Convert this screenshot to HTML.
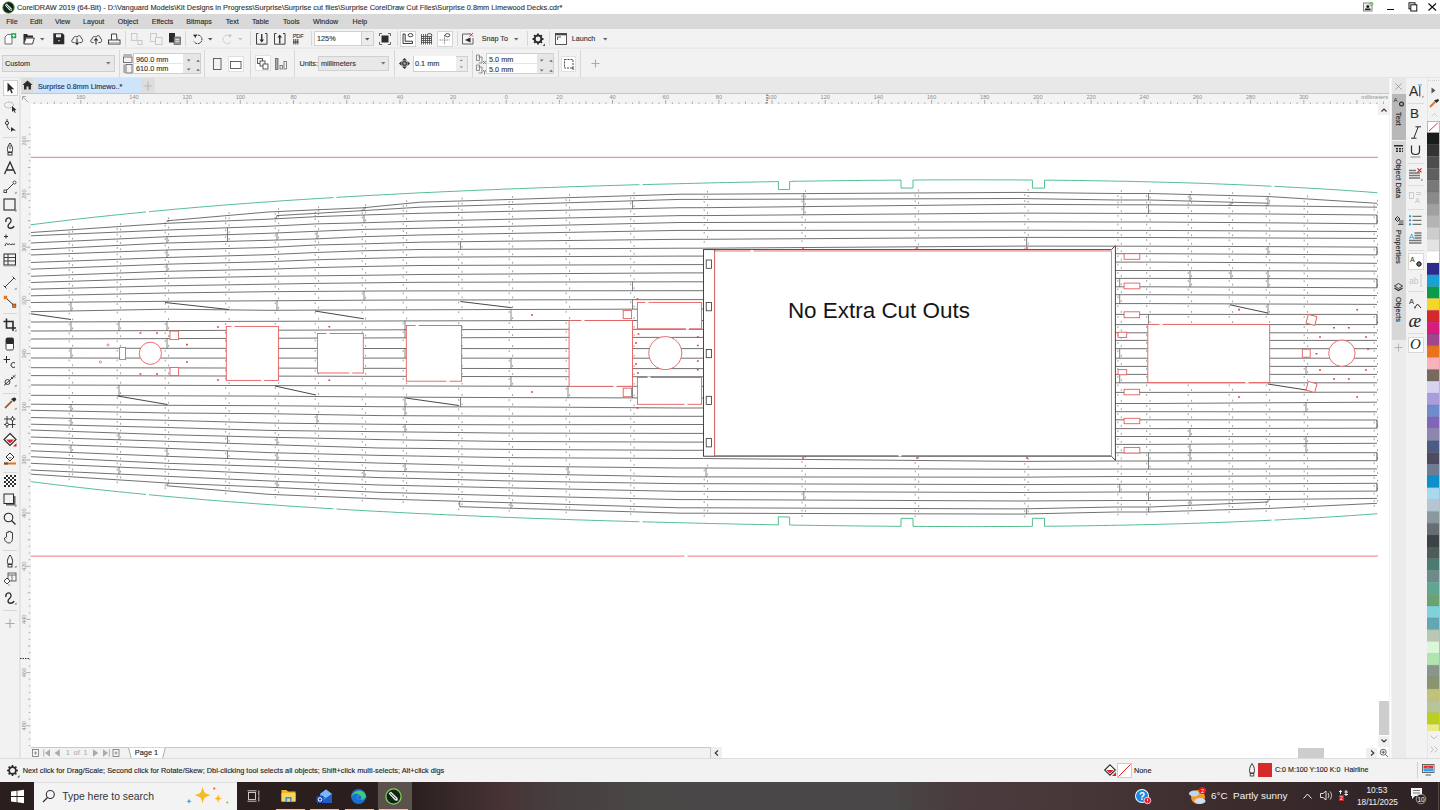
<!DOCTYPE html>
<html><head><meta charset="utf-8">
<style>
*{margin:0;padding:0;box-sizing:border-box}
html,body{width:1440px;height:810px;overflow:hidden;background:#f2f2f2;font-family:"Liberation Sans",sans-serif;color:#222}
.a{position:absolute}
.t{position:absolute;white-space:nowrap;line-height:1;-webkit-text-stroke:0.12px currentColor}
svg{position:absolute;overflow:visible}
.sep{position:absolute;width:1px;background:#d8d8d8}
</style></head><body>
<div class="a" style="left:0;top:0;width:1440px;height:14px;background:#fff"></div>
<svg style="left:1.5px;top:1px" width="13" height="13" viewBox="0 0 13 13"><circle cx="6.5" cy="6.5" r="5.8" fill="#10231a" stroke="#6cc04a" stroke-width="0.9"/><path d="M2.8 4.2 L4.6 2.6 L9.8 7.6 L10 10 L7.6 9.6Z" fill="#e6ece6"/><path d="M4.2 4.2 L8.6 8.4" stroke="#10231a" stroke-width="0.7"/><circle cx="8.8" cy="8.8" r="0.6" fill="#10231a"/></svg>
<div class="t" style="left:17px;top:4px;font-size:7.35px;color:#333">CorelDRAW 2019 (64-Bit) - D:\Vanguard Models\Kit Designs in Progress\Surprise\Surprise cut files\Surprise CorelDraw Cut Files\Surprise 0.8mm Limewood Decks.cdr*</div>
<svg style="left:1363px;top:2px" width="11" height="10"><rect x="0.5" y="1" width="8.5" height="8" fill="#eee" stroke="#888"/><circle cx="4.8" cy="4.5" r="1.5" fill="#222"/><rect x="2" y="6.5" width="5.5" height="1.6" fill="#222"/><circle cx="8.3" cy="2" r="1.6" fill="none" stroke="#4cbf6a" stroke-width="0.9"/></svg>
<div class="a" style="left:1387px;top:8.5px;width:7px;height:1.5px;background:#111"></div>
<svg style="left:1408px;top:2px" width="10" height="10"><rect x="1" y="0.8" width="6" height="6" fill="none" stroke="#111" stroke-width="1"/><rect x="2.8" y="2.8" width="6" height="6.2" fill="#fff" stroke="#111" stroke-width="1"/></svg>
<svg style="left:1428px;top:3px" width="9" height="8"><path d="M0.5 0.5 L8 7.5 M8 0.5 L0.5 7.5" stroke="#111" stroke-width="1.2"/></svg>
<div class="a" style="left:0;top:14px;width:1440px;height:15px;background:#d9d9d9"></div>
<div class="t" style="left:6.2px;top:19px;font-size:7.1px;color:#2a2a2a">File</div>
<div class="t" style="left:29.9px;top:19px;font-size:7.1px;color:#2a2a2a">Edit</div>
<div class="t" style="left:54.9px;top:19px;font-size:7.1px;color:#2a2a2a">View</div>
<div class="t" style="left:83px;top:19px;font-size:7.1px;color:#2a2a2a">Layout</div>
<div class="t" style="left:117.8px;top:19px;font-size:7.1px;color:#2a2a2a">Object</div>
<div class="t" style="left:151.8px;top:19px;font-size:7.1px;color:#2a2a2a">Effects</div>
<div class="t" style="left:186.2px;top:19px;font-size:7.1px;color:#2a2a2a">Bitmaps</div>
<div class="t" style="left:225.8px;top:19px;font-size:7.1px;color:#2a2a2a">Text</div>
<div class="t" style="left:252px;top:19px;font-size:7.1px;color:#2a2a2a">Table</div>
<div class="t" style="left:283px;top:19px;font-size:7.1px;color:#2a2a2a">Tools</div>
<div class="t" style="left:313px;top:19px;font-size:7.1px;color:#2a2a2a">Window</div>
<div class="t" style="left:352.6px;top:19px;font-size:7.1px;color:#2a2a2a">Help</div>
<div class="a" style="left:0;top:29px;width:1440px;height:19px;background:#f2f2f2;border-bottom:1px solid #ebebeb"></div>
<div class="sep" style="left:125.3px;top:31px;height:15px"></div>
<div class="sep" style="left:185.3px;top:31px;height:15px"></div>
<div class="sep" style="left:250px;top:31px;height:15px"></div>
<div class="sep" style="left:310.6px;top:31px;height:15px"></div>
<div class="sep" style="left:396.7px;top:31px;height:15px"></div>
<div class="sep" style="left:456.7px;top:31px;height:15px"></div>
<div class="sep" style="left:526.7px;top:31px;height:15px"></div>
<div class="sep" style="left:549.4px;top:31px;height:15px"></div>
<svg style="left:4px;top:33px" width="13" height="12"><path d="M1 4 L3.5 1.5 H8 V11 H1Z" fill="#fafafa" stroke="#666" stroke-width="0.9"/><rect x="7.2" y="0.2" width="5" height="5" fill="#1aa84a"/><path d="M9.7 1.2 V4.2 M8.2 2.7 H11.2" stroke="#fff" stroke-width="0.9"/></svg>
<svg style="left:22.8px;top:33px" width="12" height="12"><path d="M0.5 1 H4 L5 2.5 H10 V4.5 H3 L0.5 11Z" fill="#2b2b2b"/><path d="M3 5 H11.3 L9.5 11 H0.8Z" fill="#fafafa" stroke="#2b2b2b" stroke-width="0.9"/></svg>
<svg style="left:40px;top:38px" width="5" height="3"><path d="M0 0 H4.5 L2.25 2.5Z" fill="#666"/></svg>
<svg style="left:52.8px;top:33px" width="12" height="12"><path d="M0.3 0.3 H9.5 L11.3 2 V11.3 H0.3Z" fill="#2b2b2b"/><rect x="3" y="1.3" width="5" height="3" fill="#eee"/><rect x="5.3" y="7" width="1.3" height="1.3" fill="#eee"/></svg>
<svg style="left:71px;top:34px" width="12" height="11"><path d="M3.6 8.6 H2.4 C0.4 8.6 0.2 5.4 2.2 5.1 C2.2 2.6 4.9 1.7 6.1 3.2 C6.9 0.8 10.4 1.4 10.2 4.3 C12.1 4.4 12.1 8.6 10 8.6 H8.4" fill="none" stroke="#2b2b2b" stroke-width="0.9"/><path d="M6 4.5 V10.5 M4.3 8.5 L6 10.5 L7.7 8.5" fill="none" stroke="#2b2b2b" stroke-width="1.1"/></svg>
<svg style="left:89.8px;top:34px" width="12" height="11"><path d="M3.6 8.6 H2.4 C0.4 8.6 0.2 5.4 2.2 5.1 C2.2 2.6 4.9 1.7 6.1 3.2 C6.9 0.8 10.4 1.4 10.2 4.3 C12.1 4.4 12.1 8.6 10 8.6 H8.4" fill="none" stroke="#2b2b2b" stroke-width="0.9"/><path d="M6 10.5 V4.5 M4.3 6.5 L6 4.5 L7.7 6.5" fill="none" stroke="#2b2b2b" stroke-width="1.1"/></svg>
<svg style="left:108px;top:33px" width="13" height="12"><path d="M3.5 7 V1 H8.5 L9 7" fill="#fafafa" stroke="#2b2b2b" stroke-width="0.9"/><rect x="0.5" y="7" width="11.5" height="4" fill="#fafafa" stroke="#2b2b2b" stroke-width="0.9"/><rect x="1" y="9" width="10.5" height="1.6" fill="#bbb"/></svg>
<svg style="left:131px;top:33px" width="12" height="12"><rect x="0.5" y="0.5" width="5.5" height="7" fill="none" stroke="#c8c8c8"/><rect x="7" y="7.5" width="4" height="4" fill="none" stroke="#c8c8c8"/></svg>
<svg style="left:150px;top:33px" width="13" height="12"><rect x="0.5" y="0.5" width="6" height="8" fill="none" stroke="#c8c8c8"/><rect x="5.5" y="4.5" width="6.5" height="7" fill="#f2f2f2" stroke="#c8c8c8"/></svg>
<svg style="left:168.7px;top:33px" width="12" height="12"><rect x="0" y="0" width="6" height="9.5" fill="#2b2b2b"/><rect x="5" y="4" width="6.5" height="7.5" fill="#999" stroke="#555" stroke-width="0.7"/><path d="M6.5 6.5 H10 M6.5 8.3 H10" stroke="#fff" stroke-width="0.7"/></svg>
<svg style="left:191.7px;top:33px" width="12" height="12"><path d="M3.2 2.8 A4.3 4.3 0 1 1 2 8.6" fill="none" stroke="#2b2b2b" stroke-width="1" stroke-dasharray="2 0.7"/><path d="M1 1.8 L4.6 1.5 L3.6 5Z" fill="#2b2b2b"/></svg>
<svg style="left:208.3px;top:38px" width="5" height="3"><path d="M0 0 H4.5 L2.25 2.5Z" fill="#555"/></svg>
<svg style="left:221px;top:33px" width="12" height="12"><path d="M8.8 2.8 A4.3 4.3 0 1 0 10 8.6" fill="none" stroke="#c4c4c4" stroke-width="1" stroke-dasharray="2 0.7"/><path d="M11 1.8 L7.4 1.5 L8.4 5Z" fill="#c4c4c4"/></svg>
<svg style="left:238.3px;top:38px" width="5" height="3"><path d="M0 0 H4.5 L2.25 2.5Z" fill="#c4c4c4"/></svg>
<svg style="left:255.8px;top:33px" width="12" height="12"><path d="M2.5 0.5 H0.5 V11.2 H11 V0.5 H9" fill="none" stroke="#2b2b2b" stroke-width="0.9"/><path d="M5.75 1 V8.5" stroke="#2b2b2b" stroke-width="1.3"/><path d="M3.5 6.5 L5.75 9.5 L8 6.5Z" fill="#2b2b2b"/></svg>
<svg style="left:273.9px;top:33px" width="12" height="12"><path d="M2.5 0.5 H0.5 V11.2 H11 V0.5 H9" fill="none" stroke="#2b2b2b" stroke-width="0.9"/><path d="M5.75 3.5 V10.5" stroke="#2b2b2b" stroke-width="1.3"/><path d="M3.5 4.5 L5.75 1.5 L8 4.5Z" fill="#2b2b2b"/></svg>
<div class="t" style="left:292.8px;top:33.8px;font-size:5.6px;color:#333;letter-spacing:-0.2px">PDF</div>
<svg style="left:293px;top:39px" width="6" height="6"><path d="M0.8 0 V5.5 M2.8 0 V5.5 M4.8 0 V5.5 M0 3 H5.5" stroke="#2b2b2b" stroke-width="0.9"/></svg>
<div class="a" style="left:314.2px;top:31.3px;width:59.4px;height:15px;background:#fff;border:1px solid #d0d0d0"></div>
<div class="a" style="left:361.3px;top:31.3px;width:12.3px;height:15px;background:#ececec;border:1px solid #d0d0d0"></div>
<svg style="left:365px;top:38px" width="5" height="3"><path d="M0 0 H4.5 L2.25 2.5Z" fill="#555"/></svg>
<div class="t" style="left:317px;top:35px;font-size:7.3px;color:#333">125%</div>
<svg style="left:378.9px;top:33px" width="12" height="12"><rect x="2.5" y="2.5" width="7" height="7" fill="#2b2b2b"/><path d="M0.5 3 V0.5 H3 M9 0.5 H11.5 V3 M11.5 9 V11.5 H9 M3 11.5 H0.5 V9" fill="none" stroke="#555" stroke-width="0.9"/></svg>
<div class="a" style="left:400.2px;top:31px;width:15.4px;height:15.5px;background:#fff;border:1px solid #d4d4d4"></div>
<svg style="left:402px;top:33px" width="12" height="12"><path d="M1 1 V10.5 H10.5 V8.2 H3.2 V1Z" fill="#f0f0f0" stroke="#2b2b2b" stroke-width="0.9"/><ellipse cx="8.5" cy="2.2" rx="2.4" ry="1.6" fill="none" stroke="#2b2b2b" stroke-width="0.9"/></svg>
<svg style="left:420.6px;top:33px" width="12" height="12"><path d="M0.5 1 V11.5 M2.5 1 V11.5 M4.5 1 V11.5 M6.5 3 V11.5 M8.5 3 V11.5 M10.5 3 V11.5 M0 3.5 H11 M0 5.5 H11 M0 7.5 H11 M0 9.5 H11" stroke="#444" stroke-width="0.8"/><ellipse cx="8.5" cy="2.2" rx="2.4" ry="1.6" fill="#f2f2f2" stroke="#2b2b2b" stroke-width="0.8"/></svg>
<div class="a" style="left:437.2px;top:31px;width:15.6px;height:15.5px;background:#fff;border:1px solid #d4d4d4"></div>
<svg style="left:439px;top:33px" width="12" height="12"><path d="M5.5 2 V11.5 M0.5 7 H10.5" stroke="#666" stroke-width="0.8" stroke-dasharray="1.5 0.8"/><ellipse cx="8.5" cy="2.2" rx="2.4" ry="1.6" fill="none" stroke="#2b2b2b" stroke-width="0.8"/></svg>
<svg style="left:462px;top:33px" width="12" height="12"><path d="M0.5 1 H8 M0.5 1 V11 H11 V5" fill="none" stroke="#555" stroke-width="0.9"/><path d="M8.5 4.5 L3 7 L8.5 9.5Z" fill="#2b2b2b"/><path d="M7.5 0 L11 3.5 M11 0 L7.5 3.5" stroke="#e02020" stroke-width="0.9"/></svg>
<div class="t" style="left:481.7px;top:35px;font-size:7.2px;color:#333">Snap To</div>
<svg style="left:514.4px;top:38px" width="5" height="3"><path d="M0 0 H4.5 L2.25 2.5Z" fill="#666"/></svg>
<svg style="left:532px;top:33px" width="14" height="13"><circle cx="6" cy="6" r="3.4" fill="none" stroke="#2b2b2b" stroke-width="2"/><path d="M6 0.5 V2.5 M6 9.5 V11.5 M0.5 6 H2.5 M9.5 6 H11.5 M2.1 2.1 L3.5 3.5 M8.5 8.5 L9.9 9.9 M9.9 2.1 L8.5 3.5 M3.5 8.5 L2.1 9.9" stroke="#2b2b2b" stroke-width="1.8"/><path d="M13 10.5 V13 H10.5Z" fill="#555"/></svg>
<svg style="left:555px;top:33px" width="12" height="12"><rect x="0.5" y="0.5" width="11" height="11" fill="#fafafa" stroke="#444" stroke-width="0.9"/><rect x="0.5" y="0.5" width="11" height="1.8" fill="#444"/><path d="M2.5 4 H6 M2.5 4 V7" stroke="#555" stroke-width="0.9"/></svg>
<div class="t" style="left:571.7px;top:35px;font-size:7.2px;color:#333">Launch</div>
<svg style="left:602.8px;top:38px" width="5" height="3"><path d="M0 0 H4.5 L2.25 2.5Z" fill="#666"/></svg>
<div class="a" style="left:0;top:48px;width:1440px;height:30px;background:#f2f2f2;border-top:1px solid #e9e9e9;border-bottom:1px solid #e4e4e4"></div>
<div class="sep" style="left:118.7px;top:50px;height:27px"></div>
<div class="sep" style="left:204.3px;top:50px;height:27px"></div>
<div class="sep" style="left:249.8px;top:50px;height:27px"></div>
<div class="sep" style="left:294.4px;top:50px;height:27px"></div>
<div class="sep" style="left:393.7px;top:50px;height:27px"></div>
<div class="sep" style="left:471.7px;top:50px;height:27px"></div>
<div class="sep" style="left:557.8px;top:50px;height:27px"></div>
<div class="sep" style="left:580.2px;top:50px;height:27px"></div>
<div class="a" style="left:2px;top:55.4px;width:113px;height:16.3px;background:#e8e8e8;border:1px solid #cfcfcf"></div>
<div class="t" style="left:5px;top:59.5px;font-size:7.3px;color:#333">Custom</div>
<svg style="left:106px;top:62px" width="5" height="3"><path d="M0 0 H4.5 L2.25 2.5Z" fill="#777"/></svg>
<svg style="left:123px;top:54px" width="10" height="20"><path d="M0.5 1 H9" stroke="#444" stroke-width="0.7"/><rect x="0.5" y="3" width="8.5" height="5.5" fill="none" stroke="#555" stroke-width="0.8"/><rect x="0.5" y="10.5" width="1.2" height="8.5" fill="#888"/><rect x="3" y="10.5" width="6" height="8.5" fill="none" stroke="#555" stroke-width="0.8"/></svg>
<div class="a" style="left:133.1px;top:53.3px;width:67.8px;height:20.4px;background:#e6e6e6;border:1px solid #d0d0d0"></div>
<div class="a" style="left:134px;top:54.2px;width:49.4px;height:9px;background:#fff"></div>
<div class="a" style="left:134px;top:63.8px;width:49.4px;height:9px;background:#fff"></div>
<div class="t" style="left:136px;top:55.6px;font-size:7.3px;color:#333">960.0 mm</div>
<div class="t" style="left:136px;top:65.3px;font-size:7.3px;color:#333">610.0 mm</div>
<svg style="left:186px;top:58.5px" width="16" height="4"><path d="M0.8 0.6 H4.6 L2.7 2.6Z M10.2 2.8 H14 L12.1 0.8Z" fill="#6a6a6a"/></svg>
<svg style="left:186px;top:68.3px" width="16" height="4"><path d="M0.8 0.6 H4.6 L2.7 2.6Z M10.2 2.8 H14 L12.1 0.8Z" fill="#6a6a6a"/></svg>
<svg style="left:213px;top:58px" width="9" height="12"><rect x="0.5" y="0.5" width="7.5" height="11" fill="none" stroke="#555" stroke-width="0.9"/></svg>
<div class="a" style="left:228px;top:55.5px;width:15.6px;height:16px;background:#fff;border:1px solid #e0e0e0"></div>
<svg style="left:230px;top:61px" width="12" height="8"><rect x="0.5" y="0.5" width="10.5" height="7" fill="none" stroke="#555" stroke-width="0.9"/></svg>
<div class="a" style="left:255px;top:55.4px;width:15.6px;height:15.9px;background:#fff;border:1px solid #e0e0e0"></div>
<svg style="left:257px;top:58px" width="12" height="12"><rect x="0.5" y="0.5" width="5" height="5" fill="none" stroke="#333" stroke-width="0.8"/><rect x="3" y="3" width="5" height="5" fill="#fff" stroke="#333" stroke-width="0.8"/><rect x="6" y="6" width="5" height="5" fill="#fff" stroke="#333" stroke-width="0.8"/></svg>
<svg style="left:275px;top:58px" width="13" height="12"><rect x="0.5" y="0.5" width="2.5" height="11" fill="#aaa" stroke="#555" stroke-width="0.7"/><rect x="5" y="7.5" width="2.5" height="3.5" fill="none" stroke="#555" stroke-width="0.7"/><rect x="9" y="3.5" width="2.5" height="7.5" fill="none" stroke="#555" stroke-width="0.7"/></svg>
<div class="t" style="left:299.4px;top:59.8px;font-size:7.3px;color:#333">Units:</div>
<div class="a" style="left:318.3px;top:55.8px;width:71.1px;height:15.5px;background:#e8e8e8;border:1px solid #d0d0d0"></div>
<div class="t" style="left:321px;top:59.8px;font-size:7.3px;color:#333">millimeters</div>
<svg style="left:381px;top:62px" width="5" height="3"><path d="M0 0 H4.5 L2.25 2.5Z" fill="#777"/></svg>
<svg style="left:398.9px;top:58px" width="11" height="11"><path d="M5.5 0 L8 2.5 H3Z M5.5 11 L8 8.5 H3Z M0 5.5 L2.5 3 V8Z M11 5.5 L8.5 3 V8Z" fill="#333"/><circle cx="5.5" cy="5.5" r="2.7" fill="#444"/><circle cx="5.5" cy="5.5" r="1.2" fill="#aaa"/></svg>
<div class="a" style="left:412.6px;top:55.5px;width:55px;height:16.2px;background:#ececec;border:1px solid #d0d0d0"></div>
<div class="a" style="left:413.5px;top:56.4px;width:42.2px;height:14.4px;background:#fff"></div>
<div class="t" style="left:415px;top:60px;font-size:7.3px;color:#333">0.1 mm</div>
<svg style="left:459px;top:59px" width="5" height="10"><path d="M0.8 2 H3.8 L2.3 0.5Z M0.8 7.5 H3.8 L2.3 9Z" fill="#777"/></svg>
<svg style="left:475.6px;top:53.5px" width="12" height="21"><path d="M0.5 1 H3.5 V6.5 H0.5Z M2.5 3 H6 V9 H2.5" fill="none" stroke="#666" stroke-width="0.7"/><path d="M7 7 L10 10 M10 7 L7 10" stroke="#555" stroke-width="0.7"/><path d="M0.5 11 H3.5 V16.5 H0.5Z M2.5 13 H6 V19 H2.5" fill="none" stroke="#666" stroke-width="0.7"/><path d="M7 16 L8.5 18 L10 16 M8.5 18 V20.5" fill="none" stroke="#555" stroke-width="0.7"/></svg>
<div class="a" style="left:486.3px;top:53.3px;width:67.5px;height:21px;background:#e6e6e6;border:1px solid #d0d0d0"></div>
<div class="a" style="left:487.2px;top:54.2px;width:49.5px;height:9.3px;background:#fff"></div>
<div class="a" style="left:487.2px;top:64.2px;width:49.5px;height:9.3px;background:#fff"></div>
<div class="t" style="left:489px;top:55.7px;font-size:7.3px;color:#333">5.0 mm</div>
<div class="t" style="left:489px;top:65.6px;font-size:7.3px;color:#333">5.0 mm</div>
<svg style="left:538.5px;top:58.5px" width="16" height="4"><path d="M0.8 0.6 H4.6 L2.7 2.6Z M10.2 2.8 H14 L12.1 0.8Z" fill="#6a6a6a"/></svg>
<svg style="left:538.5px;top:68.5px" width="16" height="4"><path d="M0.8 0.6 H4.6 L2.7 2.6Z M10.2 2.8 H14 L12.1 0.8Z" fill="#6a6a6a"/></svg>
<div class="a" style="left:561.4px;top:55.9px;width:15px;height:15.8px;background:#fff;border:1px solid #e0e0e0"></div>
<svg style="left:563px;top:58px" width="12" height="12"><rect x="1.5" y="1.5" width="8.5" height="8.5" fill="none" stroke="#333" stroke-width="0.9" stroke-dasharray="2 1"/><path d="M9 9 L11.5 11.5 L9.5 11.5Z" fill="#333"/></svg>
<svg style="left:591px;top:59px" width="9" height="9"><path d="M4.5 0.5 V8.5 M0.5 4.5 H8.5" stroke="#aaa" stroke-width="1.1"/></svg>
<div class="a" style="left:0;top:78px;width:20px;height:680px;background:#f2f2f2;border-right:1px solid #e2e2e2"></div>
<div class="a" style="left:2.5px;top:79.7px;width:15.3px;height:16.8px;background:#fff;border:1px solid #cfcfcf"></div>
<svg style="left:6px;top:82px" width="9" height="12"><path d="M1.5 0.5 V10 L3.8 7.8 L5.5 11.5 L6.8 10.8 L5.2 7.3 L8.2 7.3Z" fill="#2b2b2b"/></svg>
<svg style="left:3px;top:100.4px" width="14" height="14"><ellipse cx="6" cy="5" rx="4.5" ry="3" fill="none" stroke="#888" stroke-width="0.8" stroke-dasharray="1.2 0.6"/><path d="M9 6 V12 L10.5 10.5 L11.8 13 L12.6 12.5 L11.5 10.2 L13.5 10Z" fill="#2b2b2b"/></svg>
<svg style="left:3px;top:119.3px" width="14" height="14"><circle cx="4" cy="4" r="1.6" fill="none" stroke="#2b2b2b" stroke-width="0.9"/><path d="M4 0 V2.4 M4 5.6 C4 9 6 10 7 11" fill="none" stroke="#2b2b2b" stroke-width="0.9"/><path d="M8 8 V13 L9.5 11.5 L13 11.5Z" fill="#2b2b2b"/></svg>
<div class="a" style="left:3px;top:137px;width:14px;height:1px;background:#d8d8d8"></div>
<svg style="left:3px;top:142.4px" width="14" height="14"><path d="M7 1 C4 5 4 8 5 10 H9 C10 8 10 5 7 1Z" fill="none" stroke="#2b2b2b" stroke-width="1"/><path d="M7 3 V7" stroke="#2b2b2b" stroke-width="0.8"/><rect x="5" y="10.5" width="4" height="2.5" fill="none" stroke="#2b2b2b" stroke-width="0.9"/></svg>
<svg style="left:3px;top:161.2px" width="14" height="14"><path d="M1.5 13 L7 1 L12.5 13 M3.5 9 H10.5" fill="none" stroke="#2b2b2b" stroke-width="1.3"/></svg>
<svg style="left:3px;top:180.1px" width="14" height="14"><path d="M3 11 L11 3" stroke="#2b2b2b" stroke-width="0.9"/><rect x="1" y="10" width="2.6" height="2.6" fill="#fff" stroke="#2b2b2b" stroke-width="0.8"/><circle cx="11.5" cy="2.5" r="1.5" fill="#fff" stroke="#2b2b2b" stroke-width="0.8"/><path d="M13.5 11.5 V13.5 H11.5Z" fill="#666"/></svg>
<svg style="left:3px;top:198.0px" width="14" height="14"><rect x="1" y="1" width="11" height="11" fill="none" stroke="#2b2b2b" stroke-width="1.1"/><path d="M13.5 11.5 V13.5 H11.5Z" fill="#666"/></svg>
<svg style="left:3px;top:215.8px" width="14" height="14"><path d="M3 6 C2 2 7 0 8 4 C9 7 5 7 5 10 C5 13 10 13 11 10" fill="none" stroke="#2b2b2b" stroke-width="1.3"/></svg>
<svg style="left:3px;top:233.6px" width="14" height="14"><path d="M3 0.5 V4.5 M1 2.5 H5 M2 12 C3 8 4 9 5 11 C6 9 7 10 8 11 C9 9 10 11 12 10" fill="none" stroke="#2b2b2b" stroke-width="1"/></svg>
<svg style="left:3px;top:252.7px" width="14" height="14"><rect x="1" y="1" width="11.5" height="11" fill="none" stroke="#2b2b2b" stroke-width="1"/><path d="M1 4.5 H12.5 M1 8 H12.5 M5 1 V12" stroke="#2b2b2b" stroke-width="0.9"/></svg>
<div class="a" style="left:3px;top:266px;width:14px;height:1px;background:#d8d8d8"></div>
<svg style="left:3px;top:275.8px" width="14" height="14"><path d="M2 11 L11 2 M0.5 9.5 L3.5 12.5 M9.5 0.5 L12.5 3.5" stroke="#2b2b2b" stroke-width="0.9"/><path d="M13.5 11.5 V13.5 H11.5Z" fill="#666"/></svg>
<svg style="left:3px;top:294.7px" width="14" height="14"><path d="M2.5 2.5 L11 10.5" stroke="#2b2b2b" stroke-width="1"/><rect x="0.8" y="0.8" width="3.4" height="3.4" fill="#e8731b"/><rect x="9.5" y="9" width="3.4" height="3.4" fill="#e8731b" stroke="#333" stroke-width="0.5"/></svg>
<div class="a" style="left:3px;top:313px;width:14px;height:1px;background:#d8d8d8"></div>
<svg style="left:3px;top:317.7px" width="14" height="14"><path d="M3.5 0.5 V10 H13 M0.5 3.5 H10 V13" fill="none" stroke="#2b2b2b" stroke-width="1.6"/><path d="M13.5 11.5 V13.5 H11.5Z" fill="#666"/></svg>
<svg style="left:3px;top:336.6px" width="14" height="14"><rect x="3" y="1" width="7.5" height="12" rx="1.5" fill="#fff" stroke="#2b2b2b" stroke-width="0.9"/><rect x="3" y="1" width="7.5" height="6" rx="1" fill="#2b2b2b"/></svg>
<svg style="left:3px;top:354.5px" width="14" height="14"><path d="M3.5 1 V8 M0.5 4.5 H7" stroke="#2b2b2b" stroke-width="1"/><path d="M12 8 A2.5 2.5 0 1 0 12 12" fill="none" stroke="#2b2b2b" stroke-width="1"/></svg>
<svg style="left:3px;top:373.4px" width="14" height="14"><circle cx="4.5" cy="9" r="2.5" fill="none" stroke="#2b2b2b" stroke-width="0.9"/><path d="M1 12.5 L12.5 2 M8 4 L10 6 M10 2.5 L12 4.5" stroke="#2b2b2b" stroke-width="0.9"/><path d="M13.5 11.5 V13.5 H11.5Z" fill="#666"/></svg>
<div class="a" style="left:3px;top:393px;width:14px;height:1px;background:#d8d8d8"></div>
<svg style="left:3px;top:396.4px" width="14" height="14"><path d="M2 12 L9 5" stroke="#e8731b" stroke-width="2.2"/><path d="M2 12 L9 5" stroke="#333" stroke-width="0.5"/><path d="M8 3 L11 6 L13 4 C14 3 12 1 11 1.5Z" fill="#2b2b2b"/><path d="M13.5 11.5 V13.5 H11.5Z" fill="#666"/></svg>
<svg style="left:3px;top:414.5px" width="14" height="14"><path d="M4 1 V13 M9.5 1 V13 M1 4 H12.5 M1 9.5 H12.5" stroke="#2b2b2b" stroke-width="0.9"/><circle cx="4" cy="9.5" r="1.5" fill="#fff" stroke="#2b2b2b" stroke-width="0.9"/><circle cx="9.5" cy="4" r="1.5" fill="#fff" stroke="#2b2b2b" stroke-width="0.9"/></svg>
<svg style="left:3px;top:433.4px" width="14" height="14"><path d="M7 0.5 L13 6.5 L7 12.5 L1 6.5Z" fill="#fff" stroke="#2b2b2b" stroke-width="1.2"/><path d="M3 6.5 H11 L7 10.5Z" fill="#e02020"/><path d="M13.5 10 V13.5 H10Z" fill="#e02020"/></svg>
<svg style="left:3px;top:452.3px" width="14" height="14"><path d="M7 1 L11 5 L7 9 L3 5Z" fill="#fff" stroke="#2b2b2b" stroke-width="1"/><path d="M5 5 H9 L7 7Z" fill="#e8731b"/><rect x="1" y="10.5" width="12" height="2" fill="#e8731b"/><rect x="1" y="10.5" width="4" height="2" fill="#555"/></svg>
<div class="a" style="left:3px;top:472px;width:14px;height:1px;background:#d8d8d8"></div>
<svg style="left:3px;top:474.4px" width="14" height="14"><rect x="1" y="1" width="12" height="12" fill="#2b2b2b"/><path d="M1 1 h2 v2 h-2z M5 1 h2 v2 h-2z M9 1 h2 v2 h-2z M3 3 h2 v2 h-2z M7 3 h2 v2 h-2z M11 3 h2 v2 h-2z M1 5 h2 v2 h-2z M5 5 h2 v2 h-2z M9 5 h2 v2 h-2z M3 7 h2 v2 h-2z M7 7 h2 v2 h-2z M11 7 h2 v2 h-2z M1 9 h2 v2 h-2z M5 9 h2 v2 h-2z M9 9 h2 v2 h-2z M3 11 h2 v2 h-2z M7 11 h2 v2 h-2z M11 11 h2 v2 h-2z" fill="#fff"/></svg>
<svg style="left:3px;top:493.2px" width="14" height="14"><rect x="3" y="3" width="9.5" height="9.5" fill="#666"/><rect x="1" y="1" width="9.5" height="9.5" fill="#f2f2f2" stroke="#2b2b2b" stroke-width="1"/><path d="M13.5 11.5 V13.5 H11.5Z" fill="#666"/></svg>
<svg style="left:3px;top:512.1px" width="14" height="14"><circle cx="5.5" cy="5.5" r="4.3" fill="none" stroke="#2b2b2b" stroke-width="1.1"/><path d="M8.5 8.5 L12.5 12.5" stroke="#2b2b2b" stroke-width="1.3"/></svg>
<svg style="left:3px;top:530.0px" width="14" height="14"><path d="M3.5 7 V3 C3.5 2 5 2 5 3 V2 C5 1 6.5 1 6.5 2 C6.5 1 8 1 8 2 V3 C8 2 9.5 2 9.5 3 V8 C9.5 12 7.5 13 6 13 C4 13 2 11.5 1.5 9 C1 7.5 2.5 7 3.5 8" fill="none" stroke="#2b2b2b" stroke-width="0.9"/></svg>
<div class="a" style="left:3px;top:549.5px;width:14px;height:1px;background:#d8d8d8"></div>
<svg style="left:3px;top:554.1px" width="14" height="14"><path d="M7 1 C4 5 4 8 5 10 H9 C10 8 10 5 7 1Z" fill="none" stroke="#2b2b2b" stroke-width="1"/><rect x="5" y="10.5" width="4" height="2.5" fill="none" stroke="#2b2b2b" stroke-width="0.9"/><path d="M13.5 11.5 V13.5 H11.5Z" fill="#666"/></svg>
<svg style="left:3px;top:572.2px" width="14" height="14"><rect x="5" y="1" width="8" height="8" fill="none" stroke="#555" stroke-width="0.9"/><path d="M5 3 H13 M9 3 V9" stroke="#555" stroke-width="0.8"/><path d="M4 6 L7 9 L4 12 L1 9Z" fill="#fff" stroke="#2b2b2b" stroke-width="0.9"/><circle cx="6" cy="13" r="0.8" fill="#e8731b"/></svg>
<svg style="left:3px;top:591.0px" width="14" height="14"><path d="M3 6 C2 2 7 0 8 4 C9 7 5 7 5 10 C5 13 10 13 11 10" fill="none" stroke="#2b2b2b" stroke-width="1.3"/><path d="M13.5 11.5 V13.5 H11.5Z" fill="#666"/></svg>
<div class="a" style="left:3px;top:609.5px;width:14px;height:1px;background:#d8d8d8"></div>
<svg style="left:3px;top:617.3px" width="14" height="14"><path d="M7 2 V11 M2.5 6.5 H11.5" stroke="#aaa" stroke-width="1.1"/></svg>
<div class="a" style="left:21px;top:78px;width:1369px;height:16px;background:#e8e8e8"></div>
<div class="a" style="left:21px;top:78px;width:13px;height:15px;background:#dcdcdc"></div>
<svg style="left:22px;top:80px" width="11" height="10"><path d="M0.5 5 L5.5 0.5 L10.5 5 H9 V9.5 H6.5 V6.5 H4.5 V9.5 H2 V5Z" fill="#2b2b2b"/></svg>
<div class="a" style="left:34.5px;top:78px;width:106px;height:15px;background:#cde4fa"></div>
<div class="t" style="left:38px;top:82.5px;font-size:7.2px;color:#2a2a4a">Surprise 0.8mm Limewo..*</div>
<div class="a" style="left:141px;top:78px;width:14px;height:15px;background:#dedede"></div>
<svg style="left:143px;top:80.5px" width="10" height="10"><path d="M5 0.5 V9.5 M0.5 5 H9.5" stroke="#b8b8b8" stroke-width="1.2"/></svg>
<div class="a" style="left:21px;top:92.8px;width:1368px;height:1.6px;background:#9fd3f2"></div>
<div class="a" style="left:19.5px;top:94.4px;width:1369.5px;height:9.8px;background:#f3f3f3"></div>
<div class="a" style="left:19.5px;top:94.4px;width:11px;height:663.6px;background:#f3f3f3;border-left:1px solid #e6e6e6"></div>
<svg style="left:22px;top:95.5px" width="8" height="8"><path d="M0.5 0.5 H4 M0.5 0.5 V4 M1 1 L6.5 6.5" stroke="#999" stroke-width="0.8" fill="none"/></svg>
<svg style="left:0;top:0" width="1440" height="810">
<line x1="34.3" y1="102.5" x2="34.3" y2="104" stroke="#9a9a9a" stroke-width="0.8"/>
<line x1="41.0" y1="102.5" x2="41.0" y2="104" stroke="#9a9a9a" stroke-width="0.8"/>
<line x1="47.6" y1="102.5" x2="47.6" y2="104" stroke="#9a9a9a" stroke-width="0.8"/>
<line x1="54.3" y1="101.5" x2="54.3" y2="104" stroke="#9a9a9a" stroke-width="0.8"/>
<line x1="60.9" y1="102.5" x2="60.9" y2="104" stroke="#9a9a9a" stroke-width="0.8"/>
<line x1="67.5" y1="102.5" x2="67.5" y2="104" stroke="#9a9a9a" stroke-width="0.8"/>
<line x1="74.2" y1="102.5" x2="74.2" y2="104" stroke="#9a9a9a" stroke-width="0.8"/>
<line x1="80.8" y1="100.0" x2="80.8" y2="104" stroke="#9a9a9a" stroke-width="0.8"/>
<text x="80.8" y="99.4" font-size="5.6" fill="#8c8c8c" text-anchor="middle" font-family="Liberation Sans">160</text>
<line x1="87.5" y1="102.5" x2="87.5" y2="104" stroke="#9a9a9a" stroke-width="0.8"/>
<line x1="94.1" y1="102.5" x2="94.1" y2="104" stroke="#9a9a9a" stroke-width="0.8"/>
<line x1="100.8" y1="102.5" x2="100.8" y2="104" stroke="#9a9a9a" stroke-width="0.8"/>
<line x1="107.4" y1="101.5" x2="107.4" y2="104" stroke="#9a9a9a" stroke-width="0.8"/>
<line x1="114.1" y1="102.5" x2="114.1" y2="104" stroke="#9a9a9a" stroke-width="0.8"/>
<line x1="120.7" y1="102.5" x2="120.7" y2="104" stroke="#9a9a9a" stroke-width="0.8"/>
<line x1="127.4" y1="102.5" x2="127.4" y2="104" stroke="#9a9a9a" stroke-width="0.8"/>
<line x1="134.0" y1="100.0" x2="134.0" y2="104" stroke="#9a9a9a" stroke-width="0.8"/>
<text x="134.0" y="99.4" font-size="5.6" fill="#8c8c8c" text-anchor="middle" font-family="Liberation Sans">140</text>
<line x1="140.7" y1="102.5" x2="140.7" y2="104" stroke="#9a9a9a" stroke-width="0.8"/>
<line x1="147.3" y1="102.5" x2="147.3" y2="104" stroke="#9a9a9a" stroke-width="0.8"/>
<line x1="153.9" y1="102.5" x2="153.9" y2="104" stroke="#9a9a9a" stroke-width="0.8"/>
<line x1="160.6" y1="101.5" x2="160.6" y2="104" stroke="#9a9a9a" stroke-width="0.8"/>
<line x1="167.2" y1="102.5" x2="167.2" y2="104" stroke="#9a9a9a" stroke-width="0.8"/>
<line x1="173.9" y1="102.5" x2="173.9" y2="104" stroke="#9a9a9a" stroke-width="0.8"/>
<line x1="180.5" y1="102.5" x2="180.5" y2="104" stroke="#9a9a9a" stroke-width="0.8"/>
<line x1="187.2" y1="100.0" x2="187.2" y2="104" stroke="#9a9a9a" stroke-width="0.8"/>
<text x="187.2" y="99.4" font-size="5.6" fill="#8c8c8c" text-anchor="middle" font-family="Liberation Sans">120</text>
<line x1="193.8" y1="102.5" x2="193.8" y2="104" stroke="#9a9a9a" stroke-width="0.8"/>
<line x1="200.5" y1="102.5" x2="200.5" y2="104" stroke="#9a9a9a" stroke-width="0.8"/>
<line x1="207.1" y1="102.5" x2="207.1" y2="104" stroke="#9a9a9a" stroke-width="0.8"/>
<line x1="213.8" y1="101.5" x2="213.8" y2="104" stroke="#9a9a9a" stroke-width="0.8"/>
<line x1="220.4" y1="102.5" x2="220.4" y2="104" stroke="#9a9a9a" stroke-width="0.8"/>
<line x1="227.1" y1="102.5" x2="227.1" y2="104" stroke="#9a9a9a" stroke-width="0.8"/>
<line x1="233.7" y1="102.5" x2="233.7" y2="104" stroke="#9a9a9a" stroke-width="0.8"/>
<line x1="240.3" y1="100.0" x2="240.3" y2="104" stroke="#9a9a9a" stroke-width="0.8"/>
<text x="240.3" y="99.4" font-size="5.6" fill="#8c8c8c" text-anchor="middle" font-family="Liberation Sans">100</text>
<line x1="247.0" y1="102.5" x2="247.0" y2="104" stroke="#9a9a9a" stroke-width="0.8"/>
<line x1="253.6" y1="102.5" x2="253.6" y2="104" stroke="#9a9a9a" stroke-width="0.8"/>
<line x1="260.3" y1="102.5" x2="260.3" y2="104" stroke="#9a9a9a" stroke-width="0.8"/>
<line x1="266.9" y1="101.5" x2="266.9" y2="104" stroke="#9a9a9a" stroke-width="0.8"/>
<line x1="273.6" y1="102.5" x2="273.6" y2="104" stroke="#9a9a9a" stroke-width="0.8"/>
<line x1="280.2" y1="102.5" x2="280.2" y2="104" stroke="#9a9a9a" stroke-width="0.8"/>
<line x1="286.9" y1="102.5" x2="286.9" y2="104" stroke="#9a9a9a" stroke-width="0.8"/>
<line x1="293.5" y1="100.0" x2="293.5" y2="104" stroke="#9a9a9a" stroke-width="0.8"/>
<text x="293.5" y="99.4" font-size="5.6" fill="#8c8c8c" text-anchor="middle" font-family="Liberation Sans">80</text>
<line x1="300.2" y1="102.5" x2="300.2" y2="104" stroke="#9a9a9a" stroke-width="0.8"/>
<line x1="306.8" y1="102.5" x2="306.8" y2="104" stroke="#9a9a9a" stroke-width="0.8"/>
<line x1="313.5" y1="102.5" x2="313.5" y2="104" stroke="#9a9a9a" stroke-width="0.8"/>
<line x1="320.1" y1="101.5" x2="320.1" y2="104" stroke="#9a9a9a" stroke-width="0.8"/>
<line x1="326.8" y1="102.5" x2="326.8" y2="104" stroke="#9a9a9a" stroke-width="0.8"/>
<line x1="333.4" y1="102.5" x2="333.4" y2="104" stroke="#9a9a9a" stroke-width="0.8"/>
<line x1="340.0" y1="102.5" x2="340.0" y2="104" stroke="#9a9a9a" stroke-width="0.8"/>
<line x1="346.7" y1="100.0" x2="346.7" y2="104" stroke="#9a9a9a" stroke-width="0.8"/>
<text x="346.7" y="99.4" font-size="5.6" fill="#8c8c8c" text-anchor="middle" font-family="Liberation Sans">60</text>
<line x1="353.3" y1="102.5" x2="353.3" y2="104" stroke="#9a9a9a" stroke-width="0.8"/>
<line x1="360.0" y1="102.5" x2="360.0" y2="104" stroke="#9a9a9a" stroke-width="0.8"/>
<line x1="366.6" y1="102.5" x2="366.6" y2="104" stroke="#9a9a9a" stroke-width="0.8"/>
<line x1="373.3" y1="101.5" x2="373.3" y2="104" stroke="#9a9a9a" stroke-width="0.8"/>
<line x1="379.9" y1="102.5" x2="379.9" y2="104" stroke="#9a9a9a" stroke-width="0.8"/>
<line x1="386.6" y1="102.5" x2="386.6" y2="104" stroke="#9a9a9a" stroke-width="0.8"/>
<line x1="393.2" y1="102.5" x2="393.2" y2="104" stroke="#9a9a9a" stroke-width="0.8"/>
<line x1="399.9" y1="100.0" x2="399.9" y2="104" stroke="#9a9a9a" stroke-width="0.8"/>
<text x="399.9" y="99.4" font-size="5.6" fill="#8c8c8c" text-anchor="middle" font-family="Liberation Sans">40</text>
<line x1="406.5" y1="102.5" x2="406.5" y2="104" stroke="#9a9a9a" stroke-width="0.8"/>
<line x1="413.2" y1="102.5" x2="413.2" y2="104" stroke="#9a9a9a" stroke-width="0.8"/>
<line x1="419.8" y1="102.5" x2="419.8" y2="104" stroke="#9a9a9a" stroke-width="0.8"/>
<line x1="426.4" y1="101.5" x2="426.4" y2="104" stroke="#9a9a9a" stroke-width="0.8"/>
<line x1="433.1" y1="102.5" x2="433.1" y2="104" stroke="#9a9a9a" stroke-width="0.8"/>
<line x1="439.7" y1="102.5" x2="439.7" y2="104" stroke="#9a9a9a" stroke-width="0.8"/>
<line x1="446.4" y1="102.5" x2="446.4" y2="104" stroke="#9a9a9a" stroke-width="0.8"/>
<line x1="453.0" y1="100.0" x2="453.0" y2="104" stroke="#9a9a9a" stroke-width="0.8"/>
<text x="453.0" y="99.4" font-size="5.6" fill="#8c8c8c" text-anchor="middle" font-family="Liberation Sans">20</text>
<line x1="459.7" y1="102.5" x2="459.7" y2="104" stroke="#9a9a9a" stroke-width="0.8"/>
<line x1="466.3" y1="102.5" x2="466.3" y2="104" stroke="#9a9a9a" stroke-width="0.8"/>
<line x1="473.0" y1="102.5" x2="473.0" y2="104" stroke="#9a9a9a" stroke-width="0.8"/>
<line x1="479.6" y1="101.5" x2="479.6" y2="104" stroke="#9a9a9a" stroke-width="0.8"/>
<line x1="486.3" y1="102.5" x2="486.3" y2="104" stroke="#9a9a9a" stroke-width="0.8"/>
<line x1="492.9" y1="102.5" x2="492.9" y2="104" stroke="#9a9a9a" stroke-width="0.8"/>
<line x1="499.6" y1="102.5" x2="499.6" y2="104" stroke="#9a9a9a" stroke-width="0.8"/>
<line x1="506.2" y1="100.0" x2="506.2" y2="104" stroke="#9a9a9a" stroke-width="0.8"/>
<text x="506.2" y="99.4" font-size="5.6" fill="#8c8c8c" text-anchor="middle" font-family="Liberation Sans">0</text>
<line x1="512.8" y1="102.5" x2="512.8" y2="104" stroke="#9a9a9a" stroke-width="0.8"/>
<line x1="519.5" y1="102.5" x2="519.5" y2="104" stroke="#9a9a9a" stroke-width="0.8"/>
<line x1="526.1" y1="102.5" x2="526.1" y2="104" stroke="#9a9a9a" stroke-width="0.8"/>
<line x1="532.8" y1="101.5" x2="532.8" y2="104" stroke="#9a9a9a" stroke-width="0.8"/>
<line x1="539.4" y1="102.5" x2="539.4" y2="104" stroke="#9a9a9a" stroke-width="0.8"/>
<line x1="546.1" y1="102.5" x2="546.1" y2="104" stroke="#9a9a9a" stroke-width="0.8"/>
<line x1="552.7" y1="102.5" x2="552.7" y2="104" stroke="#9a9a9a" stroke-width="0.8"/>
<line x1="559.4" y1="100.0" x2="559.4" y2="104" stroke="#9a9a9a" stroke-width="0.8"/>
<text x="559.4" y="99.4" font-size="5.6" fill="#8c8c8c" text-anchor="middle" font-family="Liberation Sans">20</text>
<line x1="566.0" y1="102.5" x2="566.0" y2="104" stroke="#9a9a9a" stroke-width="0.8"/>
<line x1="572.7" y1="102.5" x2="572.7" y2="104" stroke="#9a9a9a" stroke-width="0.8"/>
<line x1="579.3" y1="102.5" x2="579.3" y2="104" stroke="#9a9a9a" stroke-width="0.8"/>
<line x1="586.0" y1="101.5" x2="586.0" y2="104" stroke="#9a9a9a" stroke-width="0.8"/>
<line x1="592.6" y1="102.5" x2="592.6" y2="104" stroke="#9a9a9a" stroke-width="0.8"/>
<line x1="599.2" y1="102.5" x2="599.2" y2="104" stroke="#9a9a9a" stroke-width="0.8"/>
<line x1="605.9" y1="102.5" x2="605.9" y2="104" stroke="#9a9a9a" stroke-width="0.8"/>
<line x1="612.5" y1="100.0" x2="612.5" y2="104" stroke="#9a9a9a" stroke-width="0.8"/>
<text x="612.5" y="99.4" font-size="5.6" fill="#8c8c8c" text-anchor="middle" font-family="Liberation Sans">40</text>
<line x1="619.2" y1="102.5" x2="619.2" y2="104" stroke="#9a9a9a" stroke-width="0.8"/>
<line x1="625.8" y1="102.5" x2="625.8" y2="104" stroke="#9a9a9a" stroke-width="0.8"/>
<line x1="632.5" y1="102.5" x2="632.5" y2="104" stroke="#9a9a9a" stroke-width="0.8"/>
<line x1="639.1" y1="101.5" x2="639.1" y2="104" stroke="#9a9a9a" stroke-width="0.8"/>
<line x1="645.8" y1="102.5" x2="645.8" y2="104" stroke="#9a9a9a" stroke-width="0.8"/>
<line x1="652.4" y1="102.5" x2="652.4" y2="104" stroke="#9a9a9a" stroke-width="0.8"/>
<line x1="659.1" y1="102.5" x2="659.1" y2="104" stroke="#9a9a9a" stroke-width="0.8"/>
<line x1="665.7" y1="100.0" x2="665.7" y2="104" stroke="#9a9a9a" stroke-width="0.8"/>
<text x="665.7" y="99.4" font-size="5.6" fill="#8c8c8c" text-anchor="middle" font-family="Liberation Sans">60</text>
<line x1="672.4" y1="102.5" x2="672.4" y2="104" stroke="#9a9a9a" stroke-width="0.8"/>
<line x1="679.0" y1="102.5" x2="679.0" y2="104" stroke="#9a9a9a" stroke-width="0.8"/>
<line x1="685.6" y1="102.5" x2="685.6" y2="104" stroke="#9a9a9a" stroke-width="0.8"/>
<line x1="692.3" y1="101.5" x2="692.3" y2="104" stroke="#9a9a9a" stroke-width="0.8"/>
<line x1="698.9" y1="102.5" x2="698.9" y2="104" stroke="#9a9a9a" stroke-width="0.8"/>
<line x1="705.6" y1="102.5" x2="705.6" y2="104" stroke="#9a9a9a" stroke-width="0.8"/>
<line x1="712.2" y1="102.5" x2="712.2" y2="104" stroke="#9a9a9a" stroke-width="0.8"/>
<line x1="718.9" y1="100.0" x2="718.9" y2="104" stroke="#9a9a9a" stroke-width="0.8"/>
<text x="718.9" y="99.4" font-size="5.6" fill="#8c8c8c" text-anchor="middle" font-family="Liberation Sans">80</text>
<line x1="725.5" y1="102.5" x2="725.5" y2="104" stroke="#9a9a9a" stroke-width="0.8"/>
<line x1="732.2" y1="102.5" x2="732.2" y2="104" stroke="#9a9a9a" stroke-width="0.8"/>
<line x1="738.8" y1="102.5" x2="738.8" y2="104" stroke="#9a9a9a" stroke-width="0.8"/>
<line x1="745.5" y1="101.5" x2="745.5" y2="104" stroke="#9a9a9a" stroke-width="0.8"/>
<line x1="752.1" y1="102.5" x2="752.1" y2="104" stroke="#9a9a9a" stroke-width="0.8"/>
<line x1="758.8" y1="102.5" x2="758.8" y2="104" stroke="#9a9a9a" stroke-width="0.8"/>
<line x1="765.4" y1="102.5" x2="765.4" y2="104" stroke="#9a9a9a" stroke-width="0.8"/>
<line x1="772.0" y1="100.0" x2="772.0" y2="104" stroke="#9a9a9a" stroke-width="0.8"/>
<text x="772.0" y="99.4" font-size="5.6" fill="#8c8c8c" text-anchor="middle" font-family="Liberation Sans">100</text>
<line x1="778.7" y1="102.5" x2="778.7" y2="104" stroke="#9a9a9a" stroke-width="0.8"/>
<line x1="785.3" y1="102.5" x2="785.3" y2="104" stroke="#9a9a9a" stroke-width="0.8"/>
<line x1="792.0" y1="102.5" x2="792.0" y2="104" stroke="#9a9a9a" stroke-width="0.8"/>
<line x1="798.6" y1="101.5" x2="798.6" y2="104" stroke="#9a9a9a" stroke-width="0.8"/>
<line x1="805.3" y1="102.5" x2="805.3" y2="104" stroke="#9a9a9a" stroke-width="0.8"/>
<line x1="811.9" y1="102.5" x2="811.9" y2="104" stroke="#9a9a9a" stroke-width="0.8"/>
<line x1="818.6" y1="102.5" x2="818.6" y2="104" stroke="#9a9a9a" stroke-width="0.8"/>
<line x1="825.2" y1="100.0" x2="825.2" y2="104" stroke="#9a9a9a" stroke-width="0.8"/>
<text x="825.2" y="99.4" font-size="5.6" fill="#8c8c8c" text-anchor="middle" font-family="Liberation Sans">120</text>
<line x1="831.9" y1="102.5" x2="831.9" y2="104" stroke="#9a9a9a" stroke-width="0.8"/>
<line x1="838.5" y1="102.5" x2="838.5" y2="104" stroke="#9a9a9a" stroke-width="0.8"/>
<line x1="845.2" y1="102.5" x2="845.2" y2="104" stroke="#9a9a9a" stroke-width="0.8"/>
<line x1="851.8" y1="101.5" x2="851.8" y2="104" stroke="#9a9a9a" stroke-width="0.8"/>
<line x1="858.5" y1="102.5" x2="858.5" y2="104" stroke="#9a9a9a" stroke-width="0.8"/>
<line x1="865.1" y1="102.5" x2="865.1" y2="104" stroke="#9a9a9a" stroke-width="0.8"/>
<line x1="871.7" y1="102.5" x2="871.7" y2="104" stroke="#9a9a9a" stroke-width="0.8"/>
<line x1="878.4" y1="100.0" x2="878.4" y2="104" stroke="#9a9a9a" stroke-width="0.8"/>
<text x="878.4" y="99.4" font-size="5.6" fill="#8c8c8c" text-anchor="middle" font-family="Liberation Sans">140</text>
<line x1="885.0" y1="102.5" x2="885.0" y2="104" stroke="#9a9a9a" stroke-width="0.8"/>
<line x1="891.7" y1="102.5" x2="891.7" y2="104" stroke="#9a9a9a" stroke-width="0.8"/>
<line x1="898.3" y1="102.5" x2="898.3" y2="104" stroke="#9a9a9a" stroke-width="0.8"/>
<line x1="905.0" y1="101.5" x2="905.0" y2="104" stroke="#9a9a9a" stroke-width="0.8"/>
<line x1="911.6" y1="102.5" x2="911.6" y2="104" stroke="#9a9a9a" stroke-width="0.8"/>
<line x1="918.3" y1="102.5" x2="918.3" y2="104" stroke="#9a9a9a" stroke-width="0.8"/>
<line x1="924.9" y1="102.5" x2="924.9" y2="104" stroke="#9a9a9a" stroke-width="0.8"/>
<line x1="931.6" y1="100.0" x2="931.6" y2="104" stroke="#9a9a9a" stroke-width="0.8"/>
<text x="931.6" y="99.4" font-size="5.6" fill="#8c8c8c" text-anchor="middle" font-family="Liberation Sans">160</text>
<line x1="938.2" y1="102.5" x2="938.2" y2="104" stroke="#9a9a9a" stroke-width="0.8"/>
<line x1="944.9" y1="102.5" x2="944.9" y2="104" stroke="#9a9a9a" stroke-width="0.8"/>
<line x1="951.5" y1="102.5" x2="951.5" y2="104" stroke="#9a9a9a" stroke-width="0.8"/>
<line x1="958.1" y1="101.5" x2="958.1" y2="104" stroke="#9a9a9a" stroke-width="0.8"/>
<line x1="964.8" y1="102.5" x2="964.8" y2="104" stroke="#9a9a9a" stroke-width="0.8"/>
<line x1="971.4" y1="102.5" x2="971.4" y2="104" stroke="#9a9a9a" stroke-width="0.8"/>
<line x1="978.1" y1="102.5" x2="978.1" y2="104" stroke="#9a9a9a" stroke-width="0.8"/>
<line x1="984.7" y1="100.0" x2="984.7" y2="104" stroke="#9a9a9a" stroke-width="0.8"/>
<text x="984.7" y="99.4" font-size="5.6" fill="#8c8c8c" text-anchor="middle" font-family="Liberation Sans">180</text>
<line x1="991.4" y1="102.5" x2="991.4" y2="104" stroke="#9a9a9a" stroke-width="0.8"/>
<line x1="998.0" y1="102.5" x2="998.0" y2="104" stroke="#9a9a9a" stroke-width="0.8"/>
<line x1="1004.7" y1="102.5" x2="1004.7" y2="104" stroke="#9a9a9a" stroke-width="0.8"/>
<line x1="1011.3" y1="101.5" x2="1011.3" y2="104" stroke="#9a9a9a" stroke-width="0.8"/>
<line x1="1018.0" y1="102.5" x2="1018.0" y2="104" stroke="#9a9a9a" stroke-width="0.8"/>
<line x1="1024.6" y1="102.5" x2="1024.6" y2="104" stroke="#9a9a9a" stroke-width="0.8"/>
<line x1="1031.3" y1="102.5" x2="1031.3" y2="104" stroke="#9a9a9a" stroke-width="0.8"/>
<line x1="1037.9" y1="100.0" x2="1037.9" y2="104" stroke="#9a9a9a" stroke-width="0.8"/>
<text x="1037.9" y="99.4" font-size="5.6" fill="#8c8c8c" text-anchor="middle" font-family="Liberation Sans">200</text>
<line x1="1044.5" y1="102.5" x2="1044.5" y2="104" stroke="#9a9a9a" stroke-width="0.8"/>
<line x1="1051.2" y1="102.5" x2="1051.2" y2="104" stroke="#9a9a9a" stroke-width="0.8"/>
<line x1="1057.8" y1="102.5" x2="1057.8" y2="104" stroke="#9a9a9a" stroke-width="0.8"/>
<line x1="1064.5" y1="101.5" x2="1064.5" y2="104" stroke="#9a9a9a" stroke-width="0.8"/>
<line x1="1071.1" y1="102.5" x2="1071.1" y2="104" stroke="#9a9a9a" stroke-width="0.8"/>
<line x1="1077.8" y1="102.5" x2="1077.8" y2="104" stroke="#9a9a9a" stroke-width="0.8"/>
<line x1="1084.4" y1="102.5" x2="1084.4" y2="104" stroke="#9a9a9a" stroke-width="0.8"/>
<line x1="1091.1" y1="100.0" x2="1091.1" y2="104" stroke="#9a9a9a" stroke-width="0.8"/>
<text x="1091.1" y="99.4" font-size="5.6" fill="#8c8c8c" text-anchor="middle" font-family="Liberation Sans">220</text>
<line x1="1097.7" y1="102.5" x2="1097.7" y2="104" stroke="#9a9a9a" stroke-width="0.8"/>
<line x1="1104.4" y1="102.5" x2="1104.4" y2="104" stroke="#9a9a9a" stroke-width="0.8"/>
<line x1="1111.0" y1="102.5" x2="1111.0" y2="104" stroke="#9a9a9a" stroke-width="0.8"/>
<line x1="1117.7" y1="101.5" x2="1117.7" y2="104" stroke="#9a9a9a" stroke-width="0.8"/>
<line x1="1124.3" y1="102.5" x2="1124.3" y2="104" stroke="#9a9a9a" stroke-width="0.8"/>
<line x1="1130.9" y1="102.5" x2="1130.9" y2="104" stroke="#9a9a9a" stroke-width="0.8"/>
<line x1="1137.6" y1="102.5" x2="1137.6" y2="104" stroke="#9a9a9a" stroke-width="0.8"/>
<line x1="1144.2" y1="100.0" x2="1144.2" y2="104" stroke="#9a9a9a" stroke-width="0.8"/>
<text x="1144.2" y="99.4" font-size="5.6" fill="#8c8c8c" text-anchor="middle" font-family="Liberation Sans">240</text>
<line x1="1150.9" y1="102.5" x2="1150.9" y2="104" stroke="#9a9a9a" stroke-width="0.8"/>
<line x1="1157.5" y1="102.5" x2="1157.5" y2="104" stroke="#9a9a9a" stroke-width="0.8"/>
<line x1="1164.2" y1="102.5" x2="1164.2" y2="104" stroke="#9a9a9a" stroke-width="0.8"/>
<line x1="1170.8" y1="101.5" x2="1170.8" y2="104" stroke="#9a9a9a" stroke-width="0.8"/>
<line x1="1177.5" y1="102.5" x2="1177.5" y2="104" stroke="#9a9a9a" stroke-width="0.8"/>
<line x1="1184.1" y1="102.5" x2="1184.1" y2="104" stroke="#9a9a9a" stroke-width="0.8"/>
<line x1="1190.8" y1="102.5" x2="1190.8" y2="104" stroke="#9a9a9a" stroke-width="0.8"/>
<line x1="1197.4" y1="100.0" x2="1197.4" y2="104" stroke="#9a9a9a" stroke-width="0.8"/>
<text x="1197.4" y="99.4" font-size="5.6" fill="#8c8c8c" text-anchor="middle" font-family="Liberation Sans">260</text>
<line x1="1204.1" y1="102.5" x2="1204.1" y2="104" stroke="#9a9a9a" stroke-width="0.8"/>
<line x1="1210.7" y1="102.5" x2="1210.7" y2="104" stroke="#9a9a9a" stroke-width="0.8"/>
<line x1="1217.3" y1="102.5" x2="1217.3" y2="104" stroke="#9a9a9a" stroke-width="0.8"/>
<line x1="1224.0" y1="101.5" x2="1224.0" y2="104" stroke="#9a9a9a" stroke-width="0.8"/>
<line x1="1230.6" y1="102.5" x2="1230.6" y2="104" stroke="#9a9a9a" stroke-width="0.8"/>
<line x1="1237.3" y1="102.5" x2="1237.3" y2="104" stroke="#9a9a9a" stroke-width="0.8"/>
<line x1="1243.9" y1="102.5" x2="1243.9" y2="104" stroke="#9a9a9a" stroke-width="0.8"/>
<line x1="1250.6" y1="100.0" x2="1250.6" y2="104" stroke="#9a9a9a" stroke-width="0.8"/>
<text x="1250.6" y="99.4" font-size="5.6" fill="#8c8c8c" text-anchor="middle" font-family="Liberation Sans">280</text>
<line x1="1257.2" y1="102.5" x2="1257.2" y2="104" stroke="#9a9a9a" stroke-width="0.8"/>
<line x1="1263.9" y1="102.5" x2="1263.9" y2="104" stroke="#9a9a9a" stroke-width="0.8"/>
<line x1="1270.5" y1="102.5" x2="1270.5" y2="104" stroke="#9a9a9a" stroke-width="0.8"/>
<line x1="1277.2" y1="101.5" x2="1277.2" y2="104" stroke="#9a9a9a" stroke-width="0.8"/>
<line x1="1283.8" y1="102.5" x2="1283.8" y2="104" stroke="#9a9a9a" stroke-width="0.8"/>
<line x1="1290.5" y1="102.5" x2="1290.5" y2="104" stroke="#9a9a9a" stroke-width="0.8"/>
<line x1="1297.1" y1="102.5" x2="1297.1" y2="104" stroke="#9a9a9a" stroke-width="0.8"/>
<line x1="1303.8" y1="100.0" x2="1303.8" y2="104" stroke="#9a9a9a" stroke-width="0.8"/>
<text x="1303.8" y="99.4" font-size="5.6" fill="#8c8c8c" text-anchor="middle" font-family="Liberation Sans">300</text>
<line x1="1310.4" y1="102.5" x2="1310.4" y2="104" stroke="#9a9a9a" stroke-width="0.8"/>
<line x1="1317.0" y1="102.5" x2="1317.0" y2="104" stroke="#9a9a9a" stroke-width="0.8"/>
<line x1="1323.7" y1="102.5" x2="1323.7" y2="104" stroke="#9a9a9a" stroke-width="0.8"/>
<line x1="1330.3" y1="101.5" x2="1330.3" y2="104" stroke="#9a9a9a" stroke-width="0.8"/>
<line x1="1337.0" y1="102.5" x2="1337.0" y2="104" stroke="#9a9a9a" stroke-width="0.8"/>
<line x1="1343.6" y1="102.5" x2="1343.6" y2="104" stroke="#9a9a9a" stroke-width="0.8"/>
<line x1="1350.3" y1="102.5" x2="1350.3" y2="104" stroke="#9a9a9a" stroke-width="0.8"/>
<line x1="1356.9" y1="100.0" x2="1356.9" y2="104" stroke="#9a9a9a" stroke-width="0.8"/>
<line x1="1363.6" y1="102.5" x2="1363.6" y2="104" stroke="#9a9a9a" stroke-width="0.8"/>
<line x1="1370.2" y1="102.5" x2="1370.2" y2="104" stroke="#9a9a9a" stroke-width="0.8"/>
<line x1="1376.9" y1="102.5" x2="1376.9" y2="104" stroke="#9a9a9a" stroke-width="0.8"/>
<line x1="1383.5" y1="101.5" x2="1383.5" y2="104" stroke="#9a9a9a" stroke-width="0.8"/>
<text x="1388" y="99.4" font-size="5.6" fill="#8c8c8c" text-anchor="end" font-family="Liberation Sans">millimeters</text>
<line x1="28.8" y1="127.6" x2="30.3" y2="127.6" stroke="#9a9a9a" stroke-width="0.8"/>
<line x1="28.8" y1="134.3" x2="30.3" y2="134.3" stroke="#9a9a9a" stroke-width="0.8"/>
<line x1="26.3" y1="140.9" x2="30.3" y2="140.9" stroke="#9a9a9a" stroke-width="0.8"/>
<text x="0" y="0" transform="translate(26.3 140.9) rotate(-90)" font-size="5.6" fill="#8c8c8c" text-anchor="middle" font-family="Liberation Sans">260</text>
<line x1="28.8" y1="147.5" x2="30.3" y2="147.5" stroke="#9a9a9a" stroke-width="0.8"/>
<line x1="28.8" y1="154.2" x2="30.3" y2="154.2" stroke="#9a9a9a" stroke-width="0.8"/>
<line x1="28.8" y1="160.8" x2="30.3" y2="160.8" stroke="#9a9a9a" stroke-width="0.8"/>
<line x1="27.8" y1="167.5" x2="30.3" y2="167.5" stroke="#9a9a9a" stroke-width="0.8"/>
<line x1="28.8" y1="174.1" x2="30.3" y2="174.1" stroke="#9a9a9a" stroke-width="0.8"/>
<line x1="28.8" y1="180.8" x2="30.3" y2="180.8" stroke="#9a9a9a" stroke-width="0.8"/>
<line x1="28.8" y1="187.4" x2="30.3" y2="187.4" stroke="#9a9a9a" stroke-width="0.8"/>
<line x1="26.3" y1="194.1" x2="30.3" y2="194.1" stroke="#9a9a9a" stroke-width="0.8"/>
<text x="0" y="0" transform="translate(26.3 194.1) rotate(-90)" font-size="5.6" fill="#8c8c8c" text-anchor="middle" font-family="Liberation Sans">280</text>
<line x1="28.8" y1="200.7" x2="30.3" y2="200.7" stroke="#9a9a9a" stroke-width="0.8"/>
<line x1="28.8" y1="207.4" x2="30.3" y2="207.4" stroke="#9a9a9a" stroke-width="0.8"/>
<line x1="28.8" y1="214.0" x2="30.3" y2="214.0" stroke="#9a9a9a" stroke-width="0.8"/>
<line x1="27.8" y1="220.7" x2="30.3" y2="220.7" stroke="#9a9a9a" stroke-width="0.8"/>
<line x1="28.8" y1="227.3" x2="30.3" y2="227.3" stroke="#9a9a9a" stroke-width="0.8"/>
<line x1="28.8" y1="233.9" x2="30.3" y2="233.9" stroke="#9a9a9a" stroke-width="0.8"/>
<line x1="28.8" y1="240.6" x2="30.3" y2="240.6" stroke="#9a9a9a" stroke-width="0.8"/>
<line x1="26.3" y1="247.2" x2="30.3" y2="247.2" stroke="#9a9a9a" stroke-width="0.8"/>
<text x="0" y="0" transform="translate(26.3 247.2) rotate(-90)" font-size="5.6" fill="#8c8c8c" text-anchor="middle" font-family="Liberation Sans">300</text>
<line x1="28.8" y1="253.9" x2="30.3" y2="253.9" stroke="#9a9a9a" stroke-width="0.8"/>
<line x1="28.8" y1="260.5" x2="30.3" y2="260.5" stroke="#9a9a9a" stroke-width="0.8"/>
<line x1="28.8" y1="267.2" x2="30.3" y2="267.2" stroke="#9a9a9a" stroke-width="0.8"/>
<line x1="27.8" y1="273.8" x2="30.3" y2="273.8" stroke="#9a9a9a" stroke-width="0.8"/>
<line x1="28.8" y1="280.5" x2="30.3" y2="280.5" stroke="#9a9a9a" stroke-width="0.8"/>
<line x1="28.8" y1="287.1" x2="30.3" y2="287.1" stroke="#9a9a9a" stroke-width="0.8"/>
<line x1="28.8" y1="293.8" x2="30.3" y2="293.8" stroke="#9a9a9a" stroke-width="0.8"/>
<line x1="26.3" y1="300.4" x2="30.3" y2="300.4" stroke="#9a9a9a" stroke-width="0.8"/>
<text x="0" y="0" transform="translate(26.3 300.4) rotate(-90)" font-size="5.6" fill="#8c8c8c" text-anchor="middle" font-family="Liberation Sans">320</text>
<line x1="28.8" y1="307.1" x2="30.3" y2="307.1" stroke="#9a9a9a" stroke-width="0.8"/>
<line x1="28.8" y1="313.7" x2="30.3" y2="313.7" stroke="#9a9a9a" stroke-width="0.8"/>
<line x1="28.8" y1="320.3" x2="30.3" y2="320.3" stroke="#9a9a9a" stroke-width="0.8"/>
<line x1="27.8" y1="327.0" x2="30.3" y2="327.0" stroke="#9a9a9a" stroke-width="0.8"/>
<line x1="28.8" y1="333.6" x2="30.3" y2="333.6" stroke="#9a9a9a" stroke-width="0.8"/>
<line x1="28.8" y1="340.3" x2="30.3" y2="340.3" stroke="#9a9a9a" stroke-width="0.8"/>
<line x1="28.8" y1="346.9" x2="30.3" y2="346.9" stroke="#9a9a9a" stroke-width="0.8"/>
<line x1="26.3" y1="353.6" x2="30.3" y2="353.6" stroke="#9a9a9a" stroke-width="0.8"/>
<text x="0" y="0" transform="translate(26.3 353.6) rotate(-90)" font-size="5.6" fill="#8c8c8c" text-anchor="middle" font-family="Liberation Sans">340</text>
<line x1="28.8" y1="360.2" x2="30.3" y2="360.2" stroke="#9a9a9a" stroke-width="0.8"/>
<line x1="28.8" y1="366.9" x2="30.3" y2="366.9" stroke="#9a9a9a" stroke-width="0.8"/>
<line x1="28.8" y1="373.5" x2="30.3" y2="373.5" stroke="#9a9a9a" stroke-width="0.8"/>
<line x1="27.8" y1="380.2" x2="30.3" y2="380.2" stroke="#9a9a9a" stroke-width="0.8"/>
<line x1="28.8" y1="386.8" x2="30.3" y2="386.8" stroke="#9a9a9a" stroke-width="0.8"/>
<line x1="28.8" y1="393.5" x2="30.3" y2="393.5" stroke="#9a9a9a" stroke-width="0.8"/>
<line x1="28.8" y1="400.1" x2="30.3" y2="400.1" stroke="#9a9a9a" stroke-width="0.8"/>
<line x1="26.3" y1="406.8" x2="30.3" y2="406.8" stroke="#9a9a9a" stroke-width="0.8"/>
<text x="0" y="0" transform="translate(26.3 406.8) rotate(-90)" font-size="5.6" fill="#8c8c8c" text-anchor="middle" font-family="Liberation Sans">360</text>
<line x1="28.8" y1="413.4" x2="30.3" y2="413.4" stroke="#9a9a9a" stroke-width="0.8"/>
<line x1="28.8" y1="420.0" x2="30.3" y2="420.0" stroke="#9a9a9a" stroke-width="0.8"/>
<line x1="28.8" y1="426.7" x2="30.3" y2="426.7" stroke="#9a9a9a" stroke-width="0.8"/>
<line x1="27.8" y1="433.3" x2="30.3" y2="433.3" stroke="#9a9a9a" stroke-width="0.8"/>
<line x1="28.8" y1="440.0" x2="30.3" y2="440.0" stroke="#9a9a9a" stroke-width="0.8"/>
<line x1="28.8" y1="446.6" x2="30.3" y2="446.6" stroke="#9a9a9a" stroke-width="0.8"/>
<line x1="28.8" y1="453.3" x2="30.3" y2="453.3" stroke="#9a9a9a" stroke-width="0.8"/>
<line x1="26.3" y1="459.9" x2="30.3" y2="459.9" stroke="#9a9a9a" stroke-width="0.8"/>
<text x="0" y="0" transform="translate(26.3 459.9) rotate(-90)" font-size="5.6" fill="#8c8c8c" text-anchor="middle" font-family="Liberation Sans">380</text>
<line x1="28.8" y1="466.6" x2="30.3" y2="466.6" stroke="#9a9a9a" stroke-width="0.8"/>
<line x1="28.8" y1="473.2" x2="30.3" y2="473.2" stroke="#9a9a9a" stroke-width="0.8"/>
<line x1="28.8" y1="479.9" x2="30.3" y2="479.9" stroke="#9a9a9a" stroke-width="0.8"/>
<line x1="27.8" y1="486.5" x2="30.3" y2="486.5" stroke="#9a9a9a" stroke-width="0.8"/>
<line x1="28.8" y1="493.2" x2="30.3" y2="493.2" stroke="#9a9a9a" stroke-width="0.8"/>
<line x1="28.8" y1="499.8" x2="30.3" y2="499.8" stroke="#9a9a9a" stroke-width="0.8"/>
<line x1="28.8" y1="506.4" x2="30.3" y2="506.4" stroke="#9a9a9a" stroke-width="0.8"/>
<line x1="26.3" y1="513.1" x2="30.3" y2="513.1" stroke="#9a9a9a" stroke-width="0.8"/>
<text x="0" y="0" transform="translate(26.3 513.1) rotate(-90)" font-size="5.6" fill="#8c8c8c" text-anchor="middle" font-family="Liberation Sans">400</text>
<line x1="28.8" y1="519.7" x2="30.3" y2="519.7" stroke="#9a9a9a" stroke-width="0.8"/>
<line x1="28.8" y1="526.4" x2="30.3" y2="526.4" stroke="#9a9a9a" stroke-width="0.8"/>
<line x1="28.8" y1="533.0" x2="30.3" y2="533.0" stroke="#9a9a9a" stroke-width="0.8"/>
<line x1="27.8" y1="539.7" x2="30.3" y2="539.7" stroke="#9a9a9a" stroke-width="0.8"/>
<line x1="28.8" y1="546.3" x2="30.3" y2="546.3" stroke="#9a9a9a" stroke-width="0.8"/>
<line x1="28.8" y1="553.0" x2="30.3" y2="553.0" stroke="#9a9a9a" stroke-width="0.8"/>
<line x1="28.8" y1="559.6" x2="30.3" y2="559.6" stroke="#9a9a9a" stroke-width="0.8"/>
<line x1="26.3" y1="566.3" x2="30.3" y2="566.3" stroke="#9a9a9a" stroke-width="0.8"/>
<text x="0" y="0" transform="translate(26.3 566.3) rotate(-90)" font-size="5.6" fill="#8c8c8c" text-anchor="middle" font-family="Liberation Sans">420</text>
<line x1="28.8" y1="572.9" x2="30.3" y2="572.9" stroke="#9a9a9a" stroke-width="0.8"/>
<line x1="28.8" y1="579.6" x2="30.3" y2="579.6" stroke="#9a9a9a" stroke-width="0.8"/>
<line x1="28.8" y1="586.2" x2="30.3" y2="586.2" stroke="#9a9a9a" stroke-width="0.8"/>
<line x1="27.8" y1="592.8" x2="30.3" y2="592.8" stroke="#9a9a9a" stroke-width="0.8"/>
<line x1="28.8" y1="599.5" x2="30.3" y2="599.5" stroke="#9a9a9a" stroke-width="0.8"/>
<line x1="28.8" y1="606.1" x2="30.3" y2="606.1" stroke="#9a9a9a" stroke-width="0.8"/>
<line x1="28.8" y1="612.8" x2="30.3" y2="612.8" stroke="#9a9a9a" stroke-width="0.8"/>
<line x1="26.3" y1="619.4" x2="30.3" y2="619.4" stroke="#9a9a9a" stroke-width="0.8"/>
<text x="0" y="0" transform="translate(26.3 619.4) rotate(-90)" font-size="5.6" fill="#8c8c8c" text-anchor="middle" font-family="Liberation Sans">440</text>
<line x1="28.8" y1="626.1" x2="30.3" y2="626.1" stroke="#9a9a9a" stroke-width="0.8"/>
<line x1="28.8" y1="632.7" x2="30.3" y2="632.7" stroke="#9a9a9a" stroke-width="0.8"/>
<line x1="28.8" y1="639.4" x2="30.3" y2="639.4" stroke="#9a9a9a" stroke-width="0.8"/>
<line x1="27.8" y1="646.0" x2="30.3" y2="646.0" stroke="#9a9a9a" stroke-width="0.8"/>
<line x1="28.8" y1="652.7" x2="30.3" y2="652.7" stroke="#9a9a9a" stroke-width="0.8"/>
<line x1="28.8" y1="659.3" x2="30.3" y2="659.3" stroke="#9a9a9a" stroke-width="0.8"/>
<line x1="28.8" y1="666.0" x2="30.3" y2="666.0" stroke="#9a9a9a" stroke-width="0.8"/>
<line x1="26.3" y1="672.6" x2="30.3" y2="672.6" stroke="#9a9a9a" stroke-width="0.8"/>
<text x="0" y="0" transform="translate(26.3 672.6) rotate(-90)" font-size="5.6" fill="#8c8c8c" text-anchor="middle" font-family="Liberation Sans">460</text>
<line x1="28.8" y1="679.2" x2="30.3" y2="679.2" stroke="#9a9a9a" stroke-width="0.8"/>
<line x1="28.8" y1="685.9" x2="30.3" y2="685.9" stroke="#9a9a9a" stroke-width="0.8"/>
<line x1="28.8" y1="692.5" x2="30.3" y2="692.5" stroke="#9a9a9a" stroke-width="0.8"/>
<line x1="27.8" y1="699.2" x2="30.3" y2="699.2" stroke="#9a9a9a" stroke-width="0.8"/>
<line x1="28.8" y1="705.8" x2="30.3" y2="705.8" stroke="#9a9a9a" stroke-width="0.8"/>
<line x1="28.8" y1="712.5" x2="30.3" y2="712.5" stroke="#9a9a9a" stroke-width="0.8"/>
<line x1="28.8" y1="719.1" x2="30.3" y2="719.1" stroke="#9a9a9a" stroke-width="0.8"/>
<line x1="26.3" y1="725.8" x2="30.3" y2="725.8" stroke="#9a9a9a" stroke-width="0.8"/>
<text x="0" y="0" transform="translate(26.3 725.8) rotate(-90)" font-size="5.6" fill="#8c8c8c" text-anchor="middle" font-family="Liberation Sans">480</text>
<line x1="28.8" y1="732.4" x2="30.3" y2="732.4" stroke="#9a9a9a" stroke-width="0.8"/>
<line x1="28.8" y1="739.1" x2="30.3" y2="739.1" stroke="#9a9a9a" stroke-width="0.8"/>
<line x1="28.8" y1="745.7" x2="30.3" y2="745.7" stroke="#9a9a9a" stroke-width="0.8"/>
<path d="M20 658.5 H30" stroke="#222" stroke-width="0.9" stroke-dasharray="1.5 1"/>
<path d="M767 94.5 V104" stroke="#222" stroke-width="0.9" stroke-dasharray="1.5 1"/>
</svg>
<div class="a" style="left:30.5px;top:104.2px;width:1358.5px;height:654px;background:#fff"></div>
<div class="a" style="left:1378px;top:104.2px;width:11px;height:11px;background:#f0f0f0"></div>
<svg style="left:1380.5px;top:107.5px" width="6" height="4"><path d="M0.5 3.5 L3 1 L5.5 3.5" fill="none" stroke="#333" stroke-width="1.1"/></svg>
<div class="a" style="left:1378.5px;top:701px;width:10px;height:34px;background:#cdcdcd"></div>
<div class="a" style="left:1378px;top:735.5px;width:11px;height:11px;background:#f0f0f0"></div>
<svg style="left:1380.5px;top:739px" width="6" height="4"><path d="M0.5 0.5 L3 3 L5.5 0.5" fill="none" stroke="#333" stroke-width="1.1"/></svg>
<div class="a" style="left:30.5px;top:747.2px;width:680.5px;height:11px;background:#f2f2f2;border-top:1px solid #c8c8c8;border-right:1px solid #c8c8c8"></div>
<svg style="left:31px;top:748px" width="130" height="10"><rect x="1.5" y="1.5" width="6" height="7" fill="none" stroke="#777" stroke-width="0.8"/><path d="M3 5 H6 M4.5 3.5 V6.5" stroke="#777" stroke-width="0.7"/><path d="M12.8 1.3 V8.7" stroke="#aaa" stroke-width="0.9"/><path d="M19 1.3 L14 5 L19 8.7Z" fill="#aaa"/><path d="M28.8 1.3 L23.6 5 L28.8 8.7Z" fill="#aaa"/><path d="M62 1.3 L67.3 5 L62 8.7Z" fill="#aaa"/><path d="M72 1.3 L77 5 L72 8.7Z" fill="#aaa"/><path d="M78.3 1.3 V8.7" stroke="#aaa" stroke-width="0.9"/><rect x="82" y="1.5" width="6" height="7" fill="none" stroke="#777" stroke-width="0.8"/><path d="M83.5 5 H86.5 M85 3.5 V6.5" stroke="#777" stroke-width="0.7"/></svg>
<div class="t" style="left:66px;top:749.3px;font-size:7px;color:#b0b0b0">1 &nbsp;of &nbsp;1</div>
<svg style="left:128px;top:746.5px" width="40" height="12"><path d="M0.5 0.8 L3.3 11.5 H34.5 L37.3 0.8" fill="#fff" stroke="#9a9a9a" stroke-width="0.8"/></svg>
<div class="t" style="left:134.8px;top:749.3px;font-size:7.4px;color:#222">Page 1</div>
<div class="a" style="left:711px;top:747.2px;width:11px;height:11px;background:#efefef"></div>
<svg style="left:714px;top:749.5px" width="5" height="6"><path d="M4 0.5 L1.2 3 L4 5.5" fill="none" stroke="#333" stroke-width="1.1"/></svg>
<div class="a" style="left:1298px;top:747.6px;width:26px;height:10.5px;background:#cdcdcd"></div>
<div class="a" style="left:1366px;top:747.6px;width:11px;height:10.5px;background:#efefef"></div>
<svg style="left:1369.5px;top:750px" width="5" height="6"><path d="M1 0.5 L3.8 3 L1 5.5" fill="none" stroke="#333" stroke-width="1.1"/></svg>
<svg style="left:1378.5px;top:747.5px" width="10" height="10"><circle cx="4.2" cy="4.2" r="3" fill="none" stroke="#444" stroke-width="0.8"/><path d="M2.5 4.2 H6 M4.2 2.5 V6 M6.5 6.5 L9 9" stroke="#444" stroke-width="0.8"/></svg>
<div class="a" style="left:1389px;top:78px;width:51px;height:680px;background:#f2f2f2"></div>
<div class="a" style="left:1389.5px;top:78px;width:1.5px;height:680px;background:#fff"></div>
<div class="a" style="left:1391.5px;top:78px;width:14px;height:680px;background:#ebebeb"></div>
<div class="a" style="left:1391.5px;top:78px;width:14px;height:16px;background:#e6e6e6"></div>
<svg style="left:1395px;top:83px" width="7" height="7"><path d="M0.5 0.5 L6.5 6.5 M6.5 0.5 L0.5 6.5" stroke="#999" stroke-width="0.9"/></svg>
<div class="a" style="left:1391.5px;top:94px;width:14px;height:45.8px;background:#b8b8b8"></div>
<div class="a" style="left:1391.5px;top:140.5px;width:14px;height:199px;background:#d7d7d7"></div>
<div class="a" style="left:1391.5px;top:139.8px;width:14px;height:0.8px;background:#f2f2f2"></div>
<svg style="left:1393px;top:96px" width="12" height="12"><text x="0.5" y="6" font-size="6" font-family="Liberation Sans" fill="#2b2b2b">A</text><circle cx="8.5" cy="8" r="1.9" fill="none" stroke="#2b2b2b" stroke-width="1.2"/></svg>
<div class="t" style="left:1393px;top:111.5px;width:12px;height:15px;"><div style="position:absolute;left:1.8px;top:0;writing-mode:vertical-rl;font-size:7.4px;color:#222;line-height:1">Text</div></div>
<svg style="left:1394px;top:144.5px" width="9" height="9"><rect x="0" y="0" width="9" height="1.5" fill="#2b2b2b"/><path d="M2 3 h2v1.5h-2z M5 3 h2v1.5h-2z M2 5.5 h2v1.5h-2z M5 5.5 h2v1.5h-2z M8 3 h1v1.5h-1z M8 5.5 h1v1.5h-1z" fill="#2b2b2b"/></svg>
<div class="t" style="left:1393px;top:158.5px;width:12px;height:40px;"><div style="position:absolute;left:1.8px;top:0;writing-mode:vertical-rl;font-size:7.4px;color:#222;line-height:1">Object Data</div></div>
<svg style="left:1393.5px;top:215.5px" width="10" height="9"><path d="M1 3 L3.5 0.5 L6 3 L3.5 5.5Z" fill="none" stroke="#2b2b2b" stroke-width="1"/><circle cx="3.5" cy="3" r="1" fill="#e8731b"/><path d="M5 5 H9.5 M5 7 H9.5 M4 8.5 H9.5" stroke="#2b2b2b" stroke-width="0.8"/></svg>
<div class="t" style="left:1393px;top:230px;width:12px;height:36px;"><div style="position:absolute;left:1.8px;top:0;writing-mode:vertical-rl;font-size:7.4px;color:#222;line-height:1">Properties</div></div>
<svg style="left:1394px;top:283px" width="9" height="9"><path d="M4.5 0.5 L8.5 3 L4.5 5.5 L0.5 3Z" fill="none" stroke="#2b2b2b" stroke-width="0.9"/><path d="M0.5 5 L4.5 7.5 L8.5 5" fill="none" stroke="#2b2b2b" stroke-width="1.2"/></svg>
<div class="t" style="left:1393px;top:296.5px;width:12px;height:31px;"><div style="position:absolute;left:1.8px;top:0;writing-mode:vertical-rl;font-size:7.4px;color:#222;line-height:1">Objects</div></div>
<svg style="left:1394px;top:342.5px" width="9" height="9"><path d="M4.5 0.5 V8.5 M0.5 4.5 H8.5" stroke="#b0b0b0" stroke-width="0.9"/></svg>
<div class="a" style="left:1406px;top:78px;width:21px;height:680px;background:#f2f2f2"></div>
<svg style="left:1409px;top:84px" width="16" height="14"><text x="0" y="12" font-size="14" font-family="Liberation Sans" fill="#2b2b2b">A</text><path d="M10.8 1.5 V12.5" stroke="#2b2b2b" stroke-width="1"/><path d="M9 0.8 H13" stroke="#1aa0e8" stroke-width="1" stroke-dasharray="1 0.6"/><path d="M14.5 11.5 V13.5 H12.5Z" fill="#777"/></svg>
<div class="a" style="left:1408px;top:102.5px;width:16px;height:1px;background:#dcdcdc"></div>
<div class="t" style="left:1410px;top:107px;font-size:13.5px;color:#2b2b2b">B</div>
<svg style="left:1409px;top:125.5px" width="14" height="13"><path d="M6.5 0.8 H12 M2 12.2 H7.5 M9.2 0.8 L4.8 12.2" stroke="#2b2b2b" stroke-width="1"/></svg>
<svg style="left:1410px;top:144.5px" width="12" height="13"><path d="M1.5 0.5 V6.5 C1.5 10.5 9.5 10.5 9.5 6.5 V0.5" fill="none" stroke="#2b2b2b" stroke-width="1.2"/><path d="M0.5 12 H10.5" stroke="#888" stroke-width="1"/></svg>
<div class="a" style="left:1408px;top:162.5px;width:16px;height:1px;background:#dcdcdc"></div>
<svg style="left:1409px;top:168px" width="15" height="13"><path d="M0 2.5 H7 M0 5 H11 M0 7.5 H11 M0 10 H11" stroke="#777" stroke-width="1.3"/><path d="M8.5 0.3 L12.5 4.3 M12.5 0.3 L8.5 4.3" stroke="#e02020" stroke-width="1.1"/><path d="M13.5 10.5 V12.5 H11.5Z" fill="#666"/></svg>
<div class="a" style="left:1408px;top:185.3px;width:16px;height:1px;background:#dcdcdc"></div>
<svg style="left:1409px;top:191px" width="14" height="12"><rect x="0.5" y="1.5" width="4" height="6" fill="none" stroke="#c2c2c2" stroke-width="0.8"/><path d="M7 1.5 H12 M7 3.5 H12" stroke="#c2c2c2" stroke-width="0.8"/><text x="6" y="11.5" font-size="7" font-family="Liberation Sans" fill="#c2c2c2">A</text></svg>
<div class="a" style="left:1408px;top:208.5px;width:16px;height:1px;background:#dcdcdc"></div>
<svg style="left:1409px;top:214.5px" width="14" height="11"><rect x="0" y="0.3" width="2" height="2" fill="#1aa0e8"/><rect x="0" y="4.3" width="2" height="2" fill="#1aa0e8"/><rect x="0" y="8.3" width="2" height="2" fill="#1aa0e8"/><path d="M3.5 1.3 H12.5 M3.5 5.3 H12.5 M3.5 9.3 H12.5" stroke="#444" stroke-width="0.9"/></svg>
<svg style="left:1409px;top:232px" width="14" height="12"><path d="M5.5 1 H12.5 M5.5 3.5 H12.5 M5.5 6 H12.5 M0 8.5 H12.5 M0 11 H12.5" stroke="#777" stroke-width="1.4"/><text x="0" y="6.5" font-size="7.5" font-family="Liberation Sans" fill="#1aa0e8">A</text></svg>
<div class="a" style="left:1408px;top:250.4px;width:16px;height:1px;background:#dcdcdc"></div>
<div class="a" style="left:1408px;top:253.4px;width:15.7px;height:16.3px;background:#fff;border:1px solid #d8d8d8"></div>
<svg style="left:1410px;top:255px" width="13" height="13"><text x="0" y="6.5" font-size="7" font-family="Liberation Sans" fill="#2b2b2b">A</text><circle cx="9" cy="9" r="1.9" fill="none" stroke="#2b2b2b" stroke-width="1.2"/><path d="M9 6 V12 M6 9 H12" stroke="#2b2b2b" stroke-width="0.8"/></svg>
<svg style="left:1409px;top:274px" width="15" height="13"><text x="0" y="10" font-size="8.5" font-family="Liberation Sans" fill="#c4c4c4">ab</text><path d="M12 1 V12 M11 1 H13 M11 12 H13" stroke="#c4c4c4" stroke-width="0.8"/></svg>
<div class="a" style="left:1408px;top:291.3px;width:16px;height:1px;background:#dcdcdc"></div>
<svg style="left:1409px;top:297px" width="15" height="13"><text x="0" y="7" font-size="7.5" font-family="Liberation Sans" fill="#2b2b2b">A</text><path d="M5.5 11 L8.5 7 L12 11" fill="none" stroke="#2b2b2b" stroke-width="1"/><path d="M6 9 V12" stroke="#2b2b2b" stroke-width="0.6"/></svg>
<div class="t" style="left:1408.5px;top:310.5px;font-size:19px;font-family:'Liberation Serif';font-style:italic;color:#2b2b2b;-webkit-text-stroke:0">æ</div>
<div class="a" style="left:1408px;top:333.2px;width:16px;height:1px;background:#dcdcdc"></div>
<div class="a" style="left:1408.4px;top:337.3px;width:15.3px;height:15.3px;background:#fff;border:1px solid #d8d8d8"></div>
<div class="t" style="left:1410px;top:337px;font-size:15px;font-family:'Liberation Serif';font-style:italic;color:#2b2b2b;-webkit-text-stroke:0">O</div>
<div class="a" style="left:1426.5px;top:78px;width:13.5px;height:680px;background:#f2f2f2;border-left:1px solid #e6e6e6"></div>
<svg style="left:1428px;top:78.5px" width="11" height="3"><path d="M0 1.5 H11" stroke="#ccc" stroke-width="1" stroke-dasharray="1 1"/></svg>
<svg style="left:1431px;top:86.5px" width="5" height="7"><path d="M0.5 0.5 L4.5 3.5 L0.5 6.5Z" fill="#555"/></svg>
<svg style="left:1428.5px;top:97.5px" width="11" height="10"><path d="M1 9 L6 4" stroke="#e8731b" stroke-width="2"/><path d="M5 2.5 L7.5 5 L9.8 2.7 C10.5 2 9 0.5 8.3 1.2Z" fill="#2b2b2b"/></svg>
<svg style="left:1430.5px;top:113px" width="7" height="4"><path d="M0.5 3.5 L3.5 0.5 L6.5 3.5" fill="none" stroke="#c8c8c8" stroke-width="0.9"/></svg>
<svg style="left:1427px;top:121.3px;overflow:hidden" width="13" height="609.7">
<rect x="0.5" y="0.5" width="11.8" height="11.3" fill="#fff" stroke="#aaa" stroke-width="0.8"/><path d="M2 10 L10.8 2" stroke="#e02030" stroke-width="0.9"/>
<rect x="0" y="11.83" width="12.6" height="11.93" fill="#1b1b1b"/>
<line x1="0" y1="11.83" x2="12.6" y2="11.83" stroke="#000" stroke-opacity="0.12" stroke-width="0.6"/>
<rect x="0" y="23.66" width="12.6" height="11.93" fill="#333333"/>
<line x1="0" y1="23.66" x2="12.6" y2="23.66" stroke="#000" stroke-opacity="0.12" stroke-width="0.6"/>
<rect x="0" y="35.49" width="12.6" height="11.93" fill="#4d4d4d"/>
<line x1="0" y1="35.49" x2="12.6" y2="35.49" stroke="#000" stroke-opacity="0.12" stroke-width="0.6"/>
<rect x="0" y="47.32" width="12.6" height="11.93" fill="#5f5f5f"/>
<line x1="0" y1="47.32" x2="12.6" y2="47.32" stroke="#000" stroke-opacity="0.12" stroke-width="0.6"/>
<rect x="0" y="59.15" width="12.6" height="11.93" fill="#787878"/>
<line x1="0" y1="59.15" x2="12.6" y2="59.15" stroke="#000" stroke-opacity="0.12" stroke-width="0.6"/>
<rect x="0" y="70.98" width="12.6" height="11.93" fill="#8a8a8a"/>
<line x1="0" y1="70.98" x2="12.6" y2="70.98" stroke="#000" stroke-opacity="0.12" stroke-width="0.6"/>
<rect x="0" y="82.81" width="12.6" height="11.93" fill="#a0a0a0"/>
<line x1="0" y1="82.81" x2="12.6" y2="82.81" stroke="#000" stroke-opacity="0.12" stroke-width="0.6"/>
<rect x="0" y="94.64" width="12.6" height="11.93" fill="#b4b4b4"/>
<line x1="0" y1="94.64" x2="12.6" y2="94.64" stroke="#000" stroke-opacity="0.12" stroke-width="0.6"/>
<rect x="0" y="106.47" width="12.6" height="11.93" fill="#cdcdcd"/>
<line x1="0" y1="106.47" x2="12.6" y2="106.47" stroke="#000" stroke-opacity="0.12" stroke-width="0.6"/>
<rect x="0" y="118.30" width="12.6" height="11.93" fill="#e3e3e3"/>
<line x1="0" y1="118.30" x2="12.6" y2="118.30" stroke="#000" stroke-opacity="0.12" stroke-width="0.6"/>
<rect x="0" y="130.13" width="12.6" height="11.93" fill="#ffffff"/>
<line x1="0" y1="130.13" x2="12.6" y2="130.13" stroke="#000" stroke-opacity="0.12" stroke-width="0.6"/>
<rect x="0" y="141.96" width="12.6" height="11.93" fill="#2e2a8c"/>
<line x1="0" y1="141.96" x2="12.6" y2="141.96" stroke="#000" stroke-opacity="0.12" stroke-width="0.6"/>
<rect x="0" y="153.79" width="12.6" height="11.93" fill="#1aa0d8"/>
<line x1="0" y1="153.79" x2="12.6" y2="153.79" stroke="#000" stroke-opacity="0.12" stroke-width="0.6"/>
<rect x="0" y="165.62" width="12.6" height="11.93" fill="#0c9b4c"/>
<line x1="0" y1="165.62" x2="12.6" y2="165.62" stroke="#000" stroke-opacity="0.12" stroke-width="0.6"/>
<rect x="0" y="177.45" width="12.6" height="11.93" fill="#f3d628"/>
<line x1="0" y1="177.45" x2="12.6" y2="177.45" stroke="#000" stroke-opacity="0.12" stroke-width="0.6"/>
<rect x="0" y="189.28" width="12.6" height="11.93" fill="#d6282b"/>
<line x1="0" y1="189.28" x2="12.6" y2="189.28" stroke="#000" stroke-opacity="0.12" stroke-width="0.6"/>
<rect x="0" y="201.11" width="12.6" height="11.93" fill="#d81b7f"/>
<line x1="0" y1="201.11" x2="12.6" y2="201.11" stroke="#000" stroke-opacity="0.12" stroke-width="0.6"/>
<rect x="0" y="212.94" width="12.6" height="11.93" fill="#9f478e"/>
<line x1="0" y1="212.94" x2="12.6" y2="212.94" stroke="#000" stroke-opacity="0.12" stroke-width="0.6"/>
<rect x="0" y="224.77" width="12.6" height="11.93" fill="#e8731b"/>
<line x1="0" y1="224.77" x2="12.6" y2="224.77" stroke="#000" stroke-opacity="0.12" stroke-width="0.6"/>
<rect x="0" y="236.60" width="12.6" height="11.93" fill="#f7b3b9"/>
<line x1="0" y1="236.60" x2="12.6" y2="236.60" stroke="#000" stroke-opacity="0.12" stroke-width="0.6"/>
<rect x="0" y="248.43" width="12.6" height="11.93" fill="#786960"/>
<line x1="0" y1="248.43" x2="12.6" y2="248.43" stroke="#000" stroke-opacity="0.12" stroke-width="0.6"/>
<rect x="0" y="260.26" width="12.6" height="11.93" fill="#d7d2f1"/>
<line x1="0" y1="260.26" x2="12.6" y2="260.26" stroke="#000" stroke-opacity="0.12" stroke-width="0.6"/>
<rect x="0" y="272.09" width="12.6" height="11.93" fill="#a99ddc"/>
<line x1="0" y1="272.09" x2="12.6" y2="272.09" stroke="#000" stroke-opacity="0.12" stroke-width="0.6"/>
<rect x="0" y="283.92" width="12.6" height="11.93" fill="#6e8ccb"/>
<line x1="0" y1="283.92" x2="12.6" y2="283.92" stroke="#000" stroke-opacity="0.12" stroke-width="0.6"/>
<rect x="0" y="295.75" width="12.6" height="11.93" fill="#7f66b9"/>
<line x1="0" y1="295.75" x2="12.6" y2="295.75" stroke="#000" stroke-opacity="0.12" stroke-width="0.6"/>
<rect x="0" y="307.58" width="12.6" height="11.93" fill="#8e86ad"/>
<line x1="0" y1="307.58" x2="12.6" y2="307.58" stroke="#000" stroke-opacity="0.12" stroke-width="0.6"/>
<rect x="0" y="319.41" width="12.6" height="11.93" fill="#4a5b86"/>
<line x1="0" y1="319.41" x2="12.6" y2="319.41" stroke="#000" stroke-opacity="0.12" stroke-width="0.6"/>
<rect x="0" y="331.24" width="12.6" height="11.93" fill="#4e4a61"/>
<line x1="0" y1="331.24" x2="12.6" y2="331.24" stroke="#000" stroke-opacity="0.12" stroke-width="0.6"/>
<rect x="0" y="343.07" width="12.6" height="11.93" fill="#6d7c93"/>
<line x1="0" y1="343.07" x2="12.6" y2="343.07" stroke="#000" stroke-opacity="0.12" stroke-width="0.6"/>
<rect x="0" y="354.90" width="12.6" height="11.93" fill="#0c8fca"/>
<line x1="0" y1="354.90" x2="12.6" y2="354.90" stroke="#000" stroke-opacity="0.12" stroke-width="0.6"/>
<rect x="0" y="366.73" width="12.6" height="11.93" fill="#a8d9ef"/>
<line x1="0" y1="366.73" x2="12.6" y2="366.73" stroke="#000" stroke-opacity="0.12" stroke-width="0.6"/>
<rect x="0" y="378.56" width="12.6" height="11.93" fill="#b5c5d1"/>
<line x1="0" y1="378.56" x2="12.6" y2="378.56" stroke="#000" stroke-opacity="0.12" stroke-width="0.6"/>
<rect x="0" y="390.39" width="12.6" height="11.93" fill="#8b989f"/>
<line x1="0" y1="390.39" x2="12.6" y2="390.39" stroke="#000" stroke-opacity="0.12" stroke-width="0.6"/>
<rect x="0" y="402.22" width="12.6" height="11.93" fill="#666e74"/>
<line x1="0" y1="402.22" x2="12.6" y2="402.22" stroke="#000" stroke-opacity="0.12" stroke-width="0.6"/>
<rect x="0" y="414.05" width="12.6" height="11.93" fill="#3c4246"/>
<line x1="0" y1="414.05" x2="12.6" y2="414.05" stroke="#000" stroke-opacity="0.12" stroke-width="0.6"/>
<rect x="0" y="425.88" width="12.6" height="11.93" fill="#4c5d59"/>
<line x1="0" y1="425.88" x2="12.6" y2="425.88" stroke="#000" stroke-opacity="0.12" stroke-width="0.6"/>
<rect x="0" y="437.71" width="12.6" height="11.93" fill="#4b7c6f"/>
<line x1="0" y1="437.71" x2="12.6" y2="437.71" stroke="#000" stroke-opacity="0.12" stroke-width="0.6"/>
<rect x="0" y="449.54" width="12.6" height="11.93" fill="#6e8b89"/>
<line x1="0" y1="449.54" x2="12.6" y2="449.54" stroke="#000" stroke-opacity="0.12" stroke-width="0.6"/>
<rect x="0" y="461.37" width="12.6" height="11.93" fill="#60a693"/>
<line x1="0" y1="461.37" x2="12.6" y2="461.37" stroke="#000" stroke-opacity="0.12" stroke-width="0.6"/>
<rect x="0" y="473.20" width="12.6" height="11.93" fill="#6aa372"/>
<line x1="0" y1="473.20" x2="12.6" y2="473.20" stroke="#000" stroke-opacity="0.12" stroke-width="0.6"/>
<rect x="0" y="485.03" width="12.6" height="11.93" fill="#80d1d9"/>
<line x1="0" y1="485.03" x2="12.6" y2="485.03" stroke="#000" stroke-opacity="0.12" stroke-width="0.6"/>
<rect x="0" y="496.86" width="12.6" height="11.93" fill="#62a7b1"/>
<line x1="0" y1="496.86" x2="12.6" y2="496.86" stroke="#000" stroke-opacity="0.12" stroke-width="0.6"/>
<rect x="0" y="508.69" width="12.6" height="11.93" fill="#b9c8b5"/>
<line x1="0" y1="508.69" x2="12.6" y2="508.69" stroke="#000" stroke-opacity="0.12" stroke-width="0.6"/>
<rect x="0" y="520.52" width="12.6" height="11.93" fill="#dcf6d9"/>
<line x1="0" y1="520.52" x2="12.6" y2="520.52" stroke="#000" stroke-opacity="0.12" stroke-width="0.6"/>
<rect x="0" y="532.35" width="12.6" height="11.93" fill="#b0e5b1"/>
<line x1="0" y1="532.35" x2="12.6" y2="532.35" stroke="#000" stroke-opacity="0.12" stroke-width="0.6"/>
<rect x="0" y="544.18" width="12.6" height="11.93" fill="#8a968b"/>
<line x1="0" y1="544.18" x2="12.6" y2="544.18" stroke="#000" stroke-opacity="0.12" stroke-width="0.6"/>
<rect x="0" y="556.01" width="12.6" height="11.93" fill="#8a9471"/>
<line x1="0" y1="556.01" x2="12.6" y2="556.01" stroke="#000" stroke-opacity="0.12" stroke-width="0.6"/>
<rect x="0" y="567.84" width="12.6" height="11.93" fill="#c0c17a"/>
<line x1="0" y1="567.84" x2="12.6" y2="567.84" stroke="#000" stroke-opacity="0.12" stroke-width="0.6"/>
<rect x="0" y="579.67" width="12.6" height="11.93" fill="#b9c399"/>
<line x1="0" y1="579.67" x2="12.6" y2="579.67" stroke="#000" stroke-opacity="0.12" stroke-width="0.6"/>
<rect x="0" y="591.50" width="12.6" height="11.93" fill="#bacf22"/>
<line x1="0" y1="591.50" x2="12.6" y2="591.50" stroke="#000" stroke-opacity="0.12" stroke-width="0.6"/>
<rect x="0" y="603.33" width="12.6" height="11.93" fill="#e9ec82"/>
<line x1="0" y1="603.33" x2="12.6" y2="603.33" stroke="#000" stroke-opacity="0.12" stroke-width="0.6"/>
</svg>
<div class="a" style="left:1439.3px;top:121px;width:0.7px;height:610px;background:#bdbdbd"></div>
<svg style="left:1429.5px;top:734.5px" width="8" height="5"><path d="M0.5 0.5 L4 4 L7.5 0.5" fill="none" stroke="#bbb" stroke-width="0.9"/></svg>
<svg style="left:1429.5px;top:745.5px" width="9" height="7"><path d="M0.5 0.5 L3.5 3.5 L0.5 6.5 M4.5 0.5 L7.5 3.5 L4.5 6.5" fill="none" stroke="#bbb" stroke-width="0.9"/></svg>
<div class="a" style="left:0;top:758.3px;width:1440px;height:24px;background:#f2f2f2;border-top:1px solid #dcdcdc"></div>
<svg style="left:5.5px;top:764px" width="14" height="13"><circle cx="6.5" cy="6.5" r="3.4" fill="none" stroke="#2b2b2b" stroke-width="1.8"/><path d="M6.5 1 V3 M6.5 10 V12 M1 6.5 H3 M10 6.5 H12 M2.6 2.6 L4 4 M9 9 L10.4 10.4 M10.4 2.6 L9 4 M4 9 L2.6 10.4" stroke="#2b2b2b" stroke-width="1.7"/><path d="M13.5 11 V13.5 H11Z" fill="#555"/></svg>
<div class="t" style="left:22.7px;top:766.7px;font-size:7.35px;color:#222">Next click for Drag/Scale; Second click for Rotate/Skew; Dbl-clicking tool selects all objects; Shift+click multi-selects; Alt+click digs</div>
<svg style="left:1104px;top:764px" width="12" height="12"><path d="M6 0.8 L11.3 6 L6 11.2 L0.7 6Z" fill="#fff" stroke="#2b2b2b" stroke-width="1.1"/><path d="M2.5 6 H9.5 L6 9.5Z" fill="#e02020"/><path d="M12 8 V12 H8Z" fill="#e02020"/></svg>
<div class="a" style="left:1117px;top:762.5px;width:15px;height:15px;background:#fff;border:1px solid #ccc"></div>
<svg style="left:1117px;top:762.5px" width="15" height="15"><path d="M1.5 13.5 L13.5 1.5" stroke="#e02020" stroke-width="1"/></svg>
<div class="t" style="left:1134px;top:766.5px;font-size:7.3px;color:#222">None</div>
<svg style="left:1248px;top:763px" width="8" height="14"><path d="M4 0.5 C1.5 4 1 7 2 10 H6 C7 7 6.5 4 4 0.5Z" fill="none" stroke="#2b2b2b" stroke-width="0.9"/><rect x="2.2" y="10.5" width="3.6" height="2.5" fill="none" stroke="#2b2b2b" stroke-width="0.8"/></svg>
<div class="a" style="left:1258px;top:762.7px;width:14px;height:14px;background:#d42a2a"></div>
<div class="t" style="left:1275px;top:766.5px;font-size:7.1px;color:#222">C:0 M:100 Y:100 K:0 &nbsp;Hairline</div>
<div class="a" style="left:1416.5px;top:762px;width:1px;height:16px;background:#d0d0d0"></div>
<svg style="left:1422px;top:764px" width="13" height="12"><rect x="0.5" y="0.5" width="11.5" height="8" fill="#fff" stroke="#444" stroke-width="0.8"/><rect x="1.5" y="1.5" width="9.5" height="3" fill="#e83030"/><rect x="1.5" y="4.5" width="9.5" height="3" fill="#30a0f0"/><circle cx="6.2" cy="4.5" r="1.4" fill="#999"/><path d="M3.5 11 H9" stroke="#444" stroke-width="0.9"/></svg>
<div class="a" style="left:0;top:782px;width:1440px;height:28px;background:linear-gradient(90deg,#2a1f1d 0%,#2a1f1e 28.5%,#3a2b2c 32%,#473335 35%,#464040 39%,#4a4747 45%,#494747 62%,#4a3c3e 66%,#463638 76%,#3c2c2e 85%,#2e2224 100%)"></div>
<div class="a" style="left:0;top:782px;width:34px;height:28px;background:#2b1f1d"></div>
<svg style="left:11px;top:789.5px" width="13" height="13"><path d="M0 1.6 L5.6 0.8 V6 H0Z M6.4 0.7 L13 -0.2 V6 H6.4Z M0 7 H5.6 V12.2 L0 11.4Z M6.4 7 H13 V13.2 L6.4 12.3Z" fill="#fff"/></svg>
<div class="a" style="left:34px;top:782px;width:203px;height:28px;background:#f3f3f3;border-top:1px solid #e0e0e0"></div>
<svg style="left:42px;top:789px" width="14" height="14"><circle cx="8.3" cy="5.5" r="4" fill="none" stroke="#333" stroke-width="1.1"/><path d="M5.5 8.5 L1 13" stroke="#333" stroke-width="1.3"/></svg>
<div class="t" style="left:62.2px;top:791.5px;font-size:10.4px;color:#333;-webkit-text-stroke:0">Type here to search</div>
<svg style="left:185px;top:785px" width="50" height="24"><path d="M17.6 2.0 C19.404 8.395999999999999 19.404 8.395999999999999 25.8 10.2 C19.404 12.004 19.404 12.004 17.6 18.4 C15.796000000000001 12.004 15.796000000000001 12.004 9.400000000000002 10.2 C15.796000000000001 8.395999999999999 15.796000000000001 8.395999999999999 17.6 2.0Z" fill="#f7b928"/><path d="M33.2 9.2 C34.146 12.554 34.146 12.554 37.5 13.5 C34.146 14.446 34.146 14.446 33.2 17.8 C32.254000000000005 14.446 32.254000000000005 14.446 28.900000000000002 13.5 C32.254000000000005 12.554 32.254000000000005 12.554 33.2 9.2Z" fill="#f7b928"/><path d="M4 13.399999999999999 C4.616 15.584 4.616 15.584 6.8 16.2 C4.616 16.816 4.616 16.816 4 19.0 C3.384 16.816 3.384 16.816 1.2000000000000002 16.2 C3.384 15.584 3.384 15.584 4 13.399999999999999Z" fill="#2a9df4"/><circle cx="29.3" cy="3.5" r="1.1" fill="#e8532b"/><circle cx="42.3" cy="17.5" r="1" fill="#7bc043"/></svg>
<svg style="left:246.5px;top:790px" width="14" height="12"><rect x="1.5" y="2.5" width="7" height="7" fill="none" stroke="#d8d8d8" stroke-width="0.9"/><path d="M0.5 0.8 H9.5 M0.5 11.2 H9.5 M11.8 0.5 V11.5" stroke="#d8d8d8" stroke-width="0.9"/><path d="M11.8 5 V6.5" stroke="#2a1f1e" stroke-width="0.8"/></svg>
<svg style="left:281px;top:789px" width="15" height="14"><path d="M0.5 1 H5.5 L7 2.5 H14.5 V12.5 H0.5Z" fill="#e8b52d"/><rect x="0.5" y="4" width="14" height="8.5" fill="#f8d35e"/><rect x="4.5" y="8" width="6" height="4.5" fill="#2a8ee0"/><rect x="6" y="9.5" width="3" height="3" fill="#f8d35e"/></svg>
<svg style="left:315.5px;top:788px" width="17" height="16"><path d="M4 6 L10 1.5 L16 6 V15 H4Z" fill="#3f7fe0"/><path d="M4 6 L10 1.5 L16 6 L10 10Z" fill="#7ab8f8"/><path d="M10 10 L16 6 V15 H6Z" fill="#2459c8"/><rect x="0.5" y="8" width="7" height="7" rx="1" fill="#1a4ab0"/><circle cx="4" cy="11.5" r="1.8" fill="none" stroke="#fff" stroke-width="1"/></svg>
<svg style="left:349.5px;top:788px" width="17" height="17"><circle cx="8.5" cy="8.5" r="7.5" fill="#1b6fd0"/><path d="M1.5 9.5 C2 2 14 0 16 8 C16 11 12 12 9 11 C6 10 7 7 10 7.5 C8 5 3 5 1.5 9.5Z" fill="#3ed06e"/><path d="M16 8 C16 11 12 12 9 11 C6 10 7 7 10 7.5" fill="none" stroke="#2aa0e0" stroke-width="1.2"/><circle cx="9.5" cy="9.5" r="2" fill="#1b6fd0"/></svg>
<div class="a" style="left:377.5px;top:782px;width:34px;height:28px;background:#5b514d"></div>
<svg style="left:385px;top:788px" width="17" height="17"><circle cx="8.5" cy="8.5" r="7.6" fill="#0f2414" stroke="#7fd34e" stroke-width="1.3"/><path d="M3.6 5.6 L5.8 3.6 L12.6 10 L12.8 12.8 L10 12.4Z" fill="#e6ece6"/><path d="M5.4 5.4 L11 10.8" stroke="#0f2414" stroke-width="0.8"/></svg>
<div class="a" style="left:275.5px;top:808.5px;width:29px;height:1.5px;background:#f0c0a8"></div>
<div class="a" style="left:310px;top:808.5px;width:29px;height:1.5px;background:#f0c0a8"></div>
<div class="a" style="left:345px;top:808.5px;width:29px;height:1.5px;background:#f0c0a8"></div>
<div class="a" style="left:379px;top:808.5px;width:29px;height:1.5px;background:#f0c0a8"></div>
<svg style="left:1134px;top:788px" width="18" height="17"><circle cx="8" cy="8" r="7" fill="#fff"/><circle cx="8" cy="8" r="6" fill="#1a8ae0"/><text x="8" y="12" font-size="10" font-weight="bold" text-anchor="middle" font-family="Liberation Sans" fill="#fff">?</text><circle cx="13.5" cy="12.5" r="3.3" fill="#e02030" stroke="#fff" stroke-width="0.7"/><path d="M13.5 10.7 V13 M13.5 14 V14.5" stroke="#fff" stroke-width="0.9"/></svg>
<svg style="left:1188px;top:786px" width="20" height="20"><circle cx="10" cy="11" r="7" fill="#f29b2a"/><ellipse cx="6" cy="7.5" rx="5" ry="3" fill="#bfd8f0"/><ellipse cx="12" cy="15" rx="5.5" ry="3" fill="#cfe0f4"/><circle cx="14.5" cy="4.5" r="3.6" fill="#d82020"/><text x="14.5" y="6.6" font-size="5.5" text-anchor="middle" font-family="Liberation Sans" fill="#fff">2</text></svg>
<div class="t" style="left:1211px;top:791px;font-size:9.9px;color:#f2f2f2;-webkit-text-stroke:0">6°C &nbsp;Partly sunny</div>
<svg style="left:1303px;top:792.5px" width="9" height="6"><path d="M0.5 5.5 L4.5 1 L8.5 5.5" fill="none" stroke="#eee" stroke-width="1"/></svg>
<svg style="left:1320px;top:790px" width="13" height="11"><path d="M0.5 3.5 H3 L6 1 V10 L3 7.5 H0.5Z" fill="none" stroke="#eee" stroke-width="0.9"/><path d="M8 3 C9 4.5 9 6.5 8 8 M10 1.5 C12 4 12 7 10 9.5" fill="none" stroke="#eee" stroke-width="0.9"/></svg>
<svg style="left:1338px;top:789px" width="12" height="14"><rect x="1" y="6" width="5" height="6" fill="#d82020"/><text x="3.5" y="11" font-size="5" text-anchor="middle" font-family="Liberation Sans" fill="#fff">2</text><path d="M2.5 1 V5 M8 1 V7 M1 2.5 H4 M6.5 3 H10 M6.5 5.5 H10" stroke="#eee" stroke-width="1"/></svg>
<div class="t" style="left:1366.5px;top:785.5px;font-size:8.3px;color:#f2f2f2;-webkit-text-stroke:0">10:53</div>
<div class="t" style="left:1357px;top:797.5px;font-size:8.3px;color:#f2f2f2;-webkit-text-stroke:0">18/11/2025</div>
<svg style="left:1410px;top:787px" width="18" height="18"><path d="M1 1 H12 V9 H5 L2 12 V9 H1Z" fill="#f4f4f4"/><path d="M3 3.5 H10 M3 6 H10" stroke="#555" stroke-width="0.8"/><circle cx="11" cy="12" r="4.8" fill="#2a2a2a" stroke="#ddd" stroke-width="0.6"/><text x="11" y="14.5" font-size="6.5" text-anchor="middle" font-family="Liberation Sans" fill="#fff">10</text></svg>
<div class="a" style="left:1437.5px;top:782px;width:1.5px;height:28px;background:#554a48"></div>
<svg style="left:0;top:0" width="1440" height="810">
<defs><clipPath id="cv"><rect x="30.5" y="104.2" width="1347.5" height="643"/></clipPath></defs>
<g clip-path="url(#cv)">
<path d="M30.5 157.3 H1378 M30.5 556.1 H1378" stroke="#f07878" stroke-width="1"/>
<path d="M167.0 220.8 L268.0 212.0 L316.0 209.8 L363.0 207.8 L380.0 206.1 L420.0 202.2 L506.0 199.6 L560.0 197.9 L680.0 194.2 L703.5 194.2 L1020.0 192.4 L1115.4 193.5 L1150.0 193.5 L1268.0 196.5 L1377.0 203.3 M276.7 215.6 L316.0 213.3 L363.0 210.6 L380.0 209.6 L420.0 207.2 L506.0 204.6 L560.0 203.0 L680.0 199.4 L703.5 199.4 L1020.0 198.5 L1115.4 200.0 L1150.0 200.0 L1268.0 203.2 M31.0 232.5 L167.0 223.3 L268.0 219.2 L316.0 216.7 L363.0 215.0 L380.0 214.5 L420.0 213.3 L506.0 211.4 L560.0 210.3 L680.0 207.7 L703.5 207.7 L1020.0 204.3 L1115.4 204.8 L1150.0 204.8 L1268.0 205.8 L1377.0 207.2 M31.0 235.8 L167.0 230.0 L268.0 226.3 L316.0 223.9 L363.0 222.8 L380.0 222.3 L420.0 221.1 L506.0 219.3 L560.0 218.1 L680.0 215.6 L703.5 215.6 L1020.0 213.1 L1115.4 213.4 L1150.0 213.4 L1268.0 214.0 L1377.0 215.0 M31.0 243.0 L167.0 236.7 L268.0 233.3 L316.0 231.3 L363.0 229.4 L380.0 229.1 L420.0 228.3 L506.0 226.4 L560.0 225.2 L680.0 222.5 L703.5 222.5 L1020.0 221.8 L1115.4 222.0 L1150.0 222.0 L1268.0 222.8 L1377.0 223.8 M31.0 249.7 L167.0 243.0 L268.0 240.3 L316.0 238.9 L363.0 236.7 L380.0 236.2 L420.0 235.0 L506.0 233.5 L560.0 232.5 L680.0 230.4 L703.5 230.4 L1020.0 230.2 L1115.4 230.4 L1150.0 230.4 L1268.0 231.0 L1377.0 231.6 M31.0 255.0 L167.0 250.0 L268.0 247.5 L316.0 245.0 L363.0 243.9 L380.0 243.4 L420.0 242.2 L506.0 241.2 L560.0 240.6 L680.0 239.3 L703.5 239.3 L1020.0 237.4 L1115.4 237.5 L1150.0 237.5 L1268.0 238.0 L1377.0 238.4 M31.0 262.5 L167.0 257.5 L268.0 254.7 L316.0 252.5 L363.0 250.8 L380.0 250.4 L420.0 249.5 L506.0 249.1 L560.0 248.8 L680.0 248.2 L703.5 248.2 L1020.0 246.1 L1115.4 246.2 L1150.0 246.2 L1268.0 246.6 L1377.0 247.1 M1115.4 253.7 L1150.0 253.7 L1268.0 254.3 L1377.0 254.9 M31.0 269.2 L167.0 264.2 L268.0 261.7 L316.0 259.8 L363.0 258.5 L380.0 258.1 L420.0 257.2 L506.0 256.8 L560.0 256.6 L680.0 256.1 L703.5 256.1 L1020.0 262.1 L1115.4 262.1 L1150.0 262.1 L1268.0 262.7 L1377.0 263.3 M31.0 276.3 L167.0 271.3 L268.0 269.2 L316.0 267.6 L363.0 266.5 L380.0 266.2 L420.0 265.5 L506.0 265.2 L560.0 265.0 L680.0 264.6 L703.5 264.6 L1020.0 270.5 L1115.4 270.5 L1150.0 270.5 L1268.0 270.8 L1377.0 271.1 M31.0 282.5 L167.0 278.3 L268.0 276.3 L316.0 275.8 L363.0 275.3 L380.0 275.1 L420.0 274.5 L506.0 274.0 L560.0 273.6 L680.0 272.9 L703.5 272.9 L1020.0 278.4 L1115.4 278.4 L1150.0 278.4 L1268.0 278.6 L1377.0 278.9 M31.0 289.2 L167.0 285.8 L268.0 284.2 L316.0 283.4 L363.0 282.9 L380.0 282.7 L420.0 282.3 L506.0 282.1 L560.0 282.0 L680.0 281.8 L703.5 281.8 L1020.0 286.8 L1115.4 286.8 L1150.0 286.8 L1268.0 287.3 L1377.0 287.8 M31.0 295.8 L167.0 293.0 L268.0 291.7 L316.0 291.4 L363.0 291.1 L380.0 291.0 L420.0 290.9 L506.0 290.8 L560.0 290.8 L680.0 290.7 L703.5 290.7 L1020.0 294.7 L1115.4 294.7 L1150.0 294.7 L1268.0 295.1 L1377.0 295.6 M31.0 302.5 L167.0 301.3 L268.0 300.8 L316.0 300.5 L363.0 300.2 L380.0 300.1 L420.0 300.0 L506.0 299.9 L560.0 299.8 L680.0 299.6 L703.5 299.6 L1020.0 303.6 L1115.4 303.6 L1150.0 303.6 L1268.0 304.0 L1377.0 304.4 M31.0 311.7 L167.0 309.2 L268.0 310.3 L316.0 310.1 L363.0 310.0 L380.0 309.9 L420.0 309.8 L506.0 309.5 L560.0 309.4 L680.0 309.0 L703.5 309.0 L1020.0 314.4 L1115.4 314.4 L1150.0 314.4 L1268.0 314.4 L1377.0 314.4 M31.0 322.0 L167.0 321.6 L268.0 321.3 L316.0 321.2 L363.0 321.1 L380.0 321.0 L420.0 320.9 L506.0 320.7 L560.0 320.5 L680.0 320.5 L703.5 320.5 L1020.0 323.7 L1115.4 324.6 L1150.0 324.6 L1268.0 324.6 L1377.0 324.6 M31.0 331.0 L167.0 330.6 L268.0 330.2 L316.0 330.1 L363.0 329.9 L380.0 329.9 L420.0 329.7 L506.0 329.5 L560.0 329.3 L680.0 329.3 L703.5 329.3 L1020.0 332.0 L1115.4 332.8 L1150.0 332.8 L1268.0 332.8 L1377.0 332.8 M31.0 339.0 L167.0 338.6 L268.0 338.3 L316.0 338.1 L363.0 338.0 L380.0 337.9 L420.0 337.8 L506.0 337.6 L560.0 337.4 L680.0 337.4 L703.5 337.4 L1020.0 339.7 L1115.4 340.4 L1150.0 340.4 L1268.0 340.4 L1377.0 340.4 M31.0 348.2 L167.0 348.3 L268.0 348.4 L316.0 348.4 L363.0 348.5 L380.0 348.5 L420.0 348.5 L506.0 348.6 L560.0 348.6 L680.0 348.6 L703.5 348.6 L1020.0 348.7 L1115.4 348.7 L1150.0 348.7 L1268.0 348.7 L1377.0 348.7 M31.0 358.0 L167.0 358.1 L268.0 358.1 L316.0 358.1 L363.0 358.1 L380.0 358.1 L420.0 358.1 L506.0 358.2 L560.0 358.2 L680.0 358.2 L703.5 358.2 L1020.0 358.2 L1115.4 358.2 L1150.0 358.2 L1268.0 358.2 L1377.0 358.2 M31.0 367.7 L167.0 367.9 L268.0 368.1 L316.0 368.2 L363.0 368.3 L380.0 368.3 L420.0 368.4 L506.0 368.5 L560.0 368.6 L680.0 368.6 L703.5 368.6 L1020.0 366.9 L1115.4 366.4 L1150.0 366.4 L1268.0 366.4 L1377.0 366.4 M31.0 375.6 L167.0 375.9 L268.0 376.1 L316.0 376.2 L363.0 376.3 L380.0 376.3 L420.0 376.4 L506.0 376.6 L560.0 376.7 L680.0 376.7 L703.5 376.7 L1020.0 374.9 L1115.4 374.4 L1150.0 374.4 L1268.0 374.4 L1377.0 374.4 M31.0 385.0 L167.0 385.3 L268.0 385.6 L316.0 385.7 L363.0 385.8 L380.0 385.9 L420.0 386.0 L506.0 386.2 L560.0 386.3 L680.0 386.3 L703.5 386.3 L1020.0 383.6 L1115.4 382.8 L1150.0 382.8 L1268.0 382.8 L1377.0 382.8 M31.0 395.3 L167.0 395.8 L268.0 396.1 L316.0 396.5 L363.0 396.9 L380.0 397.0 L420.0 397.2 L506.0 397.6 L560.0 397.7 L680.0 398.0 L703.5 398.0 L1020.0 392.4 L1115.4 392.4 L1150.0 392.4 L1268.0 392.3 L1377.0 392.2 M31.0 404.2 L167.0 405.3 L268.0 405.7 L316.0 406.1 L363.0 406.5 L380.0 406.7 L420.0 406.8 L506.0 406.9 L560.0 407.2 L680.0 408.0 L703.5 408.0 L1020.0 403.5 L1115.4 403.5 L1150.0 403.5 L1268.0 402.8 L1377.0 402.2 M31.0 410.3 L167.0 413.0 L268.0 413.7 L316.0 414.5 L363.0 415.3 L380.0 415.6 L420.0 415.8 L506.0 416.1 L560.0 416.2 L680.0 416.3 L703.5 416.3 L1020.0 411.7 L1115.4 411.7 L1150.0 411.7 L1268.0 411.8 L1377.0 411.8 M31.0 417.5 L167.0 420.3 L268.0 423.0 L316.0 423.6 L363.0 424.1 L380.0 424.3 L420.0 424.5 L506.0 424.8 L560.0 424.7 L680.0 424.5 L703.5 424.5 L1020.0 419.8 L1115.4 419.8 L1150.0 419.8 L1268.0 419.9 L1377.0 420.0 M31.0 424.2 L167.0 427.5 L268.0 430.4 L316.0 431.0 L363.0 431.5 L380.0 431.7 L420.0 432.1 L506.0 433.1 L560.0 433.2 L680.0 433.4 L703.5 433.4 L1020.0 428.6 L1115.4 428.6 L1150.0 428.6 L1268.0 428.4 L1377.0 428.2 M31.0 430.0 L167.0 434.7 L268.0 437.2 L316.0 438.2 L363.0 439.2 L380.0 439.6 L420.0 440.2 L506.0 441.5 L560.0 441.7 L680.0 442.1 L703.5 442.1 L1020.0 436.5 L1115.4 436.5 L1150.0 436.5 L1268.0 436.6 L1377.0 436.7 M31.0 437.0 L167.0 441.3 L268.0 444.6 L316.0 446.1 L363.0 447.5 L380.0 448.0 L420.0 448.4 L506.0 449.4 L560.0 449.7 L680.0 450.3 L703.5 450.3 L1020.0 444.4 L1115.4 444.4 L1150.0 444.4 L1268.0 443.8 L1377.0 443.3 M1115.4 452.8 L1150.0 452.8 L1268.0 452.7 L1377.0 452.7 M31.0 443.7 L167.0 448.3 L268.0 452.6 L316.0 453.8 L363.0 455.0 L380.0 455.4 L420.0 456.1 L506.0 457.6 L560.0 457.9 L680.0 458.5 L703.5 458.5 L1020.0 461.4 L1115.4 461.0 L1150.0 461.0 L1268.0 460.8 L1377.0 460.7 M31.0 450.8 L167.0 456.3 L268.0 460.0 L316.0 461.3 L363.0 462.6 L380.0 463.1 L420.0 464.1 L506.0 466.1 L560.0 466.7 L680.0 468.0 L703.5 468.0 L1020.0 469.3 L1115.4 469.1 L1150.0 469.1 L1268.0 469.0 L1377.0 468.9 M31.0 456.7 L167.0 463.3 L268.0 466.5 L316.0 468.5 L363.0 470.4 L380.0 471.1 L420.0 471.9 L506.0 473.5 L560.0 474.6 L680.0 476.9 L703.5 476.9 L1020.0 477.2 L1115.4 476.5 L1150.0 476.5 L1268.0 476.0 L1377.0 475.6 M31.0 463.3 L167.0 469.2 L268.0 473.9 L316.0 475.5 L363.0 477.0 L380.0 477.6 L420.0 478.6 L506.0 480.9 L560.0 481.8 L680.0 483.7 L703.5 483.7 L1020.0 484.6 L1115.4 484.3 L1150.0 484.3 L1268.0 483.8 L1377.0 483.3 M31.0 470.0 L167.0 476.3 L268.0 480.9 L316.0 482.7 L363.0 484.4 L380.0 485.0 L420.0 485.9 L506.0 487.8 L560.0 488.9 L680.0 491.4 L703.5 491.4 L1020.0 492.5 L1115.4 492.0 L1150.0 492.0 L1268.0 491.5 L1377.0 491.1 M31.0 474.2 L167.0 483.0 L268.0 487.2 L316.0 489.4 L363.0 491.6 L380.0 492.4 L420.0 493.4 L506.0 495.7 L560.0 496.9 L680.0 499.6 L703.5 499.6 L1020.0 501.0 L1115.4 500.5 L1150.0 500.5 L1268.0 499.5 L1377.0 498.4 M167.0 485.8 L268.0 494.3 L316.0 496.3 L363.0 498.2 L380.0 498.9 L420.0 500.1 L506.0 502.6 L560.0 504.2 L680.0 507.8 L703.5 507.8 L1020.0 508.9 L1115.4 507.0 L1150.0 507.0 L1268.0 502.0 M459.7 506.7 L506.0 508.1 L560.0 509.7 L680.0 513.2 L703.5 513.2 L1020.0 514.1 L1115.4 512.0 L1150.0 512.0 L1268.0 508.5 L1377.0 503.3" fill="none" stroke="#333" stroke-width="0.9" stroke-opacity="0.78"/>
<path d="M69.2 231.4 v1.8 M72.6 226.4 v1.8 M69.2 235.7 v1.8 M72.6 230.7 v1.8 M69.2 242.7 v1.8 M72.6 237.7 v1.8 M69.2 249.3 v1.8 M72.6 244.3 v1.8 M69.2 255.1 v1.8 M72.6 250.1 v1.8 M69.2 262.6 v1.8 M72.6 257.6 v1.8 M69.2 269.3 v1.8 M72.6 264.3 v1.8 M69.2 276.4 v1.8 M72.6 271.4 v1.8 M69.2 282.9 v1.8 M72.6 277.9 v1.8 M69.2 289.8 v1.8 M72.6 284.8 v1.8 M69.2 296.6 v1.8 M72.6 291.6 v1.8 M69.2 303.7 v1.8 M72.6 298.7 v1.8 M69.2 312.6 v1.8 M72.6 307.6 v1.8 M69.2 323.5 v1.8 M72.6 318.5 v1.8 M69.2 332.5 v1.8 M72.6 327.5 v1.8 M69.2 340.5 v1.8 M72.6 335.5 v1.8 M69.2 349.8 v1.8 M72.6 344.8 v1.8 M69.2 359.6 v1.8 M72.6 354.6 v1.8 M69.2 369.4 v1.8 M72.6 364.4 v1.8 M69.2 377.3 v1.8 M72.6 372.3 v1.8 M69.2 386.7 v1.8 M72.6 381.7 v1.8 M69.2 397.0 v1.8 M72.6 392.0 v1.8 M69.2 406.1 v1.8 M72.6 401.1 v1.8 M69.2 412.7 v1.8 M72.6 407.7 v1.8 M69.2 419.9 v1.8 M72.6 414.9 v1.8 M69.2 426.8 v1.8 M72.6 421.8 v1.8 M69.2 433.0 v1.8 M72.6 428.0 v1.8 M69.2 439.9 v1.8 M72.6 434.9 v1.8 M69.2 446.7 v1.8 M72.6 441.7 v1.8 M69.2 454.0 v1.8 M72.6 449.0 v1.8 M69.2 460.2 v1.8 M72.6 455.2 v1.8 M69.2 466.6 v1.8 M72.6 461.6 v1.8 M69.2 473.5 v1.8 M72.6 468.5 v1.8 M69.2 478.4 v1.8 M72.6 473.4 v1.8 M117.2 228.1 v1.8 M120.6 223.1 v1.8 M117.2 233.6 v1.8 M120.6 228.6 v1.8 M117.2 240.5 v1.8 M120.6 235.5 v1.8 M117.2 247.0 v1.8 M120.6 242.0 v1.8 M117.2 253.4 v1.8 M120.6 248.4 v1.8 M117.2 260.9 v1.8 M120.6 255.9 v1.8 M117.2 267.6 v1.8 M120.6 262.6 v1.8 M117.2 274.7 v1.8 M120.6 269.7 v1.8 M117.2 281.4 v1.8 M120.6 276.4 v1.8 M117.2 288.6 v1.8 M120.6 283.6 v1.8 M117.2 295.6 v1.8 M120.6 290.6 v1.8 M117.2 303.3 v1.8 M120.6 298.3 v1.8 M117.2 311.7 v1.8 M120.6 306.7 v1.8 M117.2 323.4 v1.8 M120.6 318.4 v1.8 M117.2 332.3 v1.8 M120.6 327.3 v1.8 M117.2 340.3 v1.8 M120.6 335.3 v1.8 M117.2 349.9 v1.8 M120.6 344.9 v1.8 M117.2 359.6 v1.8 M120.6 354.6 v1.8 M117.2 369.4 v1.8 M120.6 364.4 v1.8 M117.2 377.4 v1.8 M120.6 372.4 v1.8 M117.2 386.8 v1.8 M120.6 381.8 v1.8 M117.2 397.2 v1.8 M120.6 392.2 v1.8 M117.2 406.5 v1.8 M120.6 401.5 v1.8 M117.2 413.6 v1.8 M120.6 408.6 v1.8 M117.2 420.9 v1.8 M120.6 415.9 v1.8 M117.2 427.9 v1.8 M120.6 422.9 v1.8 M117.2 434.6 v1.8 M120.6 429.6 v1.8 M117.2 441.4 v1.8 M120.6 436.4 v1.8 M117.2 448.3 v1.8 M120.6 443.3 v1.8 M117.2 456.0 v1.8 M120.6 451.0 v1.8 M117.2 462.6 v1.8 M120.6 457.6 v1.8 M117.2 468.7 v1.8 M120.6 463.7 v1.8 M117.2 475.7 v1.8 M120.6 470.7 v1.8 M117.2 481.5 v1.8 M120.6 476.5 v1.8 M165.2 222.4 v1.8 M168.6 217.4 v1.8 M165.2 224.9 v1.8 M168.6 219.9 v1.8 M165.2 231.6 v1.8 M168.6 226.6 v1.8 M165.2 238.3 v1.8 M168.6 233.3 v1.8 M165.2 244.6 v1.8 M168.6 239.6 v1.8 M165.2 251.6 v1.8 M168.6 246.6 v1.8 M165.2 259.1 v1.8 M168.6 254.1 v1.8 M165.2 265.8 v1.8 M168.6 260.8 v1.8 M165.2 272.9 v1.8 M168.6 267.9 v1.8 M165.2 279.9 v1.8 M168.6 274.9 v1.8 M165.2 287.4 v1.8 M168.6 282.4 v1.8 M165.2 294.6 v1.8 M168.6 289.6 v1.8 M165.2 302.9 v1.8 M168.6 297.9 v1.8 M165.2 310.8 v1.8 M168.6 305.8 v1.8 M165.2 323.2 v1.8 M168.6 318.2 v1.8 M165.2 332.2 v1.8 M168.6 327.2 v1.8 M165.2 340.2 v1.8 M168.6 335.2 v1.8 M165.2 349.9 v1.8 M168.6 344.9 v1.8 M165.2 359.7 v1.8 M168.6 354.7 v1.8 M165.2 369.5 v1.8 M168.6 364.5 v1.8 M165.2 377.5 v1.8 M168.6 372.5 v1.8 M165.2 386.9 v1.8 M168.6 381.9 v1.8 M165.2 397.4 v1.8 M168.6 392.4 v1.8 M165.2 406.9 v1.8 M168.6 401.9 v1.8 M165.2 414.6 v1.8 M168.6 409.6 v1.8 M165.2 421.9 v1.8 M168.6 416.9 v1.8 M165.2 429.1 v1.8 M168.6 424.1 v1.8 M165.2 436.3 v1.8 M168.6 431.3 v1.8 M165.2 442.9 v1.8 M168.6 437.9 v1.8 M165.2 449.9 v1.8 M168.6 444.9 v1.8 M165.2 457.9 v1.8 M168.6 452.9 v1.8 M165.2 464.9 v1.8 M168.6 459.9 v1.8 M165.2 470.8 v1.8 M168.6 465.8 v1.8 M165.2 477.9 v1.8 M168.6 472.9 v1.8 M165.2 484.6 v1.8 M168.6 479.6 v1.8 M165.2 487.4 v1.8 M168.6 482.4 v1.8 M225.7 217.1 v1.8 M229.1 212.1 v1.8 M225.7 222.4 v1.8 M229.1 217.4 v1.8 M225.7 229.4 v1.8 M229.1 224.4 v1.8 M225.7 236.3 v1.8 M229.1 231.3 v1.8 M225.7 243.0 v1.8 M229.1 238.0 v1.8 M225.7 250.1 v1.8 M229.1 245.1 v1.8 M225.7 257.4 v1.8 M229.1 252.4 v1.8 M225.7 264.3 v1.8 M229.1 259.3 v1.8 M225.7 271.6 v1.8 M229.1 266.6 v1.8 M225.7 278.7 v1.8 M229.1 273.7 v1.8 M225.7 286.4 v1.8 M229.1 281.4 v1.8 M225.7 293.8 v1.8 M229.1 288.8 v1.8 M225.7 302.6 v1.8 M229.1 297.6 v1.8 M225.7 311.5 v1.8 M229.1 306.5 v1.8 M225.7 323.0 v1.8 M229.1 318.0 v1.8 M225.7 332.0 v1.8 M229.1 327.0 v1.8 M225.7 340.0 v1.8 M229.1 335.0 v1.8 M225.7 349.9 v1.8 M229.1 344.9 v1.8 M225.7 359.7 v1.8 M229.1 354.7 v1.8 M225.7 369.6 v1.8 M229.1 364.6 v1.8 M225.7 377.6 v1.8 M229.1 372.6 v1.8 M225.7 387.1 v1.8 M229.1 382.1 v1.8 M225.7 397.6 v1.8 M229.1 392.6 v1.8 M225.7 407.1 v1.8 M229.1 402.1 v1.8 M225.7 415.0 v1.8 M229.1 410.0 v1.8 M225.7 423.5 v1.8 M229.1 418.5 v1.8 M225.7 430.8 v1.8 M229.1 425.8 v1.8 M225.7 437.8 v1.8 M229.1 432.8 v1.8 M225.7 444.9 v1.8 M229.1 439.9 v1.8 M225.7 452.5 v1.8 M229.1 447.5 v1.8 M225.7 460.1 v1.8 M229.1 455.1 v1.8 M225.7 466.8 v1.8 M229.1 461.8 v1.8 M225.7 473.6 v1.8 M229.1 468.6 v1.8 M225.7 480.7 v1.8 M229.1 475.7 v1.8 M225.7 487.1 v1.8 M229.1 482.1 v1.8 M225.7 492.5 v1.8 M229.1 487.5 v1.8 M275.2 213.2 v1.8 M278.6 208.2 v1.8 M275.2 217.1 v1.8 M278.6 212.1 v1.8 M275.2 220.3 v1.8 M278.6 215.3 v1.8 M275.2 227.5 v1.8 M278.6 222.5 v1.8 M275.2 234.5 v1.8 M278.6 229.5 v1.8 M275.2 241.6 v1.8 M278.6 236.6 v1.8 M275.2 248.6 v1.8 M278.6 243.6 v1.8 M275.2 255.9 v1.8 M278.6 250.9 v1.8 M275.2 262.9 v1.8 M278.6 257.9 v1.8 M275.2 270.5 v1.8 M278.6 265.5 v1.8 M275.2 277.8 v1.8 M278.6 272.8 v1.8 M275.2 285.7 v1.8 M278.6 280.7 v1.8 M275.2 293.2 v1.8 M278.6 288.2 v1.8 M275.2 302.3 v1.8 M278.6 297.3 v1.8 M275.2 311.9 v1.8 M278.6 306.9 v1.8 M275.2 322.9 v1.8 M278.6 317.9 v1.8 M275.2 331.8 v1.8 M278.6 326.8 v1.8 M275.2 339.9 v1.8 M278.6 334.9 v1.8 M275.2 350.0 v1.8 M278.6 345.0 v1.8 M275.2 359.7 v1.8 M278.6 354.7 v1.8 M275.2 369.7 v1.8 M278.6 364.7 v1.8 M275.2 377.7 v1.8 M278.6 372.7 v1.8 M275.2 387.2 v1.8 M278.6 382.2 v1.8 M275.2 397.8 v1.8 M278.6 392.8 v1.8 M275.2 407.4 v1.8 M278.6 402.4 v1.8 M275.2 415.5 v1.8 M278.6 410.5 v1.8 M275.2 424.7 v1.8 M278.6 419.7 v1.8 M275.2 432.1 v1.8 M278.6 427.1 v1.8 M275.2 439.0 v1.8 M278.6 434.0 v1.8 M275.2 446.5 v1.8 M278.6 441.5 v1.8 M275.2 454.4 v1.8 M278.6 449.4 v1.8 M275.2 461.8 v1.8 M278.6 456.8 v1.8 M275.2 468.5 v1.8 M278.6 463.5 v1.8 M275.2 475.8 v1.8 M278.6 470.8 v1.8 M275.2 482.8 v1.8 M278.6 477.8 v1.8 M275.2 489.2 v1.8 M278.6 484.2 v1.8 M275.2 496.3 v1.8 M278.6 491.3 v1.8 M315.2 211.4 v1.8 M318.6 206.4 v1.8 M315.2 214.8 v1.8 M318.6 209.8 v1.8 M315.2 218.3 v1.8 M318.6 213.3 v1.8 M315.2 225.5 v1.8 M318.6 220.5 v1.8 M315.2 232.9 v1.8 M318.6 227.9 v1.8 M315.2 240.5 v1.8 M318.6 235.5 v1.8 M315.2 246.6 v1.8 M318.6 241.6 v1.8 M315.2 254.1 v1.8 M318.6 249.1 v1.8 M315.2 261.4 v1.8 M318.6 256.4 v1.8 M315.2 269.2 v1.8 M318.6 264.2 v1.8 M315.2 277.4 v1.8 M318.6 272.4 v1.8 M315.2 285.0 v1.8 M318.6 280.0 v1.8 M315.2 293.0 v1.8 M318.6 288.0 v1.8 M315.2 302.1 v1.8 M318.6 297.1 v1.8 M315.2 311.7 v1.8 M318.6 306.7 v1.8 M315.2 322.8 v1.8 M318.6 317.8 v1.8 M315.2 331.7 v1.8 M318.6 326.7 v1.8 M315.2 339.7 v1.8 M318.6 334.7 v1.8 M315.2 350.0 v1.8 M318.6 345.0 v1.8 M315.2 359.7 v1.8 M318.6 354.7 v1.8 M315.2 369.8 v1.8 M318.6 364.8 v1.8 M315.2 377.8 v1.8 M318.6 372.8 v1.8 M315.2 387.3 v1.8 M318.6 382.3 v1.8 M315.2 398.1 v1.8 M318.6 393.1 v1.8 M315.2 407.7 v1.8 M318.6 402.7 v1.8 M315.2 416.1 v1.8 M318.6 411.1 v1.8 M315.2 425.2 v1.8 M318.6 420.2 v1.8 M315.2 432.6 v1.8 M318.6 427.6 v1.8 M315.2 439.9 v1.8 M318.6 434.9 v1.8 M315.2 447.7 v1.8 M318.6 442.7 v1.8 M315.2 455.4 v1.8 M318.6 450.4 v1.8 M315.2 463.0 v1.8 M318.6 458.0 v1.8 M315.2 470.1 v1.8 M318.6 465.1 v1.8 M315.2 477.1 v1.8 M318.6 472.1 v1.8 M315.2 484.3 v1.8 M318.6 479.3 v1.8 M315.2 491.1 v1.8 M318.6 486.1 v1.8 M315.2 497.9 v1.8 M318.6 492.9 v1.8 M362.2 209.3 v1.8 M365.6 204.3 v1.8 M362.2 212.1 v1.8 M365.6 207.1 v1.8 M362.2 216.6 v1.8 M365.6 211.6 v1.8 M362.2 224.4 v1.8 M365.6 219.4 v1.8 M362.2 231.0 v1.8 M365.6 226.0 v1.8 M362.2 238.3 v1.8 M365.6 233.3 v1.8 M362.2 245.5 v1.8 M365.6 240.5 v1.8 M362.2 252.4 v1.8 M365.6 247.4 v1.8 M362.2 260.1 v1.8 M365.6 255.1 v1.8 M362.2 268.1 v1.8 M365.6 263.1 v1.8 M362.2 276.9 v1.8 M365.6 271.9 v1.8 M362.2 284.5 v1.8 M365.6 279.5 v1.8 M362.2 292.7 v1.8 M365.6 287.7 v1.8 M362.2 301.8 v1.8 M365.6 296.8 v1.8 M362.2 311.6 v1.8 M365.6 306.6 v1.8 M362.2 322.7 v1.8 M365.6 317.7 v1.8 M362.2 331.5 v1.8 M365.6 326.5 v1.8 M362.2 339.6 v1.8 M365.6 334.6 v1.8 M362.2 350.1 v1.8 M365.6 345.1 v1.8 M362.2 359.7 v1.8 M365.6 354.7 v1.8 M362.2 369.9 v1.8 M365.6 364.9 v1.8 M362.2 377.9 v1.8 M365.6 372.9 v1.8 M362.2 387.4 v1.8 M365.6 382.4 v1.8 M362.2 398.5 v1.8 M365.6 393.5 v1.8 M362.2 408.2 v1.8 M365.6 403.2 v1.8 M362.2 416.9 v1.8 M365.6 411.9 v1.8 M362.2 425.7 v1.8 M365.6 420.7 v1.8 M362.2 433.1 v1.8 M365.6 428.1 v1.8 M362.2 440.9 v1.8 M365.6 435.9 v1.8 M362.2 449.1 v1.8 M365.6 444.1 v1.8 M362.2 456.6 v1.8 M365.6 451.6 v1.8 M362.2 464.3 v1.8 M365.6 459.3 v1.8 M362.2 472.0 v1.8 M365.6 467.0 v1.8 M362.2 478.7 v1.8 M365.6 473.7 v1.8 M362.2 486.0 v1.8 M365.6 481.0 v1.8 M362.2 493.3 v1.8 M365.6 488.3 v1.8 M362.2 499.8 v1.8 M365.6 494.8 v1.8 M403.2 205.3 v1.8 M406.6 200.3 v1.8 M403.2 209.7 v1.8 M406.6 204.7 v1.8 M403.2 215.3 v1.8 M406.6 210.3 v1.8 M403.2 223.1 v1.8 M406.6 218.1 v1.8 M403.2 230.2 v1.8 M406.6 225.2 v1.8 M403.2 237.0 v1.8 M406.6 232.0 v1.8 M403.2 244.2 v1.8 M406.6 239.2 v1.8 M403.2 251.4 v1.8 M406.6 246.4 v1.8 M403.2 259.1 v1.8 M406.6 254.1 v1.8 M403.2 267.4 v1.8 M406.6 262.4 v1.8 M403.2 276.3 v1.8 M406.6 271.3 v1.8 M403.2 284.1 v1.8 M406.6 279.1 v1.8 M403.2 292.6 v1.8 M406.6 287.6 v1.8 M403.2 301.7 v1.8 M406.6 296.7 v1.8 M403.2 311.5 v1.8 M406.6 306.5 v1.8 M403.2 322.5 v1.8 M406.6 317.5 v1.8 M403.2 331.4 v1.8 M406.6 326.4 v1.8 M403.2 339.5 v1.8 M406.6 334.5 v1.8 M403.2 350.1 v1.8 M406.6 345.1 v1.8 M403.2 359.7 v1.8 M406.6 354.7 v1.8 M403.2 369.9 v1.8 M406.6 364.9 v1.8 M403.2 378.0 v1.8 M406.6 373.0 v1.8 M403.2 387.5 v1.8 M406.6 382.5 v1.8 M403.2 398.7 v1.8 M406.6 393.7 v1.8 M403.2 408.3 v1.8 M406.6 403.3 v1.8 M403.2 417.3 v1.8 M406.6 412.3 v1.8 M403.2 426.0 v1.8 M406.6 421.0 v1.8 M403.2 433.6 v1.8 M406.6 428.6 v1.8 M403.2 441.6 v1.8 M406.6 436.6 v1.8 M403.2 449.9 v1.8 M406.6 444.9 v1.8 M403.2 457.4 v1.8 M406.6 452.4 v1.8 M403.2 465.3 v1.8 M406.6 460.3 v1.8 M403.2 473.2 v1.8 M406.6 468.2 v1.8 M403.2 479.9 v1.8 M406.6 474.9 v1.8 M403.2 487.2 v1.8 M406.6 482.2 v1.8 M403.2 494.7 v1.8 M406.6 489.7 v1.8 M403.2 501.2 v1.8 M406.6 496.2 v1.8 M458.7 202.6 v1.8 M462.1 197.6 v1.8 M458.7 207.6 v1.8 M462.1 202.6 v1.8 M458.7 214.0 v1.8 M462.1 209.0 v1.8 M458.7 221.8 v1.8 M462.1 216.8 v1.8 M458.7 229.0 v1.8 M462.1 224.0 v1.8 M458.7 235.9 v1.8 M462.1 230.9 v1.8 M458.7 243.3 v1.8 M462.1 238.3 v1.8 M458.7 250.9 v1.8 M462.1 245.9 v1.8 M458.7 258.6 v1.8 M462.1 253.6 v1.8 M458.7 267.0 v1.8 M462.1 262.0 v1.8 M458.7 275.9 v1.8 M462.1 270.9 v1.8 M458.7 283.8 v1.8 M462.1 278.8 v1.8 M458.7 292.5 v1.8 M462.1 287.5 v1.8 M458.7 301.5 v1.8 M462.1 296.5 v1.8 M458.7 311.3 v1.8 M462.1 306.3 v1.8 M458.7 322.4 v1.8 M462.1 317.4 v1.8 M458.7 331.2 v1.8 M462.1 326.2 v1.8 M458.7 339.3 v1.8 M462.1 334.3 v1.8 M458.7 350.1 v1.8 M462.1 345.1 v1.8 M458.7 359.8 v1.8 M462.1 354.8 v1.8 M458.7 370.0 v1.8 M462.1 365.0 v1.8 M458.7 378.1 v1.8 M462.1 373.1 v1.8 M458.7 387.7 v1.8 M462.1 382.7 v1.8 M458.7 399.0 v1.8 M462.1 394.0 v1.8 M458.7 408.4 v1.8 M462.1 403.4 v1.8 M458.7 417.5 v1.8 M462.1 412.5 v1.8 M458.7 426.2 v1.8 M462.1 421.2 v1.8 M458.7 434.2 v1.8 M462.1 429.2 v1.8 M458.7 442.4 v1.8 M462.1 437.4 v1.8 M458.7 450.5 v1.8 M462.1 445.5 v1.8 M458.7 458.4 v1.8 M462.1 453.4 v1.8 M458.7 466.6 v1.8 M462.1 461.6 v1.8 M458.7 474.2 v1.8 M462.1 469.2 v1.8 M458.7 481.3 v1.8 M462.1 476.3 v1.8 M458.7 488.4 v1.8 M462.1 483.4 v1.8 M458.7 496.1 v1.8 M462.1 491.1 v1.8 M458.7 502.9 v1.8 M462.1 497.9 v1.8 M458.7 508.4 v1.8 M462.1 503.4 v1.8 M509.2 201.0 v1.8 M512.6 196.0 v1.8 M509.2 206.1 v1.8 M512.6 201.1 v1.8 M509.2 212.9 v1.8 M512.6 207.9 v1.8 M509.2 220.8 v1.8 M512.6 215.8 v1.8 M509.2 227.9 v1.8 M512.6 222.9 v1.8 M509.2 235.0 v1.8 M512.6 230.0 v1.8 M509.2 242.8 v1.8 M512.6 237.8 v1.8 M509.2 250.6 v1.8 M512.6 245.6 v1.8 M509.2 258.4 v1.8 M512.6 253.4 v1.8 M509.2 266.8 v1.8 M512.6 261.8 v1.8 M509.2 275.5 v1.8 M512.6 270.5 v1.8 M509.2 283.7 v1.8 M512.6 278.7 v1.8 M509.2 292.4 v1.8 M512.6 287.4 v1.8 M509.2 301.5 v1.8 M512.6 296.5 v1.8 M509.2 311.1 v1.8 M512.6 306.1 v1.8 M509.2 322.2 v1.8 M512.6 317.2 v1.8 M509.2 331.1 v1.8 M512.6 326.1 v1.8 M509.2 339.1 v1.8 M512.6 334.1 v1.8 M509.2 350.2 v1.8 M512.6 345.2 v1.8 M509.2 359.8 v1.8 M512.6 354.8 v1.8 M509.2 370.1 v1.8 M512.6 365.1 v1.8 M509.2 378.2 v1.8 M512.6 373.2 v1.8 M509.2 387.8 v1.8 M512.6 382.8 v1.8 M509.2 399.2 v1.8 M512.6 394.2 v1.8 M509.2 408.5 v1.8 M512.6 403.5 v1.8 M509.2 417.7 v1.8 M512.6 412.7 v1.8 M509.2 426.4 v1.8 M512.6 421.4 v1.8 M509.2 434.7 v1.8 M512.6 429.7 v1.8 M509.2 443.1 v1.8 M512.6 438.1 v1.8 M509.2 451.0 v1.8 M512.6 446.0 v1.8 M509.2 459.2 v1.8 M512.6 454.2 v1.8 M509.2 467.8 v1.8 M512.6 462.8 v1.8 M509.2 475.2 v1.8 M512.6 470.2 v1.8 M509.2 482.6 v1.8 M512.6 477.6 v1.8 M509.2 489.5 v1.8 M512.6 484.5 v1.8 M509.2 497.4 v1.8 M512.6 492.4 v1.8 M509.2 504.3 v1.8 M512.6 499.3 v1.8 M509.2 509.8 v1.8 M512.6 504.8 v1.8 M566.2 199.2 v1.8 M569.6 194.2 v1.8 M566.2 204.4 v1.8 M569.6 199.4 v1.8 M566.2 211.7 v1.8 M569.6 206.7 v1.8 M566.2 219.6 v1.8 M569.6 214.6 v1.8 M566.2 226.6 v1.8 M569.6 221.6 v1.8 M566.2 234.0 v1.8 M569.6 229.0 v1.8 M566.2 242.1 v1.8 M569.6 237.1 v1.8 M566.2 250.4 v1.8 M569.6 245.4 v1.8 M566.2 258.2 v1.8 M569.6 253.2 v1.8 M566.2 266.6 v1.8 M569.6 261.6 v1.8 M566.2 275.2 v1.8 M569.6 270.2 v1.8 M566.2 283.6 v1.8 M569.6 278.6 v1.8 M566.2 292.4 v1.8 M569.6 287.4 v1.8 M566.2 301.4 v1.8 M569.6 296.4 v1.8 M566.2 310.9 v1.8 M569.6 305.9 v1.8 M566.2 322.1 v1.8 M569.6 317.1 v1.8 M566.2 330.9 v1.8 M569.6 325.9 v1.8 M566.2 339.0 v1.8 M569.6 334.0 v1.8 M566.2 350.2 v1.8 M569.6 345.2 v1.8 M566.2 359.8 v1.8 M569.6 354.8 v1.8 M566.2 370.2 v1.8 M569.6 365.2 v1.8 M566.2 378.3 v1.8 M569.6 373.3 v1.8 M566.2 387.9 v1.8 M569.6 382.9 v1.8 M566.2 399.3 v1.8 M569.6 394.3 v1.8 M566.2 408.9 v1.8 M569.6 403.9 v1.8 M566.2 417.8 v1.8 M569.6 412.8 v1.8 M566.2 426.3 v1.8 M569.6 421.3 v1.8 M566.2 434.8 v1.8 M569.6 429.8 v1.8 M566.2 443.3 v1.8 M569.6 438.3 v1.8 M566.2 451.3 v1.8 M569.6 446.3 v1.8 M566.2 459.5 v1.8 M569.6 454.5 v1.8 M566.2 468.4 v1.8 M569.6 463.4 v1.8 M566.2 476.3 v1.8 M569.6 471.3 v1.8 M566.2 483.5 v1.8 M569.6 478.5 v1.8 M566.2 490.7 v1.8 M569.6 485.7 v1.8 M566.2 498.7 v1.8 M569.6 493.7 v1.8 M566.2 506.1 v1.8 M569.6 501.1 v1.8 M566.2 511.5 v1.8 M569.6 506.5 v1.8 M630.7 197.3 v1.8 M634.1 192.3 v1.8 M630.7 202.4 v1.8 M634.1 197.4 v1.8 M630.7 210.3 v1.8 M634.1 205.3 v1.8 M630.7 218.2 v1.8 M634.1 213.2 v1.8 M630.7 225.2 v1.8 M634.1 220.2 v1.8 M630.7 232.8 v1.8 M634.1 227.8 v1.8 M630.7 241.4 v1.8 M634.1 236.4 v1.8 M630.7 250.0 v1.8 M634.1 245.0 v1.8 M630.7 257.9 v1.8 M634.1 252.9 v1.8 M630.7 266.4 v1.8 M634.1 261.4 v1.8 M630.7 274.8 v1.8 M634.1 269.8 v1.8 M630.7 283.5 v1.8 M634.1 278.5 v1.8 M630.7 292.3 v1.8 M634.1 287.3 v1.8 M630.7 301.3 v1.8 M634.1 296.3 v1.8 M630.7 310.7 v1.8 M634.1 305.7 v1.8 M630.7 322.1 v1.8 M634.1 317.1 v1.8 M630.7 330.9 v1.8 M634.1 325.9 v1.8 M630.7 339.0 v1.8 M634.1 334.0 v1.8 M630.7 350.2 v1.8 M634.1 345.2 v1.8 M630.7 359.8 v1.8 M634.1 354.8 v1.8 M630.7 370.2 v1.8 M634.1 365.2 v1.8 M630.7 378.3 v1.8 M634.1 373.3 v1.8 M630.7 387.9 v1.8 M634.1 382.9 v1.8 M630.7 399.5 v1.8 M634.1 394.5 v1.8 M630.7 409.3 v1.8 M634.1 404.3 v1.8 M630.7 417.8 v1.8 M634.1 412.8 v1.8 M630.7 426.2 v1.8 M634.1 421.2 v1.8 M630.7 434.9 v1.8 M634.1 429.9 v1.8 M630.7 443.5 v1.8 M634.1 438.5 v1.8 M630.7 451.7 v1.8 M634.1 446.7 v1.8 M630.7 459.9 v1.8 M634.1 454.9 v1.8 M630.7 469.1 v1.8 M634.1 464.1 v1.8 M630.7 477.6 v1.8 M634.1 472.6 v1.8 M630.7 484.5 v1.8 M634.1 479.5 v1.8 M630.7 492.0 v1.8 M634.1 487.0 v1.8 M630.7 500.1 v1.8 M634.1 495.1 v1.8 M630.7 508.0 v1.8 M634.1 503.0 v1.8 M630.7 513.4 v1.8 M634.1 508.4 v1.8 M704.2 195.8 v1.8 M707.6 190.8 v1.8 M704.2 201.0 v1.8 M707.6 196.0 v1.8 M704.2 209.3 v1.8 M707.6 204.3 v1.8 M704.2 217.2 v1.8 M707.6 212.2 v1.8 M704.2 224.1 v1.8 M707.6 219.1 v1.8 M704.2 232.0 v1.8 M707.6 227.0 v1.8 M704.2 240.9 v1.8 M707.6 235.9 v1.8 M704.2 469.6 v1.8 M707.6 464.6 v1.8 M704.2 478.5 v1.8 M707.6 473.5 v1.8 M704.2 485.3 v1.8 M707.6 480.3 v1.8 M704.2 493.0 v1.8 M707.6 488.0 v1.8 M704.2 501.2 v1.8 M707.6 496.2 v1.8 M704.2 509.4 v1.8 M707.6 504.4 v1.8 M704.2 514.8 v1.8 M707.6 509.8 v1.8 M802.0 195.2 v1.8 M805.4 190.2 v1.8 M802.0 200.7 v1.8 M805.4 195.7 v1.8 M802.0 208.2 v1.8 M805.4 203.2 v1.8 M802.0 216.4 v1.8 M805.4 211.4 v1.8 M802.0 223.9 v1.8 M805.4 218.9 v1.8 M802.0 231.9 v1.8 M805.4 226.9 v1.8 M802.0 240.3 v1.8 M805.4 235.3 v1.8 M802.0 461.0 v1.8 M805.4 456.0 v1.8 M802.0 470.0 v1.8 M805.4 465.0 v1.8 M802.0 478.6 v1.8 M805.4 473.6 v1.8 M802.0 485.6 v1.8 M805.4 480.6 v1.8 M802.0 493.3 v1.8 M805.4 488.3 v1.8 M802.0 501.6 v1.8 M805.4 496.6 v1.8 M802.0 509.7 v1.8 M805.4 504.7 v1.8 M802.0 515.1 v1.8 M805.4 510.1 v1.8 M915.2 194.6 v1.8 M918.6 189.6 v1.8 M915.2 200.4 v1.8 M918.6 195.4 v1.8 M915.2 207.0 v1.8 M918.6 202.0 v1.8 M915.2 215.5 v1.8 M918.6 210.5 v1.8 M915.2 223.6 v1.8 M918.6 218.6 v1.8 M915.2 231.9 v1.8 M918.6 226.9 v1.8 M915.2 239.6 v1.8 M918.6 234.6 v1.8 M915.2 248.4 v1.8 M918.6 243.4 v1.8 M915.2 462.1 v1.8 M918.6 457.1 v1.8 M915.2 470.5 v1.8 M918.6 465.5 v1.8 M915.2 478.7 v1.8 M918.6 473.7 v1.8 M915.2 485.9 v1.8 M918.6 480.9 v1.8 M915.2 493.7 v1.8 M918.6 488.7 v1.8 M915.2 502.1 v1.8 M918.6 497.1 v1.8 M915.2 510.1 v1.8 M918.6 505.1 v1.8 M915.2 515.4 v1.8 M918.6 510.4 v1.8 M1024.8 194.1 v1.8 M1028.2 189.1 v1.8 M1024.8 200.2 v1.8 M1028.2 195.2 v1.8 M1024.8 205.9 v1.8 M1028.2 200.9 v1.8 M1024.8 214.7 v1.8 M1028.2 209.7 v1.8 M1024.8 223.4 v1.8 M1028.2 218.4 v1.8 M1024.8 231.8 v1.8 M1028.2 226.8 v1.8 M1024.8 239.0 v1.8 M1028.2 234.0 v1.8 M1024.8 247.7 v1.8 M1028.2 242.7 v1.8 M1024.8 463.0 v1.8 M1028.2 458.0 v1.8 M1024.8 470.9 v1.8 M1028.2 465.9 v1.8 M1024.8 478.8 v1.8 M1028.2 473.8 v1.8 M1024.8 486.2 v1.8 M1028.2 481.2 v1.8 M1024.8 494.1 v1.8 M1028.2 489.1 v1.8 M1024.8 502.6 v1.8 M1028.2 497.6 v1.8 M1024.8 510.4 v1.8 M1028.2 505.4 v1.8 M1024.8 515.6 v1.8 M1028.2 510.6 v1.8 M1117.9 195.1 v1.8 M1121.3 190.1 v1.8 M1117.9 201.6 v1.8 M1121.3 196.6 v1.8 M1117.9 206.4 v1.8 M1121.3 201.4 v1.8 M1117.9 215.0 v1.8 M1121.3 210.0 v1.8 M1117.9 223.6 v1.8 M1121.3 218.6 v1.8 M1117.9 232.0 v1.8 M1121.3 227.0 v1.8 M1117.9 239.1 v1.8 M1121.3 234.1 v1.8 M1117.9 247.8 v1.8 M1121.3 242.8 v1.8 M1117.9 255.3 v1.8 M1121.3 250.3 v1.8 M1117.9 263.7 v1.8 M1121.3 258.7 v1.8 M1117.9 272.1 v1.8 M1121.3 267.1 v1.8 M1117.9 280.0 v1.8 M1121.3 275.0 v1.8 M1117.9 288.4 v1.8 M1121.3 283.4 v1.8 M1117.9 296.3 v1.8 M1121.3 291.3 v1.8 M1117.9 305.2 v1.8 M1121.3 300.2 v1.8 M1117.9 316.0 v1.8 M1121.3 311.0 v1.8 M1117.9 326.2 v1.8 M1121.3 321.2 v1.8 M1117.9 334.4 v1.8 M1121.3 329.4 v1.8 M1117.9 342.0 v1.8 M1121.3 337.0 v1.8 M1117.9 350.3 v1.8 M1121.3 345.3 v1.8 M1117.9 359.8 v1.8 M1121.3 354.8 v1.8 M1117.9 368.0 v1.8 M1121.3 363.0 v1.8 M1117.9 376.0 v1.8 M1121.3 371.0 v1.8 M1117.9 384.4 v1.8 M1121.3 379.4 v1.8 M1117.9 394.0 v1.8 M1121.3 389.0 v1.8 M1117.9 405.1 v1.8 M1121.3 400.1 v1.8 M1117.9 413.3 v1.8 M1121.3 408.3 v1.8 M1117.9 421.4 v1.8 M1121.3 416.4 v1.8 M1117.9 430.2 v1.8 M1121.3 425.2 v1.8 M1117.9 438.1 v1.8 M1121.3 433.1 v1.8 M1117.9 446.0 v1.8 M1121.3 441.0 v1.8 M1117.9 454.4 v1.8 M1121.3 449.4 v1.8 M1117.9 462.6 v1.8 M1121.3 457.6 v1.8 M1117.9 470.7 v1.8 M1121.3 465.7 v1.8 M1117.9 478.1 v1.8 M1121.3 473.1 v1.8 M1117.9 485.9 v1.8 M1121.3 480.9 v1.8 M1117.9 493.6 v1.8 M1121.3 488.6 v1.8 M1117.9 502.1 v1.8 M1121.3 497.1 v1.8 M1117.9 508.6 v1.8 M1121.3 503.6 v1.8 M1117.9 513.6 v1.8 M1121.3 508.6 v1.8 M1146.7 195.1 v1.8 M1150.1 190.1 v1.8 M1146.7 201.6 v1.8 M1150.1 196.6 v1.8 M1146.7 206.4 v1.8 M1150.1 201.4 v1.8 M1146.7 215.0 v1.8 M1150.1 210.0 v1.8 M1146.7 223.6 v1.8 M1150.1 218.6 v1.8 M1146.7 232.0 v1.8 M1150.1 227.0 v1.8 M1146.7 239.1 v1.8 M1150.1 234.1 v1.8 M1146.7 247.8 v1.8 M1150.1 242.8 v1.8 M1146.7 255.3 v1.8 M1150.1 250.3 v1.8 M1146.7 263.7 v1.8 M1150.1 258.7 v1.8 M1146.7 272.1 v1.8 M1150.1 267.1 v1.8 M1146.7 280.0 v1.8 M1150.1 275.0 v1.8 M1146.7 288.4 v1.8 M1150.1 283.4 v1.8 M1146.7 296.3 v1.8 M1150.1 291.3 v1.8 M1146.7 305.2 v1.8 M1150.1 300.2 v1.8 M1146.7 316.0 v1.8 M1150.1 311.0 v1.8 M1146.7 326.2 v1.8 M1150.1 321.2 v1.8 M1146.7 334.4 v1.8 M1150.1 329.4 v1.8 M1146.7 342.0 v1.8 M1150.1 337.0 v1.8 M1146.7 350.3 v1.8 M1150.1 345.3 v1.8 M1146.7 359.8 v1.8 M1150.1 354.8 v1.8 M1146.7 368.0 v1.8 M1150.1 363.0 v1.8 M1146.7 376.0 v1.8 M1150.1 371.0 v1.8 M1146.7 384.4 v1.8 M1150.1 379.4 v1.8 M1146.7 394.0 v1.8 M1150.1 389.0 v1.8 M1146.7 405.1 v1.8 M1150.1 400.1 v1.8 M1146.7 413.3 v1.8 M1150.1 408.3 v1.8 M1146.7 421.4 v1.8 M1150.1 416.4 v1.8 M1146.7 430.2 v1.8 M1150.1 425.2 v1.8 M1146.7 438.1 v1.8 M1150.1 433.1 v1.8 M1146.7 446.0 v1.8 M1150.1 441.0 v1.8 M1146.7 454.4 v1.8 M1150.1 449.4 v1.8 M1146.7 462.6 v1.8 M1150.1 457.6 v1.8 M1146.7 470.7 v1.8 M1150.1 465.7 v1.8 M1146.7 478.1 v1.8 M1150.1 473.1 v1.8 M1146.7 485.9 v1.8 M1150.1 480.9 v1.8 M1146.7 493.6 v1.8 M1150.1 488.6 v1.8 M1146.7 502.1 v1.8 M1150.1 497.1 v1.8 M1146.7 508.6 v1.8 M1150.1 503.6 v1.8 M1146.7 513.6 v1.8 M1150.1 508.6 v1.8 M1188.2 196.1 v1.8 M1191.6 191.1 v1.8 M1188.2 202.7 v1.8 M1191.6 197.7 v1.8 M1188.2 206.7 v1.8 M1191.6 201.7 v1.8 M1188.2 215.2 v1.8 M1191.6 210.2 v1.8 M1188.2 223.9 v1.8 M1191.6 218.9 v1.8 M1188.2 232.2 v1.8 M1191.6 227.2 v1.8 M1188.2 239.3 v1.8 M1191.6 234.3 v1.8 M1188.2 247.9 v1.8 M1191.6 242.9 v1.8 M1188.2 255.5 v1.8 M1191.6 250.5 v1.8 M1188.2 263.9 v1.8 M1191.6 258.9 v1.8 M1188.2 272.2 v1.8 M1191.6 267.2 v1.8 M1188.2 280.1 v1.8 M1191.6 275.1 v1.8 M1188.2 288.6 v1.8 M1191.6 283.6 v1.8 M1188.2 296.4 v1.8 M1191.6 291.4 v1.8 M1188.2 305.3 v1.8 M1191.6 300.3 v1.8 M1188.2 316.0 v1.8 M1191.6 311.0 v1.8 M1188.2 326.2 v1.8 M1191.6 321.2 v1.8 M1188.2 334.4 v1.8 M1191.6 329.4 v1.8 M1188.2 342.0 v1.8 M1191.6 337.0 v1.8 M1188.2 350.3 v1.8 M1191.6 345.3 v1.8 M1188.2 359.8 v1.8 M1191.6 354.8 v1.8 M1188.2 368.0 v1.8 M1191.6 363.0 v1.8 M1188.2 376.0 v1.8 M1191.6 371.0 v1.8 M1188.2 384.4 v1.8 M1191.6 379.4 v1.8 M1188.2 394.0 v1.8 M1191.6 389.0 v1.8 M1188.2 404.9 v1.8 M1191.6 399.9 v1.8 M1188.2 413.3 v1.8 M1191.6 408.3 v1.8 M1188.2 421.4 v1.8 M1191.6 416.4 v1.8 M1188.2 430.1 v1.8 M1191.6 425.1 v1.8 M1188.2 438.1 v1.8 M1191.6 433.1 v1.8 M1188.2 445.8 v1.8 M1191.6 440.8 v1.8 M1188.2 454.4 v1.8 M1191.6 449.4 v1.8 M1188.2 462.5 v1.8 M1191.6 457.5 v1.8 M1188.2 470.7 v1.8 M1191.6 465.7 v1.8 M1188.2 477.9 v1.8 M1191.6 472.9 v1.8 M1188.2 485.7 v1.8 M1191.6 480.7 v1.8 M1188.2 493.4 v1.8 M1191.6 488.4 v1.8 M1188.2 501.8 v1.8 M1191.6 496.8 v1.8 M1188.2 506.9 v1.8 M1191.6 501.9 v1.8 M1188.2 512.4 v1.8 M1191.6 507.4 v1.8 M1229.2 197.2 v1.8 M1232.6 192.2 v1.8 M1229.2 203.8 v1.8 M1232.6 198.8 v1.8 M1229.2 207.1 v1.8 M1232.6 202.1 v1.8 M1229.2 215.4 v1.8 M1232.6 210.4 v1.8 M1229.2 224.1 v1.8 M1232.6 219.1 v1.8 M1229.2 232.4 v1.8 M1232.6 227.4 v1.8 M1229.2 239.4 v1.8 M1232.6 234.4 v1.8 M1229.2 248.1 v1.8 M1232.6 243.1 v1.8 M1229.2 255.7 v1.8 M1232.6 250.7 v1.8 M1229.2 264.1 v1.8 M1232.6 259.1 v1.8 M1229.2 272.3 v1.8 M1232.6 267.3 v1.8 M1229.2 280.1 v1.8 M1232.6 275.1 v1.8 M1229.2 288.7 v1.8 M1232.6 283.7 v1.8 M1229.2 296.6 v1.8 M1232.6 291.6 v1.8 M1229.2 305.5 v1.8 M1232.6 300.5 v1.8 M1229.2 316.0 v1.8 M1232.6 311.0 v1.8 M1229.2 326.2 v1.8 M1232.6 321.2 v1.8 M1229.2 334.4 v1.8 M1232.6 329.4 v1.8 M1229.2 342.0 v1.8 M1232.6 337.0 v1.8 M1229.2 350.3 v1.8 M1232.6 345.3 v1.8 M1229.2 359.8 v1.8 M1232.6 354.8 v1.8 M1229.2 368.0 v1.8 M1232.6 363.0 v1.8 M1229.2 376.0 v1.8 M1232.6 371.0 v1.8 M1229.2 384.4 v1.8 M1232.6 379.4 v1.8 M1229.2 393.9 v1.8 M1232.6 388.9 v1.8 M1229.2 404.6 v1.8 M1232.6 399.6 v1.8 M1229.2 413.4 v1.8 M1232.6 408.4 v1.8 M1229.2 421.5 v1.8 M1232.6 416.5 v1.8 M1229.2 430.1 v1.8 M1232.6 425.1 v1.8 M1229.2 438.2 v1.8 M1232.6 433.2 v1.8 M1229.2 445.6 v1.8 M1232.6 440.6 v1.8 M1229.2 454.3 v1.8 M1232.6 449.3 v1.8 M1229.2 462.5 v1.8 M1232.6 457.5 v1.8 M1229.2 470.6 v1.8 M1232.6 465.6 v1.8 M1229.2 477.8 v1.8 M1232.6 472.8 v1.8 M1229.2 485.6 v1.8 M1232.6 480.6 v1.8 M1229.2 493.3 v1.8 M1232.6 488.3 v1.8 M1229.2 501.4 v1.8 M1232.6 496.4 v1.8 M1229.2 505.2 v1.8 M1232.6 500.2 v1.8 M1229.2 511.2 v1.8 M1232.6 506.2 v1.8 M1266.2 198.1 v1.8 M1269.6 193.1 v1.8 M1266.2 204.8 v1.8 M1269.6 199.8 v1.8 M1266.2 207.4 v1.8 M1269.6 202.4 v1.8 M1266.2 215.6 v1.8 M1269.6 210.6 v1.8 M1266.2 224.4 v1.8 M1269.6 219.4 v1.8 M1266.2 232.6 v1.8 M1269.6 227.6 v1.8 M1266.2 239.6 v1.8 M1269.6 234.6 v1.8 M1266.2 248.2 v1.8 M1269.6 243.2 v1.8 M1266.2 255.9 v1.8 M1269.6 250.9 v1.8 M1266.2 264.3 v1.8 M1269.6 259.3 v1.8 M1266.2 272.4 v1.8 M1269.6 267.4 v1.8 M1266.2 280.2 v1.8 M1269.6 275.2 v1.8 M1266.2 288.9 v1.8 M1269.6 283.9 v1.8 M1266.2 296.7 v1.8 M1269.6 291.7 v1.8 M1266.2 305.6 v1.8 M1269.6 300.6 v1.8 M1266.2 316.0 v1.8 M1269.6 311.0 v1.8 M1266.2 326.2 v1.8 M1269.6 321.2 v1.8 M1266.2 334.4 v1.8 M1269.6 329.4 v1.8 M1266.2 342.0 v1.8 M1269.6 337.0 v1.8 M1266.2 350.3 v1.8 M1269.6 345.3 v1.8 M1266.2 359.8 v1.8 M1269.6 354.8 v1.8 M1266.2 368.0 v1.8 M1269.6 363.0 v1.8 M1266.2 376.0 v1.8 M1269.6 371.0 v1.8 M1266.2 384.4 v1.8 M1269.6 379.4 v1.8 M1266.2 393.9 v1.8 M1269.6 388.9 v1.8 M1266.2 404.4 v1.8 M1269.6 399.4 v1.8 M1266.2 413.4 v1.8 M1269.6 408.4 v1.8 M1266.2 421.5 v1.8 M1269.6 416.5 v1.8 M1266.2 430.0 v1.8 M1269.6 425.0 v1.8 M1266.2 438.2 v1.8 M1269.6 433.2 v1.8 M1266.2 445.4 v1.8 M1269.6 440.4 v1.8 M1266.2 454.3 v1.8 M1269.6 449.3 v1.8 M1266.2 462.4 v1.8 M1269.6 457.4 v1.8 M1266.2 470.6 v1.8 M1269.6 465.6 v1.8 M1266.2 477.6 v1.8 M1269.6 472.6 v1.8 M1266.2 485.4 v1.8 M1269.6 480.4 v1.8 M1266.2 493.1 v1.8 M1269.6 488.1 v1.8 M1266.2 501.1 v1.8 M1269.6 496.1 v1.8 M1266.2 503.6 v1.8 M1269.6 498.6 v1.8 M1266.2 510.1 v1.8 M1269.6 505.1 v1.8 M1304.2 200.5 v1.8 M1307.6 195.5 v1.8 M1304.2 207.9 v1.8 M1307.6 202.9 v1.8 M1304.2 215.9 v1.8 M1307.6 210.9 v1.8 M1304.2 224.7 v1.8 M1307.6 219.7 v1.8 M1304.2 232.8 v1.8 M1307.6 227.8 v1.8 M1304.2 239.7 v1.8 M1307.6 234.7 v1.8 M1304.2 248.4 v1.8 M1307.6 243.4 v1.8 M1304.2 256.1 v1.8 M1307.6 251.1 v1.8 M1304.2 264.5 v1.8 M1307.6 259.5 v1.8 M1304.2 272.5 v1.8 M1307.6 267.5 v1.8 M1304.2 280.3 v1.8 M1307.6 275.3 v1.8 M1304.2 289.1 v1.8 M1307.6 284.1 v1.8 M1304.2 296.9 v1.8 M1307.6 291.9 v1.8 M1304.2 305.7 v1.8 M1307.6 300.7 v1.8 M1304.2 316.0 v1.8 M1307.6 311.0 v1.8 M1304.2 326.2 v1.8 M1307.6 321.2 v1.8 M1304.2 334.4 v1.8 M1307.6 329.4 v1.8 M1304.2 342.0 v1.8 M1307.6 337.0 v1.8 M1304.2 350.3 v1.8 M1307.6 345.3 v1.8 M1304.2 359.8 v1.8 M1307.6 354.8 v1.8 M1304.2 368.0 v1.8 M1307.6 363.0 v1.8 M1304.2 376.0 v1.8 M1307.6 371.0 v1.8 M1304.2 384.4 v1.8 M1307.6 379.4 v1.8 M1304.2 393.9 v1.8 M1307.6 388.9 v1.8 M1304.2 404.2 v1.8 M1307.6 399.2 v1.8 M1304.2 413.4 v1.8 M1307.6 408.4 v1.8 M1304.2 421.5 v1.8 M1307.6 416.5 v1.8 M1304.2 429.9 v1.8 M1307.6 424.9 v1.8 M1304.2 438.2 v1.8 M1307.6 433.2 v1.8 M1304.2 445.2 v1.8 M1307.6 440.2 v1.8 M1304.2 454.3 v1.8 M1307.6 449.3 v1.8 M1304.2 462.4 v1.8 M1307.6 457.4 v1.8 M1304.2 470.6 v1.8 M1307.6 465.6 v1.8 M1304.2 477.5 v1.8 M1307.6 472.5 v1.8 M1304.2 485.2 v1.8 M1307.6 480.2 v1.8 M1304.2 493.0 v1.8 M1307.6 488.0 v1.8 M1304.2 500.7 v1.8 M1307.6 495.7 v1.8 M1304.2 508.3 v1.8 M1307.6 503.3 v1.8 M1374.2 204.8 v1.8 M1377.6 199.8 v1.8 M1374.2 208.8 v1.8 M1377.6 203.8 v1.8 M1374.2 216.6 v1.8 M1377.6 211.6 v1.8 M1374.2 225.4 v1.8 M1377.6 220.4 v1.8 M1374.2 233.2 v1.8 M1377.6 228.2 v1.8 M1374.2 240.0 v1.8 M1377.6 235.0 v1.8 M1374.2 248.7 v1.8 M1377.6 243.7 v1.8 M1374.2 256.5 v1.8 M1377.6 251.5 v1.8 M1374.2 264.9 v1.8 M1377.6 259.9 v1.8 M1374.2 272.7 v1.8 M1377.6 267.7 v1.8 M1374.2 280.5 v1.8 M1377.6 275.5 v1.8 M1374.2 289.4 v1.8 M1377.6 284.4 v1.8 M1374.2 297.2 v1.8 M1377.6 292.2 v1.8 M1374.2 306.0 v1.8 M1377.6 301.0 v1.8 M1374.2 316.0 v1.8 M1377.6 311.0 v1.8 M1374.2 326.2 v1.8 M1377.6 321.2 v1.8 M1374.2 334.4 v1.8 M1377.6 329.4 v1.8 M1374.2 342.0 v1.8 M1377.6 337.0 v1.8 M1374.2 350.3 v1.8 M1377.6 345.3 v1.8 M1374.2 359.8 v1.8 M1377.6 354.8 v1.8 M1374.2 368.0 v1.8 M1377.6 363.0 v1.8 M1374.2 376.0 v1.8 M1377.6 371.0 v1.8 M1374.2 384.4 v1.8 M1377.6 379.4 v1.8 M1374.2 393.8 v1.8 M1377.6 388.8 v1.8 M1374.2 403.8 v1.8 M1377.6 398.8 v1.8 M1374.2 413.4 v1.8 M1377.6 408.4 v1.8 M1374.2 421.6 v1.8 M1377.6 416.6 v1.8 M1374.2 429.8 v1.8 M1377.6 424.8 v1.8 M1374.2 438.3 v1.8 M1377.6 433.3 v1.8 M1374.2 444.9 v1.8 M1377.6 439.9 v1.8 M1374.2 454.3 v1.8 M1377.6 449.3 v1.8 M1374.2 462.3 v1.8 M1377.6 457.3 v1.8 M1374.2 470.5 v1.8 M1377.6 465.5 v1.8 M1374.2 477.2 v1.8 M1377.6 472.2 v1.8 M1374.2 484.9 v1.8 M1377.6 479.9 v1.8 M1374.2 492.7 v1.8 M1377.6 487.7 v1.8 M1374.2 500.0 v1.8 M1377.6 495.0 v1.8 M1374.2 504.9 v1.8 M1377.6 499.9 v1.8" stroke="#333" stroke-width="0.8" stroke-opacity="0.6"/>
<path d="M71.0 302.1 V311.0 M71.0 321.9 V330.9 M71.0 348.2 V358.0 M71.0 404.5 V411.1 M71.0 418.3 V425.2 M71.0 445.1 V452.4 M119.0 321.8 V330.7 M119.0 385.2 V395.6 M119.0 433.0 V439.8 M119.0 467.1 V474.1 M167.0 236.7 V243.0 M167.0 250.0 V257.5 M167.0 264.2 V271.3 M167.0 321.6 V330.6 M167.0 338.6 V348.3 M167.0 448.3 V456.3 M227.5 227.8 V234.7 M227.5 234.7 V241.4 M227.5 436.2 V443.3 M227.5 450.9 V458.5 M277.0 232.9 V240.0 M277.0 300.7 V310.3 M277.0 330.2 V338.3 M277.0 368.1 V376.1 M277.0 437.4 V444.9 M277.0 452.8 V460.2 M277.0 481.2 V487.6 M317.0 231.3 V238.9 M317.0 414.5 V423.6 M364.0 207.7 V210.5 M364.0 215.0 V222.8 M364.0 291.1 V300.2 M364.0 470.4 V477.1 M405.0 320.9 V329.8 M405.0 329.8 V337.9 M405.0 348.5 V358.1 M405.0 397.1 V406.7 M405.0 406.7 V415.7 M405.0 424.4 V432.0 M405.0 463.7 V471.6 M460.5 241.7 V249.3 M460.5 368.4 V376.5 M460.5 397.4 V406.8 M511.0 309.5 V320.6 M511.0 358.2 V368.5 M511.0 376.6 V386.2 M511.0 502.7 V508.2 M568.0 386.3 V397.7 M568.0 466.8 V474.7 M632.5 200.8 V208.7 M632.5 281.9 V290.7 M632.5 299.7 V309.1 M632.5 368.6 V376.7 M632.5 386.3 V397.9 M706.0 468.0 V476.9 M803.8 193.6 V199.1 M803.8 199.1 V206.6 M803.8 206.6 V214.8 M803.8 491.7 V500.0 M1026.6 237.4 V246.1 M1026.6 508.8 V514.0 M1119.7 278.4 V286.8 M1119.7 294.7 V303.6 M1119.7 348.7 V358.2 M1119.7 374.4 V382.8 M1119.7 484.3 V492.0 M1148.5 193.5 V200.0 M1148.5 204.8 V213.4 M1148.5 314.4 V324.6 M1148.5 452.8 V461.0 M1148.5 461.0 V469.1 M1148.5 492.0 V500.5 M1148.5 507.0 V512.0 M1190.0 194.5 V201.1 M1190.0 270.6 V278.5 M1190.0 278.5 V287.0 M1190.0 428.5 V436.5 M1190.0 444.2 V452.8 M1190.0 452.8 V460.9 M1190.0 500.2 V505.3 M1231.0 202.2 V205.5 M1231.0 270.7 V278.5 M1268.0 196.5 V203.2 M1268.0 246.6 V254.3 M1268.0 270.8 V278.6 M1268.0 278.6 V287.3 M1268.0 304.0 V314.4 M1306.0 348.7 V358.2 M1306.0 366.4 V374.4 M1306.0 402.6 V411.8 M1306.0 436.6 V443.6 M1306.0 443.6 V452.7 M167.0 220.8 V221.9 M276.7 215.6 V218.7 M1268.0 203.2 V205.8 M167.0 485.8 V483.0 M1268.0 502.0 V499.5 M459.7 506.7 V501.2" stroke="#333" stroke-width="0.85" stroke-opacity="0.7"/>
<path d="M1377 215.0 V223.8 M1377 247.1 V254.9 M1377 278.9 V287.8 M1377 314.4 V324.6 M1377 420.0 V428.2 M1377 452.7 V460.7 M1377 483.3 V491.1" stroke="#333" stroke-width="0.9"/>
<path d="M31 313.8 L71 319.5 M165 302.5 L228.8 309.5 M315 311 L363.8 318.8 M117.5 396 L167.5 404.5 M275 386 L316 395 M405.6 398 L458.9 405.5 M460.4 301.5 L511.7 307.7 M1230 304.8 L1267.8 313 M1267.8 384 L1306.3 390" stroke="#333" stroke-width="0.9"/>
<path d="M30.5 224.8 L38.5 223.8 L46.5 222.8 L54.5 221.8 L62.5 220.9 L70.5 219.9 L78.5 219.0 L86.5 218.1 L94.5 217.2 L102.5 216.4 L110.5 215.5 L118.5 214.7 L126.5 213.9 L134.5 213.1 L142.5 212.3 L150.5 211.5 L158.5 210.8 L166.5 210.0 L174.5 209.3 L182.5 208.6 L190.5 207.9 L198.5 207.2 L206.5 206.5 L214.5 205.9 L222.5 205.2 L230.5 204.6 L238.5 204.0 L246.5 203.4 L254.5 202.8 L262.5 202.2 L270.5 201.7 L278.5 201.1 L286.5 200.5 L294.5 200.0 L302.5 199.5 L310.5 199.0 L318.5 198.5 L326.5 198.0 L334.5 197.5 L342.5 197.0 L350.5 196.5 L358.5 196.1 L366.5 195.6 L374.5 195.2 L382.5 194.8 L390.5 194.4 L398.5 193.9 L406.5 193.5 L414.5 193.1 L422.5 192.7 L430.5 192.4 L438.5 192.0 L446.5 191.6 L454.5 191.3 L462.5 190.9 L470.5 190.6 L478.5 190.2 L486.5 189.9 L494.5 189.6 L502.5 189.2 L510.5 188.9 L518.5 188.6 L526.5 188.3 L534.5 188.0 L542.5 187.7 L550.5 187.5 L558.5 187.2 L566.5 186.9 L574.5 186.6 L582.5 186.4 L590.5 186.1 L598.5 185.9 L606.5 185.6 L614.5 185.4 L622.5 185.2 L630.5 184.9 L638.5 184.7 L646.5 184.5 L654.5 184.3 L662.5 184.1 L670.5 183.9 L678.5 183.7 L686.5 183.5 L694.5 183.3 L702.5 183.1 L710.5 182.9 L718.5 182.7 L726.5 182.6 L734.5 182.4 L742.5 182.2 L750.5 182.1 L758.5 181.9 L766.5 181.8 L774.5 181.6 L778.4 181.6 L778.4 189.6 L789.6 189.4 L789.6 181.4 L790.5 181.4 L798.5 181.2 L806.5 181.1 L814.5 181.0 L822.5 180.9 L830.5 180.8 L838.5 180.7 L846.5 180.6 L854.5 180.5 L862.5 180.4 L870.5 180.3 L878.5 180.3 L886.5 180.2 L894.5 180.1 L901.0 180.1 L901.0 188.1 L913.0 188.0 L913.0 180.0 L918.5 180.0 L926.5 179.9 L934.5 179.9 L942.5 179.9 L950.5 179.9 L958.5 179.8 L966.5 179.8 L974.5 179.8 L982.5 179.8 L990.5 179.9 L998.5 179.9 L1006.5 179.9 L1014.5 179.9 L1022.5 180.0 L1030.5 180.0 L1032.4 180.1 L1032.4 188.1 L1044.5 188.1 L1044.5 180.1 L1046.5 180.2 L1054.5 180.2 L1062.5 180.3 L1070.5 180.4 L1078.5 180.5 L1086.5 180.6 L1094.5 180.8 L1102.5 180.9 L1110.5 181.0 L1118.5 181.2 L1126.5 181.3 L1134.5 181.5 L1142.5 181.7 L1150.5 181.9 L1158.5 182.1 L1166.5 182.3 L1174.5 182.5 L1182.5 182.7 L1190.5 183.0 L1198.5 183.2 L1206.5 183.5 L1214.5 183.8 L1222.5 184.1 L1230.5 184.4 L1238.5 184.7 L1246.5 185.1 L1254.5 185.4 L1262.5 185.8 L1270.5 186.2 L1278.5 186.5 L1286.5 187.0 L1294.5 187.4 L1302.5 187.8 L1310.5 188.3 L1318.5 188.7 L1326.5 189.2 L1334.5 189.7 L1342.5 190.2 L1350.5 190.8 L1358.5 191.3 L1366.5 191.9 L1374.5 192.5 L1377.3 192.7 M30.5 481.6 L38.5 482.6 L46.5 483.6 L54.5 484.6 L62.5 485.5 L70.5 486.5 L78.5 487.4 L86.5 488.3 L94.5 489.2 L102.5 490.0 L110.5 490.9 L118.5 491.7 L126.5 492.5 L134.5 493.3 L142.5 494.1 L150.5 494.9 L158.5 495.6 L166.5 496.4 L174.5 497.1 L182.5 497.8 L190.5 498.5 L198.5 499.2 L206.5 499.9 L214.5 500.5 L222.5 501.2 L230.5 501.8 L238.5 502.4 L246.5 503.0 L254.5 503.6 L262.5 504.2 L270.5 504.7 L278.5 505.3 L286.5 505.9 L294.5 506.4 L302.5 506.9 L310.5 507.4 L318.5 507.9 L326.5 508.4 L334.5 508.9 L342.5 509.4 L350.5 509.9 L358.5 510.3 L366.5 510.8 L374.5 511.2 L382.5 511.6 L390.5 512.0 L398.5 512.5 L406.5 512.9 L414.5 513.3 L422.5 513.7 L430.5 514.0 L438.5 514.4 L446.5 514.8 L454.5 515.1 L462.5 515.5 L470.5 515.8 L478.5 516.2 L486.5 516.5 L494.5 516.8 L502.5 517.2 L510.5 517.5 L518.5 517.8 L526.5 518.1 L534.5 518.4 L542.5 518.7 L550.5 518.9 L558.5 519.2 L566.5 519.5 L574.5 519.8 L582.5 520.0 L590.5 520.3 L598.5 520.5 L606.5 520.8 L614.5 521.0 L622.5 521.2 L630.5 521.5 L638.5 521.7 L646.5 521.9 L654.5 522.1 L662.5 522.3 L670.5 522.5 L678.5 522.7 L686.5 522.9 L694.5 523.1 L702.5 523.3 L710.5 523.5 L718.5 523.7 L726.5 523.8 L734.5 524.0 L742.5 524.2 L750.5 524.3 L758.5 524.5 L766.5 524.6 L774.5 524.8 L778.4 524.8 L778.4 516.8 L789.6 517.0 L789.6 525.0 L790.5 525.0 L798.5 525.2 L806.5 525.3 L814.5 525.4 L822.5 525.5 L830.5 525.6 L838.5 525.7 L846.5 525.8 L854.5 525.9 L862.5 526.0 L870.5 526.1 L878.5 526.1 L886.5 526.2 L894.5 526.3 L901.0 526.3 L901.0 518.3 L913.0 518.4 L913.0 526.4 L918.5 526.4 L926.5 526.5 L934.5 526.5 L942.5 526.5 L950.5 526.5 L958.5 526.6 L966.5 526.6 L974.5 526.6 L982.5 526.6 L990.5 526.5 L998.5 526.5 L1006.5 526.5 L1014.5 526.5 L1022.5 526.4 L1030.5 526.4 L1032.4 526.3 L1032.4 518.3 L1044.5 518.3 L1044.5 526.3 L1046.5 526.2 L1054.5 526.2 L1062.5 526.1 L1070.5 526.0 L1078.5 525.9 L1086.5 525.8 L1094.5 525.6 L1102.5 525.5 L1110.5 525.4 L1118.5 525.2 L1126.5 525.1 L1134.5 524.9 L1142.5 524.7 L1150.5 524.5 L1158.5 524.3 L1166.5 524.1 L1174.5 523.9 L1182.5 523.7 L1190.5 523.4 L1198.5 523.2 L1206.5 522.9 L1214.5 522.6 L1222.5 522.3 L1230.5 522.0 L1238.5 521.7 L1246.5 521.3 L1254.5 521.0 L1262.5 520.6 L1270.5 520.2 L1278.5 519.9 L1286.5 519.4 L1294.5 519.0 L1302.5 518.6 L1310.5 518.1 L1318.5 517.7 L1326.5 517.2 L1334.5 516.7 L1342.5 516.2 L1350.5 515.6 L1358.5 515.1 L1366.5 514.5 L1374.5 513.9 L1377.3 513.7" fill="none" stroke="#52bf8f" stroke-width="1"/>
<rect x="703.5" y="249.6" width="11.2" height="206.6" fill="#fff" stroke="#333" stroke-width="0.9"/>
<path d="M714.7 249.6 H1111.4 L1115.4 245.8 V460.4 L1111.4 456.2 H714.7Z" fill="#fff" stroke="#333" stroke-width="0.9"/>
<rect x="714.7" y="251" width="396.7" height="204.5" fill="#fff" stroke="#ee6a6a" stroke-width="0.9"/>
<rect x="706.2" y="260" width="5.3" height="8.3" fill="#fff" stroke="#333" stroke-width="0.8"/>
<rect x="706.2" y="302.5" width="5.3" height="8.3" fill="#fff" stroke="#333" stroke-width="0.8"/>
<rect x="706.2" y="349.4" width="5.3" height="8.3" fill="#fff" stroke="#333" stroke-width="0.8"/>
<rect x="706.2" y="396.3" width="5.3" height="8.3" fill="#fff" stroke="#333" stroke-width="0.8"/>
<rect x="706.2" y="438.6" width="5.3" height="8.3" fill="#fff" stroke="#333" stroke-width="0.8"/>
<text x="787.9" y="317.8" font-size="22.45" font-family="Liberation Sans" fill="#151515">No Extra Cut Outs</text>
<rect x="226.3" y="326.4" width="52.1" height="54.0" fill="#fff" stroke="#e85c5c" stroke-width="0.9"/>
<rect x="317.4" y="333.5" width="45.9" height="39.5" fill="#fff" stroke="#e85c5c" stroke-width="0.9"/>
<rect x="406.3" y="325.5" width="55.3" height="55.7" fill="#fff" stroke="#e85c5c" stroke-width="0.9"/>
<rect x="569.1" y="320.5" width="63.4" height="65.8" fill="#fff" stroke="#e85c5c" stroke-width="0.9"/>
<rect x="637.4" y="302.4" width="64.2" height="26.4" fill="#fff" stroke="#e85c5c" stroke-width="0.9"/>
<rect x="637.4" y="377.5" width="64.2" height="26.8" fill="#fff" stroke="#e85c5c" stroke-width="0.9"/>
<rect x="1147.8" y="324.4" width="121.9" height="58.2" fill="#fff" stroke="#e85c5c" stroke-width="0.9"/>
<rect x="119.6" y="347.4" width="6.0" height="12.2" fill="#fff" stroke="#e85c5c" stroke-width="0.9"/>
<rect x="170" y="331.1" width="8.6" height="8.5" fill="#fff" stroke="#e85c5c" stroke-width="0.9"/>
<rect x="170" y="367.4" width="8.6" height="8.2" fill="#fff" stroke="#e85c5c" stroke-width="0.9"/>
<rect x="623.2" y="310.4" width="8.4" height="8.2" fill="#fff" stroke="#e85c5c" stroke-width="0.9"/>
<rect x="623.2" y="388.2" width="8.4" height="8.5" fill="#fff" stroke="#e85c5c" stroke-width="0.9"/>
<rect x="1124.1" y="253.7" width="15.7" height="5.6" fill="#fff" stroke="#e85c5c" stroke-width="0.9"/>
<rect x="1124.1" y="283.1" width="15.7" height="5.7" fill="#fff" stroke="#e85c5c" stroke-width="0.9"/>
<rect x="1124.1" y="311.8" width="15.5" height="5.9" fill="#fff" stroke="#e85c5c" stroke-width="0.9"/>
<rect x="1124.1" y="389.3" width="15.5" height="5.5" fill="#fff" stroke="#e85c5c" stroke-width="0.9"/>
<rect x="1124.1" y="418.3" width="15.7" height="5.4" fill="#fff" stroke="#e85c5c" stroke-width="0.9"/>
<rect x="1124.1" y="447.4" width="15.7" height="5.6" fill="#fff" stroke="#e85c5c" stroke-width="0.9"/>
<rect x="1118.1" y="332.2" width="8.6" height="5.2" fill="#fff" stroke="#e85c5c" stroke-width="0.9"/>
<rect x="1118.1" y="369.6" width="8.6" height="5.2" fill="#fff" stroke="#e85c5c" stroke-width="0.9"/>
<rect x="1302.3" y="349.2" width="7.9" height="8.0" fill="#fff" stroke="#e85c5c" stroke-width="0.9"/>
<circle cx="150.4" cy="353.3" r="11.1" fill="#fff" stroke="#e85c5c" stroke-width="0.9"/>
<circle cx="665.3" cy="353.1" r="16.5" fill="#fff" stroke="#e85c5c" stroke-width="0.9"/>
<circle cx="1341.9" cy="353.2" r="13.2" fill="#fff" stroke="#e85c5c" stroke-width="0.9"/>
<rect x="1307.0" y="315.4" width="9" height="9" fill="#fff" stroke="#e85c5c" stroke-width="0.9" transform="rotate(15 1311.5 319.9)"/>
<rect x="1307.0" y="382.5" width="9" height="9" fill="#fff" stroke="#e85c5c" stroke-width="0.9" transform="rotate(15 1311.5 387)"/>
<path d="M139.5 333.0 h1.8 M156.1 333.0 h1.8 M139.5 374.0 h1.8 M156.1 374.0 h1.8 M186.1 344.6 h1.8 M186.1 362.0 h1.8 M217.1 327.0 h1.8 M217.1 380.0 h1.8 M328.4 326.7 h1.8 M328.4 380.3 h1.8 M531.1 315.0 h1.8 M531.1 392.0 h1.8 M636.6 299.0 h1.8 M636.6 408.0 h1.8 M637.6 334.0 h1.8 M635.1 343.0 h1.8 M635.1 364.0 h1.8 M637.1 373.0 h1.8 M696.9 337.0 h1.8 M696.9 345.5 h1.8 M696.9 361.0 h1.8 M696.9 369.7 h1.8 M1238.1 309.6 h1.8 M1238.1 397.0 h1.8 M1356.3 309.8 h1.8 M1333.1 327.8 h1.8 M1347.9 327.8 h1.8 M1319.1 337.0 h1.8 M1365.1 337.0 h1.8 M1315.6 353.8 h1.8 M1367.1 349.0 h1.8 M1319.1 370.0 h1.8 M1365.1 370.0 h1.8 M1333.1 379.0 h1.8 M1347.9 379.0 h1.8 M1356.3 397.0 h1.8 M802.1 248.0 h1.8 M916.1 248.0 h1.8 M1026.1 248.0 h1.8 M802.1 458.0 h1.8 M916.1 458.0 h1.8 M1026.1 458.0 h1.8" stroke="#e03a3a" stroke-width="1.6"/>
<circle cx="108" cy="345" r="1.1" fill="none" stroke="#e85c5c" stroke-width="0.7"/>
<circle cx="100.4" cy="362" r="1.1" fill="none" stroke="#e85c5c" stroke-width="0.7"/>
<path d="M146.0 211.8 h3 M146.0 494.6 h3 M333.5 197.5 h3 M333.5 508.9 h3 M639.5 184.6 h3 M639.5 521.8 h3 M1271.5 186.3 h3 M1271.5 520.1 h3 M684.5 556.1 h3 M750.5 251.0 h3 M898.5 455.5 h3 M231.5 326.4 h3 M261.1 380.4 h3 M326.5 333.5 h3 M349.2 373.0 h3 M415.5 325.5 h3 M446.5 381.2 h3 M581.5 320.5 h3 M613.5 386.3 h3 M645.5 302.4 h3 M685.9 328.8 h3 M647.5 377.5 h3 M684.5 404.3 h3 M1159.5 324.4 h3 M1245.5 382.6 h3" stroke="#fff" stroke-width="2"/>
</g></svg>
</body></html>
